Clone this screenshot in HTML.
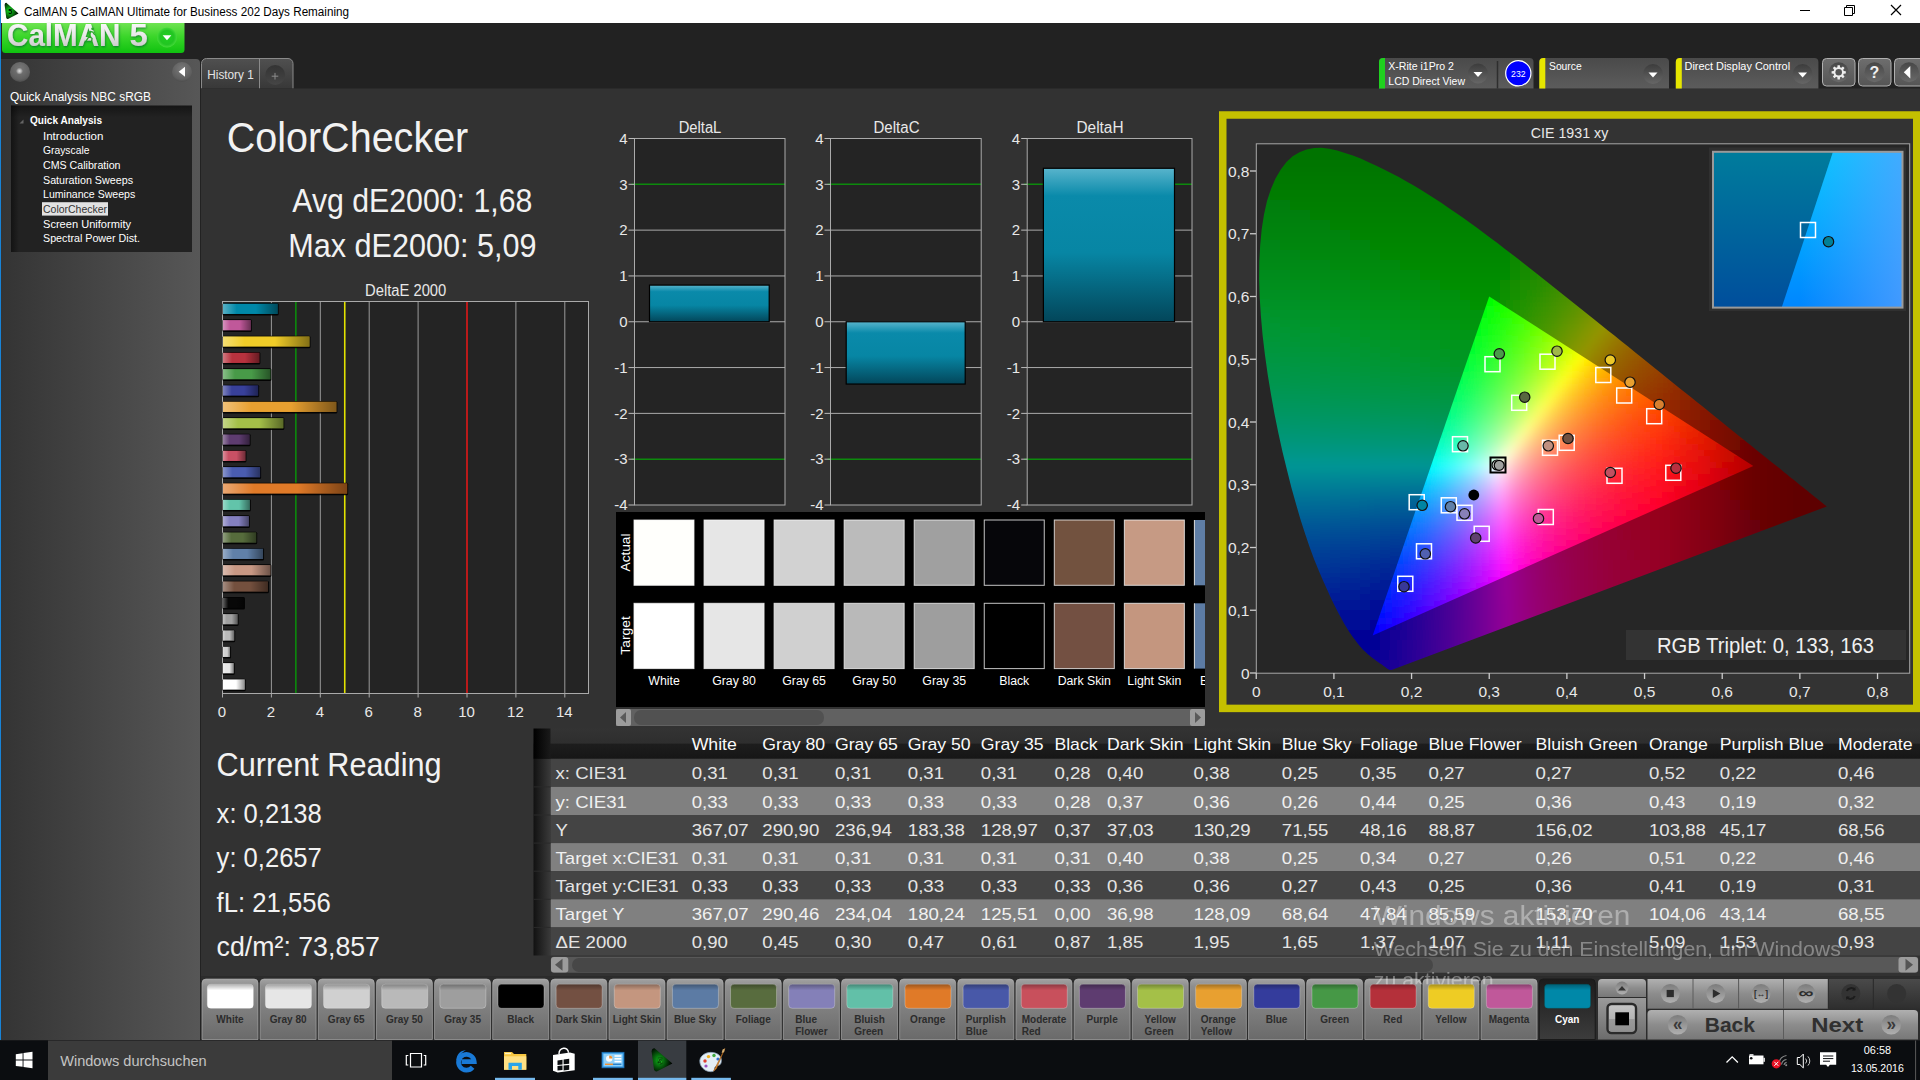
<!DOCTYPE html>
<html><head><meta charset="utf-8"><title>CalMAN 5</title>
<style>
html,body{margin:0;padding:0;background:#222;overflow:hidden}
svg{display:block;position:absolute;left:0;top:0}
text{font-family:"Liberation Sans",sans-serif}
.g10 rect{width:10px;height:10px}.g6 rect{width:6px;height:6px}
</style></head><body>
<svg width="1920" height="1080" viewBox="0 0 1920 1080">
<defs>
<radialGradient id="gico" cx="0.36" cy="0.5" r="0.62"><stop offset="0" stop-color="#14f02a"/><stop offset="0.35" stop-color="#0a9a12"/><stop offset="0.75" stop-color="#043c06"/><stop offset="1" stop-color="#000"/></radialGradient>
<linearGradient id="glogo" x1="0" y1="0" x2="0" y2="1"><stop offset="0" stop-color="#6fe352"/><stop offset="0.45" stop-color="#3bd62a"/><stop offset="1" stop-color="#0fc20f"/></linearGradient>
<linearGradient id="gtxt" x1="0" y1="0" x2="0" y2="1"><stop offset="0" stop-color="#ffffff"/><stop offset="0.5" stop-color="#e8e8e8"/><stop offset="1" stop-color="#bdbdbd"/></linearGradient>
<filter id="lsh" x="-5%" y="-20%" width="110%" height="150%"><feDropShadow dx="0.6" dy="1.2" stdDeviation="0.8" flood-color="#063" flood-opacity="0.75"/></filter>
<radialGradient id="gdrop" cx="0.5" cy="0.5" r="0.5"><stop offset="0" stop-color="#1fd01f"/><stop offset="0.7" stop-color="#22c522"/><stop offset="1" stop-color="#45da3a"/></radialGradient>
<linearGradient id="gside" x1="0" y1="0" x2="1" y2="0"><stop offset="0" stop-color="#343434"/><stop offset="1" stop-color="#575757"/></linearGradient>
<linearGradient id="gsidev" x1="0" y1="0" x2="0" y2="1"><stop offset="0" stop-color="#000" stop-opacity="0"/><stop offset="0.2" stop-color="#000" stop-opacity="0"/><stop offset="1" stop-color="#000" stop-opacity="0.12"/></linearGradient>
<radialGradient id="gball" cx="0.5" cy="0.35" r="0.65"><stop offset="0" stop-color="#7a7a7a"/><stop offset="0.8" stop-color="#5e5e5e"/><stop offset="1" stop-color="#4c4c4c"/></radialGradient>
<radialGradient id="gball2" cx="0.5" cy="0.5" r="0.5"><stop offset="0" stop-color="#e0e0e0"/><stop offset="0.5" stop-color="#b0b0b0"/><stop offset="1" stop-color="#6c6c6c"/></radialGradient>
<linearGradient id="gtree" x1="0" y1="0" x2="0" y2="1"><stop offset="0" stop-color="#151515"/><stop offset="0.08" stop-color="#222"/><stop offset="1" stop-color="#222"/></linearGradient>
<linearGradient id="gtreel" x1="0" y1="0" x2="1" y2="0"><stop offset="0" stop-color="#000" stop-opacity="0.45"/><stop offset="1" stop-color="#000" stop-opacity="0"/></linearGradient>
<linearGradient id="gtab" x1="0" y1="0" x2="0" y2="1"><stop offset="0" stop-color="#505050"/><stop offset="1" stop-color="#383838"/></linearGradient>
<linearGradient id="gplus" x1="0" y1="0" x2="0" y2="1"><stop offset="0" stop-color="#333"/><stop offset="1" stop-color="#464646"/></linearGradient>
<linearGradient id="gtb" x1="0" y1="0" x2="0" y2="1"><stop offset="0" stop-color="#4a4a4a"/><stop offset="1" stop-color="#5c5c5c"/></linearGradient>
<linearGradient id="gdd" x1="0" y1="0" x2="0" y2="1"><stop offset="0" stop-color="#3c3c3c"/><stop offset="1" stop-color="#666"/></linearGradient>
<linearGradient id="gbtn" x1="0" y1="0" x2="0" y2="1"><stop offset="0" stop-color="#6e6e6e"/><stop offset="1" stop-color="#555"/></linearGradient>
<linearGradient id="gbc" x1="0" y1="0" x2="0" y2="1"><stop offset="0" stop-color="#474747"/><stop offset="1" stop-color="#6a6a6a"/></linearGradient>
<linearGradient id="gbar" x1="0" y1="0" x2="1" y2="0"><stop offset="0" stop-color="#fff" stop-opacity="0.35"/><stop offset="0.25" stop-color="#fff" stop-opacity="0"/><stop offset="0.6" stop-color="#000" stop-opacity="0"/><stop offset="1" stop-color="#000" stop-opacity="0.45"/></linearGradient>
<linearGradient id="gcy" x1="0" y1="0" x2="0" y2="1"><stop offset="0" stop-color="#58b4cc"/><stop offset="0.18" stop-color="#0a8aaa"/><stop offset="0.55" stop-color="#0786a4"/><stop offset="1" stop-color="#03465a"/></linearGradient>
<clipPath id="cswp"><rect x="616" y="512" width="589" height="195"/></clipPath>
<linearGradient id="gin1" x1="0" y1="0" x2="0" y2="1"><stop offset="0" stop-color="#007c9c"/><stop offset="1" stop-color="#004e9c"/></linearGradient>
<linearGradient id="gin2" x1="0" y1="0" x2="0" y2="1"><stop offset="0" stop-color="#00caff"/><stop offset="1" stop-color="#0086ff"/></linearGradient>
<linearGradient id="gin3" x1="1800" y1="0" x2="1903" y2="0" gradientUnits="userSpaceOnUse"><stop offset="0" stop-color="#58a0ff" stop-opacity="0"/><stop offset="1" stop-color="#58a0ff" stop-opacity="0.75"/></linearGradient>
<linearGradient id="ghdr" x1="0" y1="0" x2="0" y2="1"><stop offset="0" stop-color="#333"/><stop offset="0.48" stop-color="#2e2e2e"/><stop offset="0.52" stop-color="#1d1d1d"/><stop offset="1" stop-color="#161616"/></linearGradient>
<linearGradient id="grh" x1="0" y1="0" x2="1" y2="0"><stop offset="0" stop-color="#111"/><stop offset="1" stop-color="#3a3a3a"/></linearGradient>
<linearGradient id="grh0" x1="0" y1="0" x2="1" y2="0"><stop offset="0" stop-color="#000"/><stop offset="1" stop-color="#1a1a1a"/></linearGradient>
<clipPath id="ctab"><rect x="533" y="728" width="1387" height="230"/></clipPath>
<linearGradient id="gbt" x1="0" y1="0" x2="0" y2="1"><stop offset="0" stop-color="#a2a2a2"/><stop offset="0.12" stop-color="#8e8e8e"/><stop offset="1" stop-color="#6a6a6a"/></linearGradient>
<linearGradient id="gbtsel" x1="0" y1="0" x2="0" y2="1"><stop offset="0" stop-color="#1c1c1c"/><stop offset="1" stop-color="#3c3c3c"/></linearGradient>
<linearGradient id="gsws" x1="0" y1="0" x2="0" y2="1"><stop offset="0" stop-color="#000" stop-opacity="0.3"/><stop offset="0.25" stop-color="#000" stop-opacity="0"/><stop offset="1" stop-color="#000" stop-opacity="0"/></linearGradient>
<linearGradient id="gct" x1="0" y1="0" x2="0" y2="1"><stop offset="0" stop-color="#b0b0b0"/><stop offset="0.5" stop-color="#8c8c8c"/><stop offset="1" stop-color="#787878"/></linearGradient>
<linearGradient id="gct2" x1="0" y1="0" x2="0" y2="1"><stop offset="0" stop-color="#9a9a9a"/><stop offset="1" stop-color="#6c6c6c"/></linearGradient>
<linearGradient id="gdis" x1="0" y1="0" x2="0" y2="1"><stop offset="0" stop-color="#4a4a4a"/><stop offset="1" stop-color="#2e2e2e"/></linearGradient>
<radialGradient id="gcb" cx="0.5" cy="0.3" r="0.7"><stop offset="0" stop-color="#8a8a8a"/><stop offset="1" stop-color="#a6a6a6"/></radialGradient>
<linearGradient id="gcbl" x1="0" y1="0" x2="0" y2="1"><stop offset="0" stop-color="#7c7c7c"/><stop offset="1" stop-color="#b0b0b0"/></linearGradient>
<linearGradient id="gstp" x1="0" y1="0" x2="0" y2="1"><stop offset="0" stop-color="#c4c4c4"/><stop offset="0.5" stop-color="#b4b4b4"/><stop offset="0.52" stop-color="#9a9a9a"/><stop offset="1" stop-color="#909090"/></linearGradient>
<radialGradient id="gico2" cx="0.36" cy="0.52" r="0.62"><stop offset="0" stop-color="#10b81c"/><stop offset="0.3" stop-color="#087a10"/><stop offset="0.7" stop-color="#033006"/><stop offset="1" stop-color="#000"/></radialGradient>
<clipPath id="cwm"><rect x="1300" y="880" width="620" height="104.3"/></clipPath>
</defs>
<rect x="0" y="0" width="1920" height="1080" fill="#222"/>
<rect x="0" y="0" width="1920" height="23" fill="#fff"/>
<text x="24" y="16" font-size="12" fill="#000" textLength="325" lengthAdjust="spacingAndGlyphs">CalMAN 5 CalMAN Ultimate for Business 202 Days Remaining</text>
<path d="M6.3 2.8 L18.5 13.4 L8 19 Q6.6 19.2 6.2 17.5 L4.6 5 Q4.8 2.6 6.3 2.8 Z" fill="url(#gico)"/>
<text x="8.3" y="13.6" font-size="7" fill="#000" font-weight="bold">5</text>
<line x1="1800" y1="10.5" x2="1810" y2="10.5" stroke="#000" stroke-width="1" />
<path d="M1844.5 7.5h8v8h-8z M1846.5 7.5v-2h8v8h-2" fill="none" stroke="#000" stroke-width="1"/>
<path d="M1891 5 L1901 15 M1901 5 L1891 15" fill="none" stroke="#000" stroke-width="1.2"/>
<rect x="0" y="0" width="1" height="1040" fill="#1883d7"/>
<path d="M2 23 H184.5 V49.5 a3.5 3.5 0 0 1 -3.5 3.5 H5.5 a3.5 3.5 0 0 1 -3.5 -3.5 Z" fill="url(#glogo)"/>
<g filter="url(#lsh)">
<text x="7" y="46.2" font-size="30.5" fill="url(#gtxt)" font-weight="bold" textLength="113.5" lengthAdjust="spacingAndGlyphs">CalMAN</text>
<text x="129.5" y="46.2" font-size="30.5" fill="url(#gtxt)" font-weight="bold" textLength="18.3" lengthAdjust="spacingAndGlyphs">5</text>
</g>
<path d="M88 33.5 l2.2 -2.2 l2.6 0.8 l1.6 2.4 M90.5 32 l-1.2 4.2 l2.8 2.2 l-0.6 3.4 M89.3 36.2 l-3 4.4" fill="none" stroke="#2aa82a" stroke-width="1.3" stroke-linecap="round" stroke-linejoin="round"/>
<circle cx="92.6" cy="28.8" r="1.4" fill="#2aa82a"/>
<circle cx="167" cy="37.5" r="10" fill="url(#gdrop)"/>
<path d="M162.6 35.3 h8.8 l-4.4 5 z" fill="#fff"/>
<path d="M1 59 H196 a4 4 0 0 1 4 4 V1040 H1 Z" fill="url(#gside)"/>
<circle cx="20" cy="72" r="10" fill="url(#gball)"/>
<circle cx="19.5" cy="71" r="3.6" fill="url(#gball2)"/>
<circle cx="182" cy="72" r="10" fill="url(#gball)"/>
<path d="M178.7 71.7 l6.3 -5 v10 z" fill="#fff"/>
<text x="10" y="101" font-size="12.5" fill="#fff" textLength="141" lengthAdjust="spacingAndGlyphs">Quick Analysis NBC sRGB</text>
<rect x="11" y="105.5" width="181" height="146.5" fill="url(#gtree)"/>
<rect x="11" y="105.5" width="8" height="146.5" fill="url(#gtreel)"/>
<path d="M19.5 123.5 l4 -4 v4 z" fill="#666"/>
<text x="30" y="124" font-size="10.8" fill="#fff" font-weight="bold" textLength="72" lengthAdjust="spacingAndGlyphs">Quick Analysis</text>
<text x="43" y="139.7" font-size="10.6" fill="#fff" textLength="60.3" lengthAdjust="spacingAndGlyphs">Introduction</text>
<text x="43" y="154.35" font-size="10.6" fill="#fff" textLength="46.4" lengthAdjust="spacingAndGlyphs">Grayscale</text>
<text x="43" y="169" font-size="10.6" fill="#fff" textLength="77.5" lengthAdjust="spacingAndGlyphs">CMS Calibration</text>
<text x="43" y="183.65" font-size="10.6" fill="#fff" textLength="90" lengthAdjust="spacingAndGlyphs">Saturation Sweeps</text>
<text x="43" y="198.3" font-size="10.6" fill="#fff" textLength="92.3" lengthAdjust="spacingAndGlyphs">Luminance Sweeps</text>
<rect x="42" y="202.2" width="66" height="13.4" fill="#e2e2e2"/>
<text x="43" y="212.95" font-size="10.6" fill="#333" textLength="64" lengthAdjust="spacingAndGlyphs">ColorChecker</text>
<text x="43" y="227.6" font-size="10.6" fill="#fff" textLength="88" lengthAdjust="spacingAndGlyphs">Screen Uniformity</text>
<text x="43" y="242.25" font-size="10.6" fill="#fff" textLength="97" lengthAdjust="spacingAndGlyphs">Spectral Power Dist.</text>
<path d="M201.5 88.5 V63.5 a5 5 0 0 1 5 -5 H288 a5 5 0 0 1 5 5 V88.5" fill="url(#gtab)" stroke="#8a8a8a" stroke-width="1"/>
<line x1="259.5" y1="59" x2="259.5" y2="88.5" stroke="#8a8a8a" stroke-width="1" />
<text x="207.3" y="78.8" font-size="13.2" fill="#e4e4e4" textLength="46.4" lengthAdjust="spacingAndGlyphs">History 1</text>
<circle cx="275.2" cy="75" r="10" fill="url(#gplus)"/>
<path d="M271.7 76.2 h6.6 M275 72.9 v6.6" fill="none" stroke="#8c8c8c" stroke-width="1"/>
<rect x="201" y="88.5" width="1719" height="888" fill="#323232"/>
<path d="M1379 88.5 V62 a4 4 0 0 1 4 -4 H1529.5 a4 4 0 0 1 4 4 V88.5 Z" fill="url(#gtb)"/>
<path d="M1379 88.5 V62 a4 4 0 0 1 4 -4 H1385 V88.5 Z" fill="#1fd11f"/>
<text x="1388.3" y="70" font-size="11.6" fill="#fff" textLength="65.6" lengthAdjust="spacingAndGlyphs">X-Rite i1Pro 2</text>
<text x="1388.3" y="84.6" font-size="11.6" fill="#fff" textLength="76.7" lengthAdjust="spacingAndGlyphs">LCD Direct View</text>
<circle cx="1478" cy="73.5" r="10" fill="url(#gdd)"/>
<path d="M1473.5 72 h9 l-4.5 5 z" fill="#fff"/>
<line x1="1497.5" y1="61" x2="1497.5" y2="88.5" stroke="#2e2e2e" stroke-width="1.5" />
<circle cx="1518.3" cy="73.3" r="12.6" fill="#0000ff" stroke="#fff" stroke-width="1.2"/>
<text x="1518.3" y="76.8" font-size="9.4" fill="#fff" text-anchor="middle" textLength="14.5" lengthAdjust="spacingAndGlyphs">232</text>
<path d="M1539.3 88.5 V62 a4 4 0 0 1 4 -4 H1665 a4 4 0 0 1 4 4 V88.5 Z" fill="url(#gtb)"/>
<path d="M1539.3 88.5 V62 a4 4 0 0 1 4 -4 H1545.3 V88.5 Z" fill="#e6e600"/>
<text x="1549" y="70" font-size="11.6" fill="#fff" textLength="32.7" lengthAdjust="spacingAndGlyphs">Source</text>
<circle cx="1653" cy="74" r="10" fill="url(#gdd)"/>
<path d="M1648.5 72.5 h9 l-4.5 5 z" fill="#fff"/>
<path d="M1675.8 88.5 V62 a4 4 0 0 1 4 -4 H1814.4 a4 4 0 0 1 4 4 V88.5 Z" fill="url(#gtb)"/>
<path d="M1675.8 88.5 V62 a4 4 0 0 1 4 -4 H1681.8 V88.5 Z" fill="#e6e600"/>
<text x="1684.5" y="70" font-size="11.6" fill="#fff" textLength="105.6" lengthAdjust="spacingAndGlyphs">Direct Display Control</text>
<circle cx="1802.6" cy="74" r="10" fill="url(#gdd)"/>
<path d="M1798.1 72.5 h9 l-4.5 5 z" fill="#fff"/>
<rect x="1822.5" y="58.5" width="32.5" height="27.5" fill="url(#gbtn)" rx="4" stroke="#b0b0b0" stroke-width="1"/>
<rect x="1858.5" y="58.5" width="32.5" height="27.5" fill="url(#gbtn)" rx="4" stroke="#b0b0b0" stroke-width="1"/>
<rect x="1894.5" y="58.5" width="32.5" height="27.5" fill="url(#gbtn)" rx="4" stroke="#b0b0b0" stroke-width="1"/>
<circle cx="1838.7" cy="72.3" r="10" fill="url(#gbc)"/>
<circle cx="1874.5" cy="72.3" r="10" fill="url(#gbc)"/>
<circle cx="1909" cy="72.3" r="10" fill="url(#gbc)"/>
<path d="M1845.81 71.15 L1845.81 73.45 L1843.73 73.64 L1843.20 74.91 L1844.54 76.52 L1842.92 78.14 L1841.31 76.80 L1840.04 77.33 L1839.85 79.41 L1837.55 79.41 L1837.36 77.33 L1836.09 76.80 L1834.48 78.14 L1832.86 76.52 L1834.20 74.91 L1833.67 73.64 L1831.59 73.45 L1831.59 71.15 L1833.67 70.96 L1834.20 69.69 L1832.86 68.08 L1834.48 66.46 L1836.09 67.80 L1837.36 67.27 L1837.55 65.19 L1839.85 65.19 L1840.04 67.27 L1841.31 67.80 L1842.92 66.46 L1844.54 68.08 L1843.20 69.69 L1843.73 70.96 Z" fill="#eee"/>
<circle cx="1838.7" cy="72.3" r="3.3" fill="#5a5a5a" stroke="#eee" stroke-width="0"/>
<circle cx="1838.7" cy="72.3" r="2.6" fill="#555"/>
<text x="1874.5" y="78" font-size="16" fill="#f0f0f0" font-weight="bold" text-anchor="middle">?</text>
<path d="M1903.8 72.3 l6.5 -6.3 v12.6 z" fill="#fff"/>
<text x="226.7" y="151.7" font-size="42.5" fill="#f2f2f2" textLength="241.6" lengthAdjust="spacingAndGlyphs">ColorChecker</text>
<text x="292.3" y="212.3" font-size="33" fill="#f2f2f2" textLength="240" lengthAdjust="spacingAndGlyphs">Avg dE2000: 1,68</text>
<text x="288.3" y="256.7" font-size="33" fill="#f2f2f2" textLength="248.3" lengthAdjust="spacingAndGlyphs">Max dE2000: 5,09</text>
<text x="365" y="295.6" font-size="16" fill="#e8e8e8" textLength="81.3" lengthAdjust="spacingAndGlyphs">DeltaE 2000</text>
<rect x="222.5" y="301.5" width="366" height="392" fill="#242424"/>
<line x1="271.4" y1="301.5" x2="271.4" y2="693.5" stroke="#9a9a9a" stroke-width="1" />
<line x1="320.3" y1="301.5" x2="320.3" y2="693.5" stroke="#9a9a9a" stroke-width="1" />
<line x1="369.2" y1="301.5" x2="369.2" y2="693.5" stroke="#9a9a9a" stroke-width="1" />
<line x1="418.1" y1="301.5" x2="418.1" y2="693.5" stroke="#9a9a9a" stroke-width="1" />
<line x1="515.9" y1="301.5" x2="515.9" y2="693.5" stroke="#9a9a9a" stroke-width="1" />
<line x1="564.8" y1="301.5" x2="564.8" y2="693.5" stroke="#9a9a9a" stroke-width="1" />
<line x1="295.85" y1="301.5" x2="295.85" y2="693.5" stroke="#0c8a0c" stroke-width="1.6" />
<line x1="344.75" y1="301.5" x2="344.75" y2="693.5" stroke="#e2e200" stroke-width="1.6" />
<line x1="467" y1="301.5" x2="467" y2="693.5" stroke="#e01818" stroke-width="1.6" />
<rect x="222.5" y="301.5" width="366" height="392" fill="none" stroke="#aaa" stroke-width="1"/>
<rect x="222.5" y="302.967" width="56.2125" height="12.6" fill="#000" rx="1.5" opacity="0.9"/>
<rect x="223" y="303.767" width="54.7125" height="10.2" fill="#0088a8"/>
<rect x="223" y="303.767" width="54.7125" height="10.2" fill="url(#gbar)"/>
<rect x="222.5" y="319.3" width="29.3175" height="12.6" fill="#000" rx="1.5" opacity="0.9"/>
<rect x="223" y="320.1" width="27.8175" height="10.2" fill="#c0589a"/>
<rect x="223" y="320.1" width="27.8175" height="10.2" fill="url(#gbar)"/>
<rect x="222.5" y="335.633" width="87.9975" height="12.6" fill="#000" rx="1.5" opacity="0.9"/>
<rect x="223" y="336.433" width="86.4975" height="10.2" fill="#f0cc28"/>
<rect x="223" y="336.433" width="86.4975" height="10.2" fill="url(#gbar)"/>
<rect x="222.5" y="351.967" width="37.875" height="12.6" fill="#000" rx="1.5" opacity="0.9"/>
<rect x="223" y="352.767" width="36.375" height="10.2" fill="#b8323e"/>
<rect x="223" y="352.767" width="36.375" height="10.2" fill="url(#gbar)"/>
<rect x="222.5" y="368.3" width="48.8775" height="12.6" fill="#000" rx="1.5" opacity="0.9"/>
<rect x="223" y="369.1" width="47.3775" height="10.2" fill="#489a48"/>
<rect x="223" y="369.1" width="47.3775" height="10.2" fill="url(#gbar)"/>
<rect x="222.5" y="384.633" width="36.6525" height="12.6" fill="#000" rx="1.5" opacity="0.9"/>
<rect x="223" y="385.433" width="35.1525" height="10.2" fill="#38409a"/>
<rect x="223" y="385.433" width="35.1525" height="10.2" fill="url(#gbar)"/>
<rect x="222.5" y="400.967" width="114.893" height="12.6" fill="#000" rx="1.5" opacity="0.9"/>
<rect x="223" y="401.767" width="113.393" height="10.2" fill="#e8a030"/>
<rect x="223" y="401.767" width="113.393" height="10.2" fill="url(#gbar)"/>
<rect x="222.5" y="417.3" width="61.836" height="12.6" fill="#000" rx="1.5" opacity="0.9"/>
<rect x="223" y="418.1" width="60.336" height="10.2" fill="#a4c048"/>
<rect x="223" y="418.1" width="60.336" height="10.2" fill="url(#gbar)"/>
<rect x="222.5" y="433.633" width="28.095" height="12.6" fill="#000" rx="1.5" opacity="0.9"/>
<rect x="223" y="434.433" width="26.595" height="10.2" fill="#5e3c70"/>
<rect x="223" y="434.433" width="26.595" height="10.2" fill="url(#gbar)"/>
<rect x="222.5" y="449.967" width="23.9385" height="12.6" fill="#000" rx="1.5" opacity="0.9"/>
<rect x="223" y="450.767" width="22.4385" height="10.2" fill="#c85064"/>
<rect x="223" y="450.767" width="22.4385" height="10.2" fill="url(#gbar)"/>
<rect x="222.5" y="466.3" width="38.6085" height="12.6" fill="#000" rx="1.5" opacity="0.9"/>
<rect x="223" y="467.1" width="37.1085" height="10.2" fill="#4a5cb0"/>
<rect x="223" y="467.1" width="37.1085" height="10.2" fill="url(#gbar)"/>
<rect x="222.5" y="482.633" width="125.65" height="12.6" fill="#000" rx="1.5" opacity="0.9"/>
<rect x="223" y="483.433" width="124.15" height="10.2" fill="#e07a28"/>
<rect x="223" y="483.433" width="124.15" height="10.2" fill="url(#gbar)"/>
<rect x="222.5" y="498.967" width="28.3395" height="12.6" fill="#000" rx="1.5" opacity="0.9"/>
<rect x="223" y="499.767" width="26.8395" height="10.2" fill="#62c4aa"/>
<rect x="223" y="499.767" width="26.8395" height="10.2" fill="url(#gbar)"/>
<rect x="222.5" y="515.3" width="27.3615" height="12.6" fill="#000" rx="1.5" opacity="0.9"/>
<rect x="223" y="516.1" width="25.8615" height="10.2" fill="#8480c0"/>
<rect x="223" y="516.1" width="25.8615" height="10.2" fill="url(#gbar)"/>
<rect x="222.5" y="531.633" width="34.6965" height="12.6" fill="#000" rx="1.5" opacity="0.9"/>
<rect x="223" y="532.433" width="33.1965" height="10.2" fill="#566c3c"/>
<rect x="223" y="532.433" width="33.1965" height="10.2" fill="url(#gbar)"/>
<rect x="222.5" y="547.967" width="41.5425" height="12.6" fill="#000" rx="1.5" opacity="0.9"/>
<rect x="223" y="548.767" width="40.0425" height="10.2" fill="#6080a8"/>
<rect x="223" y="548.767" width="40.0425" height="10.2" fill="url(#gbar)"/>
<rect x="222.5" y="564.3" width="48.8775" height="12.6" fill="#000" rx="1.5" opacity="0.9"/>
<rect x="223" y="565.1" width="47.3775" height="10.2" fill="#c89884"/>
<rect x="223" y="565.1" width="47.3775" height="10.2" fill="url(#gbar)"/>
<rect x="222.5" y="580.633" width="46.4325" height="12.6" fill="#000" rx="1.5" opacity="0.9"/>
<rect x="223" y="581.433" width="44.9325" height="10.2" fill="#74503e"/>
<rect x="223" y="581.433" width="44.9325" height="10.2" fill="url(#gbar)"/>
<rect x="222.5" y="596.967" width="22.4715" height="12.6" fill="#000" rx="1.5" opacity="0.9"/>
<rect x="223" y="597.767" width="20.9715" height="10.2" fill="#080808"/>
<rect x="223" y="597.767" width="20.9715" height="10.2" fill="url(#gbar)"/>
<rect x="222.5" y="613.3" width="16.1145" height="12.6" fill="#000" rx="1.5" opacity="0.9"/>
<rect x="223" y="614.1" width="14.6145" height="10.2" fill="#a0a0a0"/>
<rect x="223" y="614.1" width="14.6145" height="10.2" fill="url(#gbar)"/>
<rect x="222.5" y="629.633" width="12.6915" height="12.6" fill="#000" rx="1.5" opacity="0.9"/>
<rect x="223" y="630.433" width="11.1915" height="10.2" fill="#bababa"/>
<rect x="223" y="630.433" width="11.1915" height="10.2" fill="url(#gbar)"/>
<rect x="222.5" y="645.967" width="8.535" height="12.6" fill="#000" rx="1.5" opacity="0.9"/>
<rect x="223" y="646.767" width="7.035" height="10.2" fill="#d0d0d0"/>
<rect x="223" y="646.767" width="7.035" height="10.2" fill="url(#gbar)"/>
<rect x="222.5" y="662.3" width="12.2025" height="12.6" fill="#000" rx="1.5" opacity="0.9"/>
<rect x="223" y="663.1" width="10.7025" height="10.2" fill="#e6e6e6"/>
<rect x="223" y="663.1" width="10.7025" height="10.2" fill="url(#gbar)"/>
<rect x="222.5" y="678.633" width="23.205" height="12.6" fill="#000" rx="1.5" opacity="0.9"/>
<rect x="223" y="679.433" width="21.705" height="10.2" fill="#ffffff"/>
<rect x="223" y="679.433" width="21.705" height="10.2" fill="url(#gbar)"/>
<text x="222" y="716.5" font-size="15" fill="#e8e8e8" text-anchor="middle">0</text>
<line x1="222.5" y1="693.5" x2="222.5" y2="697.5" stroke="#aaa" stroke-width="1" />
<text x="270.9" y="716.5" font-size="15" fill="#e8e8e8" text-anchor="middle">2</text>
<line x1="271.4" y1="693.5" x2="271.4" y2="697.5" stroke="#aaa" stroke-width="1" />
<text x="319.8" y="716.5" font-size="15" fill="#e8e8e8" text-anchor="middle">4</text>
<line x1="320.3" y1="693.5" x2="320.3" y2="697.5" stroke="#aaa" stroke-width="1" />
<text x="368.7" y="716.5" font-size="15" fill="#e8e8e8" text-anchor="middle">6</text>
<line x1="369.2" y1="693.5" x2="369.2" y2="697.5" stroke="#aaa" stroke-width="1" />
<text x="417.6" y="716.5" font-size="15" fill="#e8e8e8" text-anchor="middle">8</text>
<line x1="418.1" y1="693.5" x2="418.1" y2="697.5" stroke="#aaa" stroke-width="1" />
<text x="466.5" y="716.5" font-size="15" fill="#e8e8e8" text-anchor="middle">10</text>
<line x1="467" y1="693.5" x2="467" y2="697.5" stroke="#aaa" stroke-width="1" />
<text x="515.4" y="716.5" font-size="15" fill="#e8e8e8" text-anchor="middle">12</text>
<line x1="515.9" y1="693.5" x2="515.9" y2="697.5" stroke="#aaa" stroke-width="1" />
<text x="564.3" y="716.5" font-size="15" fill="#e8e8e8" text-anchor="middle">14</text>
<line x1="564.8" y1="693.5" x2="564.8" y2="697.5" stroke="#aaa" stroke-width="1" />
<text x="678.7" y="132.5" font-size="16" fill="#e8e8e8" textLength="42.6" lengthAdjust="spacingAndGlyphs">DeltaL</text>
<rect x="634.5" y="138.5" width="150.5" height="366.5" fill="#242424"/>
<line x1="634.5" y1="230.125" x2="785" y2="230.125" stroke="#aaa" stroke-width="1" />
<line x1="634.5" y1="275.938" x2="785" y2="275.938" stroke="#aaa" stroke-width="1" />
<line x1="634.5" y1="321.75" x2="785" y2="321.75" stroke="#aaa" stroke-width="1" />
<line x1="634.5" y1="367.562" x2="785" y2="367.562" stroke="#aaa" stroke-width="1" />
<line x1="634.5" y1="413.375" x2="785" y2="413.375" stroke="#aaa" stroke-width="1" />
<line x1="631.5" y1="184.312" x2="785" y2="184.312" stroke="#0c8a0c" stroke-width="1.6" />
<line x1="631.5" y1="459.188" x2="785" y2="459.188" stroke="#0c8a0c" stroke-width="1.6" />
<rect x="634.5" y="138.5" width="150.5" height="366.5" fill="none" stroke="#aaa" stroke-width="1"/>
<line x1="628.5" y1="138.5" x2="634.5" y2="138.5" stroke="#bbb" stroke-width="1" />
<text x="627.5" y="143.7" font-size="15" fill="#e8e8e8" text-anchor="end">4</text>
<line x1="628.5" y1="184.312" x2="634.5" y2="184.312" stroke="#bbb" stroke-width="1" />
<text x="627.5" y="189.512" font-size="15" fill="#e8e8e8" text-anchor="end">3</text>
<line x1="628.5" y1="230.125" x2="634.5" y2="230.125" stroke="#bbb" stroke-width="1" />
<text x="627.5" y="235.325" font-size="15" fill="#e8e8e8" text-anchor="end">2</text>
<line x1="628.5" y1="275.938" x2="634.5" y2="275.938" stroke="#bbb" stroke-width="1" />
<text x="627.5" y="281.137" font-size="15" fill="#e8e8e8" text-anchor="end">1</text>
<line x1="628.5" y1="321.75" x2="634.5" y2="321.75" stroke="#bbb" stroke-width="1" />
<text x="627.5" y="326.95" font-size="15" fill="#e8e8e8" text-anchor="end">0</text>
<line x1="628.5" y1="367.562" x2="634.5" y2="367.562" stroke="#bbb" stroke-width="1" />
<text x="627.5" y="372.762" font-size="15" fill="#e8e8e8" text-anchor="end">-1</text>
<line x1="628.5" y1="413.375" x2="634.5" y2="413.375" stroke="#bbb" stroke-width="1" />
<text x="627.5" y="418.575" font-size="15" fill="#e8e8e8" text-anchor="end">-2</text>
<line x1="628.5" y1="459.188" x2="634.5" y2="459.188" stroke="#bbb" stroke-width="1" />
<text x="627.5" y="464.387" font-size="15" fill="#e8e8e8" text-anchor="end">-3</text>
<line x1="628.5" y1="505" x2="634.5" y2="505" stroke="#bbb" stroke-width="1" />
<text x="627.5" y="510.2" font-size="15" fill="#e8e8e8" text-anchor="end">-4</text>
<rect x="649.5" y="285.1" width="119.7" height="36.65" fill="url(#gcy)" stroke="#000" stroke-width="1.2"/>
<text x="873.5" y="132.5" font-size="16" fill="#e8e8e8" textLength="46" lengthAdjust="spacingAndGlyphs">DeltaC</text>
<rect x="830.5" y="138.5" width="150.7" height="366.5" fill="#242424"/>
<line x1="830.5" y1="230.125" x2="981.2" y2="230.125" stroke="#aaa" stroke-width="1" />
<line x1="830.5" y1="275.938" x2="981.2" y2="275.938" stroke="#aaa" stroke-width="1" />
<line x1="830.5" y1="321.75" x2="981.2" y2="321.75" stroke="#aaa" stroke-width="1" />
<line x1="830.5" y1="367.562" x2="981.2" y2="367.562" stroke="#aaa" stroke-width="1" />
<line x1="830.5" y1="413.375" x2="981.2" y2="413.375" stroke="#aaa" stroke-width="1" />
<line x1="827.5" y1="184.312" x2="981.2" y2="184.312" stroke="#0c8a0c" stroke-width="1.6" />
<line x1="827.5" y1="459.188" x2="981.2" y2="459.188" stroke="#0c8a0c" stroke-width="1.6" />
<rect x="830.5" y="138.5" width="150.7" height="366.5" fill="none" stroke="#aaa" stroke-width="1"/>
<line x1="824.5" y1="138.5" x2="830.5" y2="138.5" stroke="#bbb" stroke-width="1" />
<text x="823.5" y="143.7" font-size="15" fill="#e8e8e8" text-anchor="end">4</text>
<line x1="824.5" y1="184.312" x2="830.5" y2="184.312" stroke="#bbb" stroke-width="1" />
<text x="823.5" y="189.512" font-size="15" fill="#e8e8e8" text-anchor="end">3</text>
<line x1="824.5" y1="230.125" x2="830.5" y2="230.125" stroke="#bbb" stroke-width="1" />
<text x="823.5" y="235.325" font-size="15" fill="#e8e8e8" text-anchor="end">2</text>
<line x1="824.5" y1="275.938" x2="830.5" y2="275.938" stroke="#bbb" stroke-width="1" />
<text x="823.5" y="281.137" font-size="15" fill="#e8e8e8" text-anchor="end">1</text>
<line x1="824.5" y1="321.75" x2="830.5" y2="321.75" stroke="#bbb" stroke-width="1" />
<text x="823.5" y="326.95" font-size="15" fill="#e8e8e8" text-anchor="end">0</text>
<line x1="824.5" y1="367.562" x2="830.5" y2="367.562" stroke="#bbb" stroke-width="1" />
<text x="823.5" y="372.762" font-size="15" fill="#e8e8e8" text-anchor="end">-1</text>
<line x1="824.5" y1="413.375" x2="830.5" y2="413.375" stroke="#bbb" stroke-width="1" />
<text x="823.5" y="418.575" font-size="15" fill="#e8e8e8" text-anchor="end">-2</text>
<line x1="824.5" y1="459.188" x2="830.5" y2="459.188" stroke="#bbb" stroke-width="1" />
<text x="823.5" y="464.387" font-size="15" fill="#e8e8e8" text-anchor="end">-3</text>
<line x1="824.5" y1="505" x2="830.5" y2="505" stroke="#bbb" stroke-width="1" />
<text x="823.5" y="510.2" font-size="15" fill="#e8e8e8" text-anchor="end">-4</text>
<rect x="846.2" y="321.75" width="119" height="62.305" fill="url(#gcy)" stroke="#000" stroke-width="1.2"/>
<text x="1076.5" y="132.5" font-size="16" fill="#e8e8e8" textLength="47" lengthAdjust="spacingAndGlyphs">DeltaH</text>
<rect x="1027.2" y="138.5" width="164.8" height="366.5" fill="#242424"/>
<line x1="1027.2" y1="230.125" x2="1192" y2="230.125" stroke="#aaa" stroke-width="1" />
<line x1="1027.2" y1="275.938" x2="1192" y2="275.938" stroke="#aaa" stroke-width="1" />
<line x1="1027.2" y1="321.75" x2="1192" y2="321.75" stroke="#aaa" stroke-width="1" />
<line x1="1027.2" y1="367.562" x2="1192" y2="367.562" stroke="#aaa" stroke-width="1" />
<line x1="1027.2" y1="413.375" x2="1192" y2="413.375" stroke="#aaa" stroke-width="1" />
<line x1="1024.2" y1="184.312" x2="1192" y2="184.312" stroke="#0c8a0c" stroke-width="1.6" />
<line x1="1024.2" y1="459.188" x2="1192" y2="459.188" stroke="#0c8a0c" stroke-width="1.6" />
<rect x="1027.2" y="138.5" width="164.8" height="366.5" fill="none" stroke="#aaa" stroke-width="1"/>
<line x1="1021.2" y1="138.5" x2="1027.2" y2="138.5" stroke="#bbb" stroke-width="1" />
<text x="1020.2" y="143.7" font-size="15" fill="#e8e8e8" text-anchor="end">4</text>
<line x1="1021.2" y1="184.312" x2="1027.2" y2="184.312" stroke="#bbb" stroke-width="1" />
<text x="1020.2" y="189.512" font-size="15" fill="#e8e8e8" text-anchor="end">3</text>
<line x1="1021.2" y1="230.125" x2="1027.2" y2="230.125" stroke="#bbb" stroke-width="1" />
<text x="1020.2" y="235.325" font-size="15" fill="#e8e8e8" text-anchor="end">2</text>
<line x1="1021.2" y1="275.938" x2="1027.2" y2="275.938" stroke="#bbb" stroke-width="1" />
<text x="1020.2" y="281.137" font-size="15" fill="#e8e8e8" text-anchor="end">1</text>
<line x1="1021.2" y1="321.75" x2="1027.2" y2="321.75" stroke="#bbb" stroke-width="1" />
<text x="1020.2" y="326.95" font-size="15" fill="#e8e8e8" text-anchor="end">0</text>
<line x1="1021.2" y1="367.562" x2="1027.2" y2="367.562" stroke="#bbb" stroke-width="1" />
<text x="1020.2" y="372.762" font-size="15" fill="#e8e8e8" text-anchor="end">-1</text>
<line x1="1021.2" y1="413.375" x2="1027.2" y2="413.375" stroke="#bbb" stroke-width="1" />
<text x="1020.2" y="418.575" font-size="15" fill="#e8e8e8" text-anchor="end">-2</text>
<line x1="1021.2" y1="459.188" x2="1027.2" y2="459.188" stroke="#bbb" stroke-width="1" />
<text x="1020.2" y="464.387" font-size="15" fill="#e8e8e8" text-anchor="end">-3</text>
<line x1="1021.2" y1="505" x2="1027.2" y2="505" stroke="#bbb" stroke-width="1" />
<text x="1020.2" y="510.2" font-size="15" fill="#e8e8e8" text-anchor="end">-4</text>
<rect x="1043.4" y="168.278" width="131.1" height="153.472" fill="url(#gcy)" stroke="#000" stroke-width="1.2"/>
<rect x="616" y="512" width="589" height="195" fill="#000"/>
<rect x="634" y="520" width="60" height="65.3" fill="#fffffc" stroke="#f4f4f4" stroke-width="1" stroke-opacity="0.8"/>
<rect x="634" y="603.3" width="60" height="65.3" fill="#ffffff" stroke="#f4f4f4" stroke-width="1" stroke-opacity="0.8"/>
<text x="664" y="684.7" font-size="12.3" fill="#fff" text-anchor="middle">White</text>
<rect x="704.05" y="520" width="60" height="65.3" fill="#e6e6e6" stroke="#f4f4f4" stroke-width="1" stroke-opacity="0.8"/>
<rect x="704.05" y="603.3" width="60" height="65.3" fill="#e6e6e6" stroke="#f4f4f4" stroke-width="1" stroke-opacity="0.8"/>
<text x="734.05" y="684.7" font-size="12.3" fill="#fff" text-anchor="middle">Gray 80</text>
<rect x="774.1" y="520" width="60" height="65.3" fill="#d2d2d2" stroke="#f4f4f4" stroke-width="1" stroke-opacity="0.8"/>
<rect x="774.1" y="603.3" width="60" height="65.3" fill="#d0d0d0" stroke="#f4f4f4" stroke-width="1" stroke-opacity="0.8"/>
<text x="804.1" y="684.7" font-size="12.3" fill="#fff" text-anchor="middle">Gray 65</text>
<rect x="844.15" y="520" width="60" height="65.3" fill="#bbbbbb" stroke="#f4f4f4" stroke-width="1" stroke-opacity="0.8"/>
<rect x="844.15" y="603.3" width="60" height="65.3" fill="#b9b9b9" stroke="#f4f4f4" stroke-width="1" stroke-opacity="0.8"/>
<text x="874.15" y="684.7" font-size="12.3" fill="#fff" text-anchor="middle">Gray 50</text>
<rect x="914.2" y="520" width="60" height="65.3" fill="#a0a0a0" stroke="#f4f4f4" stroke-width="1" stroke-opacity="0.8"/>
<rect x="914.2" y="603.3" width="60" height="65.3" fill="#9e9e9e" stroke="#f4f4f4" stroke-width="1" stroke-opacity="0.8"/>
<text x="944.2" y="684.7" font-size="12.3" fill="#fff" text-anchor="middle">Gray 35</text>
<rect x="984.25" y="520" width="60" height="65.3" fill="#06060a" stroke="#f4f4f4" stroke-width="1" stroke-opacity="0.8"/>
<rect x="984.25" y="603.3" width="60" height="65.3" fill="#000000" stroke="#f4f4f4" stroke-width="1" stroke-opacity="0.8"/>
<text x="1014.25" y="684.7" font-size="12.3" fill="#fff" text-anchor="middle">Black</text>
<rect x="1054.3" y="520" width="60" height="65.3" fill="#72523f" stroke="#f4f4f4" stroke-width="1" stroke-opacity="0.8"/>
<rect x="1054.3" y="603.3" width="60" height="65.3" fill="#735042" stroke="#f4f4f4" stroke-width="1" stroke-opacity="0.8"/>
<text x="1084.3" y="684.7" font-size="12.3" fill="#fff" text-anchor="middle">Dark Skin</text>
<rect x="1124.35" y="520" width="60" height="65.3" fill="#c69a84" stroke="#f4f4f4" stroke-width="1" stroke-opacity="0.8"/>
<rect x="1124.35" y="603.3" width="60" height="65.3" fill="#c4967f" stroke="#f4f4f4" stroke-width="1" stroke-opacity="0.8"/>
<text x="1154.35" y="684.7" font-size="12.3" fill="#fff" text-anchor="middle">Light Skin</text>
<rect x="1194.4" y="520" width="10.6" height="65.3" fill="#5f7ea6"/>
<rect x="1194.4" y="603.3" width="10.6" height="65.3" fill="#5c7ba4"/>
<line x1="1194.4" y1="520" x2="1194.4" y2="585.3" stroke="#ddd" stroke-width="1" />
<line x1="1194.4" y1="603.3" x2="1194.4" y2="668.6" stroke="#ddd" stroke-width="1" />
<text x="1200" y="684.7" font-size="12.3" fill="#fff" clip-path="url(#cswp)">B</text>
<text fill="#fff" transform="translate(629.5 552.5) rotate(-90)" font-size="12.3" text-anchor="middle" textLength="38" lengthAdjust="spacingAndGlyphs">Actual</text>
<text fill="#fff" transform="translate(629.5 635.5) rotate(-90)" font-size="12.3" text-anchor="middle" textLength="38.5" lengthAdjust="spacingAndGlyphs">Target</text>
<rect x="616" y="709" width="589" height="17" fill="#616161"/>
<rect x="616" y="709" width="15" height="17" fill="#9c9c9c" rx="2"/>
<path d="M620 717.5 l6 -5.5 v11 z" fill="#5a5a5a"/>
<rect x="1190" y="709" width="15" height="17" fill="#9c9c9c" rx="2"/>
<path d="M1201 717.5 l-6 -5.5 v11 z" fill="#5a5a5a"/>
<rect x="634" y="710" width="190" height="15" fill="#515151" rx="7"/>
<rect x="1222.75" y="115" width="694" height="593.4" fill="#333" stroke="#c4c000" stroke-width="7.5"/>
<text x="1530.7" y="137.7" font-size="15" fill="#e8e8e8" textLength="77.6" lengthAdjust="spacingAndGlyphs">CIE 1931 xy</text>
<rect x="1256.3" y="143.8" width="653.4" height="529.4" fill="#262626" stroke="#a8a8a8" stroke-width="1"/>
<defs>
<clipPath id="cl"><path d="M1391.5 669.9 L1391.4 669.9 L1391.4 669.9 L1391.4 669.9 L1391.4 669.9 L1391.3 669.9 L1391.3 669.9 L1391.3 669.9 L1391.2 669.9 L1391.2 669.9 L1391.2 669.9 L1391.1 669.9 L1391.1 669.9 L1391.0 669.9 L1391.0 670.0 L1390.9 670.0 L1390.8 670.0 L1390.8 670.0 L1390.7 670.0 L1390.7 670.0 L1390.6 670.0 L1390.5 670.0 L1390.5 670.0 L1390.4 670.0 L1390.3 670.0 L1390.2 670.0 L1390.1 670.0 L1390.0 670.0 L1389.9 670.0 L1389.8 670.0 L1389.7 669.9 L1389.5 669.9 L1389.4 669.8 L1389.2 669.7 L1389.0 669.6 L1388.7 669.5 L1388.5 669.4 L1388.3 669.2 L1388.0 669.1 L1387.7 668.9 L1387.4 668.7 L1387.1 668.4 L1386.7 668.2 L1386.3 667.9 L1385.9 667.6 L1385.4 667.3 L1385.0 666.9 L1384.5 666.6 L1383.9 666.2 L1383.3 665.7 L1382.7 665.3 L1382.1 664.8 L1381.4 664.3 L1380.6 663.8 L1379.7 663.2 L1378.8 662.6 L1377.9 661.9 L1376.9 661.2 L1375.8 660.4 L1374.7 659.6 L1373.5 658.8 L1372.3 657.8 L1370.9 656.8 L1369.5 655.6 L1368.1 654.4 L1366.6 653.0 L1365.0 651.6 L1363.3 649.9 L1361.5 648.0 L1359.5 645.7 L1357.3 643.1 L1355.1 640.1 L1352.6 636.7 L1350.0 632.9 L1347.3 628.7 L1344.4 624.0 L1341.4 618.5 L1338.1 612.4 L1334.7 605.7 L1331.0 598.2 L1327.2 589.7 L1323.0 580.4 L1318.6 570.3 L1314.1 559.2 L1309.6 547.1 L1305.1 533.8 L1300.5 519.4 L1296.0 504.1 L1291.5 487.9 L1287.1 470.6 L1282.6 452.2 L1278.4 433.2 L1274.5 414.0 L1271.0 394.5 L1267.7 374.6 L1264.9 354.6 L1262.6 335.2 L1260.9 316.1 L1259.7 297.3 L1259.1 279.0 L1259.3 261.7 L1260.2 245.1 L1261.7 229.3 L1264.0 214.5 L1267.0 201.1 L1270.9 189.2 L1275.5 178.6 L1280.8 169.4 L1286.5 161.9 L1292.7 156.2 L1299.5 152.2 L1306.6 149.6 L1314.0 148.0 L1321.4 147.7 L1329.2 148.8 L1337.1 150.6 L1344.9 152.9 L1352.8 155.5 L1360.7 158.6 L1368.6 162.2 L1376.4 165.7 L1384.0 169.4 L1391.4 173.2 L1398.8 177.1 L1406.1 181.2 L1413.3 185.3 L1420.4 189.6 L1427.5 194.0 L1434.6 198.5 L1441.6 203.1 L1448.7 207.9 L1455.7 212.7 L1462.7 217.6 L1469.6 222.5 L1476.6 227.6 L1483.5 232.7 L1490.5 237.9 L1497.4 243.1 L1504.3 248.4 L1511.3 253.7 L1518.2 259.1 L1525.1 264.5 L1532.1 270.0 L1539.1 275.4 L1546.0 280.9 L1552.9 286.5 L1559.8 292.0 L1566.7 297.5 L1573.6 303.0 L1580.5 308.5 L1587.4 314.0 L1594.3 319.5 L1601.1 324.9 L1607.9 330.4 L1614.7 335.8 L1621.4 341.2 L1628.1 346.6 L1634.7 351.9 L1641.3 357.2 L1647.8 362.5 L1654.3 367.7 L1660.6 372.8 L1667.0 377.9 L1673.2 382.9 L1679.3 387.9 L1685.4 392.7 L1691.4 397.5 L1697.2 402.2 L1703.0 406.8 L1708.5 411.3 L1714.0 415.7 L1719.3 420.1 L1724.5 424.2 L1729.4 428.2 L1734.1 432.0 L1738.7 435.7 L1743.2 439.3 L1747.5 442.7 L1751.7 446.1 L1755.8 449.4 L1759.6 452.5 L1763.3 455.4 L1766.8 458.2 L1770.1 460.9 L1773.3 463.4 L1776.3 465.8 L1779.2 468.1 L1781.9 470.3 L1784.4 472.4 L1786.8 474.3 L1789.1 476.2 L1791.2 477.9 L1793.3 479.5 L1795.2 481.1 L1797.0 482.5 L1798.7 483.9 L1800.3 485.2 L1801.9 486.4 L1803.3 487.6 L1804.7 488.7 L1806.0 489.8 L1807.3 490.8 L1808.5 491.8 L1809.6 492.7 L1810.7 493.6 L1811.8 494.4 L1812.8 495.3 L1813.7 496.0 L1814.6 496.7 L1815.5 497.4 L1816.3 498.0 L1817.0 498.6 L1817.7 499.2 L1818.4 499.7 L1818.9 500.1 L1819.4 500.6 L1820.1 501.1 L1820.8 501.7 L1821.6 502.3 L1822.4 503.0 L1823.2 503.6 L1823.9 504.2 L1824.6 504.7 L1825.3 505.3 L1825.8 505.7 L1826.2 506.0 L1826.5 506.2 L1826.7 506.4 L1826.8 506.5Z"/></clipPath>
<clipPath id="ct"><path d="M1753.3 465.9 L1489.2 296.5 L1372.7 635.4Z"/></clipPath>
<filter id="b1" x="-5%" y="-5%" width="110%" height="110%"><feGaussianBlur stdDeviation="6"/></filter>
<filter id="b2" x="-5%" y="-5%" width="110%" height="110%"><feGaussianBlur stdDeviation="4"/></filter>
</defs>
<g clip-path="url(#cl)"><g filter="url(#b1)" class="g10">
<rect x="1290" y="130" fill="#007200"/>
<rect x="1300" y="130" fill="#007200"/>
<rect x="1310" y="130" fill="#007200"/>
<rect x="1320" y="130" fill="#007200"/>
<rect x="1330" y="130" fill="#007200"/>
<rect x="1340" y="130" fill="#007200"/>
<rect x="1280" y="140" fill="#007200"/>
<rect x="1290" y="140" fill="#007200"/>
<rect x="1300" y="140" fill="#007200"/>
<rect x="1310" y="140" fill="#007200"/>
<rect x="1320" y="140" fill="#007200"/>
<rect x="1330" y="140" fill="#007200"/>
<rect x="1340" y="140" fill="#007200"/>
<rect x="1350" y="140" fill="#007200"/>
<rect x="1360" y="140" fill="#007200"/>
<rect x="1370" y="140" fill="#007200"/>
<rect x="1270" y="150" fill="#007300"/>
<rect x="1280" y="150" fill="#007300"/>
<rect x="1290" y="150" fill="#007300"/>
<rect x="1300" y="150" fill="#007300"/>
<rect x="1310" y="150" fill="#007300"/>
<rect x="1320" y="150" fill="#007300"/>
<rect x="1330" y="150" fill="#007300"/>
<rect x="1340" y="150" fill="#007300"/>
<rect x="1350" y="150" fill="#007300"/>
<rect x="1360" y="150" fill="#007300"/>
<rect x="1370" y="150" fill="#007300"/>
<rect x="1380" y="150" fill="#007300"/>
<rect x="1390" y="150" fill="#007300"/>
<rect x="1260" y="160" fill="#007502"/>
<rect x="1270" y="160" fill="#007501"/>
<rect x="1280" y="160" fill="#007500"/>
<rect x="1290" y="160" fill="#007500"/>
<rect x="1300" y="160" fill="#007500"/>
<rect x="1310" y="160" fill="#007500"/>
<rect x="1320" y="160" fill="#007500"/>
<rect x="1330" y="160" fill="#007500"/>
<rect x="1340" y="160" fill="#007500"/>
<rect x="1350" y="160" fill="#007500"/>
<rect x="1360" y="160" fill="#007500"/>
<rect x="1370" y="160" fill="#007500"/>
<rect x="1380" y="160" fill="#007500"/>
<rect x="1390" y="160" fill="#007500"/>
<rect x="1400" y="160" fill="#007500"/>
<rect x="1410" y="160" fill="#007500"/>
<rect x="1260" y="170" fill="#007704"/>
<rect x="1270" y="170" fill="#007703"/>
<rect x="1280" y="170" fill="#007702"/>
<rect x="1290" y="170" fill="#007701"/>
<rect x="1300" y="170" fill="#007700"/>
<rect x="1310" y="170" fill="#007700"/>
<rect x="1320" y="170" fill="#007700"/>
<rect x="1330" y="170" fill="#007700"/>
<rect x="1340" y="170" fill="#007700"/>
<rect x="1350" y="170" fill="#007700"/>
<rect x="1360" y="170" fill="#007700"/>
<rect x="1370" y="170" fill="#007700"/>
<rect x="1380" y="170" fill="#007700"/>
<rect x="1390" y="170" fill="#007700"/>
<rect x="1400" y="170" fill="#007700"/>
<rect x="1410" y="170" fill="#007700"/>
<rect x="1420" y="170" fill="#007700"/>
<rect x="1250" y="180" fill="#007a06"/>
<rect x="1260" y="180" fill="#007a05"/>
<rect x="1270" y="180" fill="#007a04"/>
<rect x="1280" y="180" fill="#007a03"/>
<rect x="1290" y="180" fill="#007a02"/>
<rect x="1300" y="180" fill="#007a01"/>
<rect x="1310" y="180" fill="#007a00"/>
<rect x="1320" y="180" fill="#007a00"/>
<rect x="1330" y="180" fill="#007a00"/>
<rect x="1340" y="180" fill="#007a00"/>
<rect x="1350" y="180" fill="#007a00"/>
<rect x="1360" y="180" fill="#007a00"/>
<rect x="1370" y="180" fill="#007a00"/>
<rect x="1380" y="180" fill="#007a00"/>
<rect x="1390" y="180" fill="#007a00"/>
<rect x="1400" y="180" fill="#007a00"/>
<rect x="1410" y="180" fill="#007a00"/>
<rect x="1420" y="180" fill="#007a00"/>
<rect x="1430" y="180" fill="#007a00"/>
<rect x="1440" y="180" fill="#007a00"/>
<rect x="1250" y="190" fill="#007c08"/>
<rect x="1260" y="190" fill="#007c07"/>
<rect x="1270" y="190" fill="#007c06"/>
<rect x="1280" y="190" fill="#007c05"/>
<rect x="1290" y="190" fill="#007c04"/>
<rect x="1300" y="190" fill="#007c03"/>
<rect x="1310" y="190" fill="#007c02"/>
<rect x="1320" y="190" fill="#007c01"/>
<rect x="1330" y="190" fill="#007c00"/>
<rect x="1340" y="190" fill="#007c00"/>
<rect x="1350" y="190" fill="#007c00"/>
<rect x="1360" y="190" fill="#007c00"/>
<rect x="1370" y="190" fill="#007c00"/>
<rect x="1380" y="190" fill="#007c00"/>
<rect x="1390" y="190" fill="#007c00"/>
<rect x="1400" y="190" fill="#007c00"/>
<rect x="1410" y="190" fill="#007c00"/>
<rect x="1420" y="190" fill="#007c00"/>
<rect x="1430" y="190" fill="#007c00"/>
<rect x="1440" y="190" fill="#007c00"/>
<rect x="1450" y="190" fill="#007c00"/>
<rect x="1460" y="190" fill="#007c00"/>
<rect x="1250" y="200" fill="#007e0b"/>
<rect x="1260" y="200" fill="#007e09"/>
<rect x="1270" y="200" fill="#007e08"/>
<rect x="1280" y="200" fill="#007e07"/>
<rect x="1290" y="200" fill="#007e06"/>
<rect x="1300" y="200" fill="#007e05"/>
<rect x="1310" y="200" fill="#007e04"/>
<rect x="1320" y="200" fill="#007e03"/>
<rect x="1330" y="200" fill="#007e01"/>
<rect x="1340" y="200" fill="#007e00"/>
<rect x="1350" y="200" fill="#007e00"/>
<rect x="1360" y="200" fill="#007e00"/>
<rect x="1370" y="200" fill="#007e00"/>
<rect x="1380" y="200" fill="#007e00"/>
<rect x="1390" y="200" fill="#007e00"/>
<rect x="1400" y="200" fill="#007e00"/>
<rect x="1410" y="200" fill="#007e00"/>
<rect x="1420" y="200" fill="#007e00"/>
<rect x="1430" y="200" fill="#007e00"/>
<rect x="1440" y="200" fill="#007e00"/>
<rect x="1450" y="200" fill="#007e00"/>
<rect x="1460" y="200" fill="#007e00"/>
<rect x="1470" y="200" fill="#007e00"/>
<rect x="1240" y="210" fill="#00800e"/>
<rect x="1250" y="210" fill="#00800d"/>
<rect x="1260" y="210" fill="#00800c"/>
<rect x="1270" y="210" fill="#00800b"/>
<rect x="1280" y="210" fill="#008009"/>
<rect x="1290" y="210" fill="#008008"/>
<rect x="1300" y="210" fill="#008007"/>
<rect x="1310" y="210" fill="#008006"/>
<rect x="1320" y="210" fill="#008005"/>
<rect x="1330" y="210" fill="#008004"/>
<rect x="1340" y="210" fill="#008002"/>
<rect x="1350" y="210" fill="#008001"/>
<rect x="1360" y="210" fill="#008000"/>
<rect x="1370" y="210" fill="#008000"/>
<rect x="1380" y="210" fill="#008000"/>
<rect x="1390" y="210" fill="#008000"/>
<rect x="1400" y="210" fill="#008000"/>
<rect x="1410" y="210" fill="#008000"/>
<rect x="1420" y="210" fill="#008000"/>
<rect x="1430" y="210" fill="#008000"/>
<rect x="1440" y="210" fill="#008000"/>
<rect x="1450" y="210" fill="#008000"/>
<rect x="1460" y="210" fill="#008000"/>
<rect x="1470" y="210" fill="#008000"/>
<rect x="1480" y="210" fill="#008000"/>
<rect x="1240" y="220" fill="#008210"/>
<rect x="1250" y="220" fill="#00820f"/>
<rect x="1260" y="220" fill="#00820e"/>
<rect x="1270" y="220" fill="#00820d"/>
<rect x="1280" y="220" fill="#00820c"/>
<rect x="1290" y="220" fill="#00820b"/>
<rect x="1300" y="220" fill="#008209"/>
<rect x="1310" y="220" fill="#008208"/>
<rect x="1320" y="220" fill="#008207"/>
<rect x="1330" y="220" fill="#008206"/>
<rect x="1340" y="220" fill="#008204"/>
<rect x="1350" y="220" fill="#008203"/>
<rect x="1360" y="220" fill="#008202"/>
<rect x="1370" y="220" fill="#008200"/>
<rect x="1380" y="220" fill="#008200"/>
<rect x="1390" y="220" fill="#008200"/>
<rect x="1400" y="220" fill="#008200"/>
<rect x="1410" y="220" fill="#008200"/>
<rect x="1420" y="220" fill="#008200"/>
<rect x="1430" y="220" fill="#008200"/>
<rect x="1440" y="220" fill="#008200"/>
<rect x="1450" y="220" fill="#008200"/>
<rect x="1460" y="220" fill="#008200"/>
<rect x="1470" y="220" fill="#008200"/>
<rect x="1480" y="220" fill="#008200"/>
<rect x="1490" y="220" fill="#008200"/>
<rect x="1500" y="220" fill="#008200"/>
<rect x="1240" y="230" fill="#008413"/>
<rect x="1250" y="230" fill="#008412"/>
<rect x="1260" y="230" fill="#008411"/>
<rect x="1270" y="230" fill="#00840f"/>
<rect x="1280" y="230" fill="#00840e"/>
<rect x="1290" y="230" fill="#00840d"/>
<rect x="1300" y="230" fill="#00840c"/>
<rect x="1310" y="230" fill="#00840b"/>
<rect x="1320" y="230" fill="#008409"/>
<rect x="1330" y="230" fill="#008408"/>
<rect x="1340" y="230" fill="#008407"/>
<rect x="1350" y="230" fill="#008405"/>
<rect x="1360" y="230" fill="#008404"/>
<rect x="1370" y="230" fill="#008403"/>
<rect x="1380" y="230" fill="#008401"/>
<rect x="1390" y="230" fill="#008400"/>
<rect x="1400" y="230" fill="#008400"/>
<rect x="1410" y="230" fill="#008400"/>
<rect x="1420" y="230" fill="#008400"/>
<rect x="1430" y="230" fill="#008400"/>
<rect x="1440" y="230" fill="#008400"/>
<rect x="1450" y="230" fill="#008400"/>
<rect x="1460" y="230" fill="#008400"/>
<rect x="1470" y="230" fill="#008400"/>
<rect x="1480" y="230" fill="#008400"/>
<rect x="1490" y="230" fill="#008400"/>
<rect x="1500" y="230" fill="#008400"/>
<rect x="1510" y="230" fill="#038400"/>
<rect x="1240" y="240" fill="#008616"/>
<rect x="1250" y="240" fill="#008615"/>
<rect x="1260" y="240" fill="#008613"/>
<rect x="1270" y="240" fill="#008612"/>
<rect x="1280" y="240" fill="#008611"/>
<rect x="1290" y="240" fill="#008610"/>
<rect x="1300" y="240" fill="#00860f"/>
<rect x="1310" y="240" fill="#00860d"/>
<rect x="1320" y="240" fill="#00860c"/>
<rect x="1330" y="240" fill="#00860b"/>
<rect x="1340" y="240" fill="#008609"/>
<rect x="1350" y="240" fill="#008608"/>
<rect x="1360" y="240" fill="#008607"/>
<rect x="1370" y="240" fill="#008605"/>
<rect x="1380" y="240" fill="#008604"/>
<rect x="1390" y="240" fill="#008602"/>
<rect x="1400" y="240" fill="#008601"/>
<rect x="1410" y="240" fill="#008600"/>
<rect x="1420" y="240" fill="#008600"/>
<rect x="1430" y="240" fill="#008600"/>
<rect x="1440" y="240" fill="#008600"/>
<rect x="1450" y="240" fill="#008600"/>
<rect x="1460" y="240" fill="#008600"/>
<rect x="1470" y="240" fill="#008600"/>
<rect x="1480" y="240" fill="#008600"/>
<rect x="1490" y="240" fill="#008600"/>
<rect x="1500" y="240" fill="#008600"/>
<rect x="1510" y="240" fill="#058600"/>
<rect x="1520" y="240" fill="#0c8600"/>
<rect x="1240" y="250" fill="#008819"/>
<rect x="1250" y="250" fill="#008817"/>
<rect x="1260" y="250" fill="#008816"/>
<rect x="1270" y="250" fill="#008815"/>
<rect x="1280" y="250" fill="#008814"/>
<rect x="1290" y="250" fill="#008813"/>
<rect x="1300" y="250" fill="#008811"/>
<rect x="1310" y="250" fill="#008810"/>
<rect x="1320" y="250" fill="#00880f"/>
<rect x="1330" y="250" fill="#00880d"/>
<rect x="1340" y="250" fill="#00880c"/>
<rect x="1350" y="250" fill="#00880b"/>
<rect x="1360" y="250" fill="#008809"/>
<rect x="1370" y="250" fill="#008808"/>
<rect x="1380" y="250" fill="#008806"/>
<rect x="1390" y="250" fill="#008805"/>
<rect x="1400" y="250" fill="#008803"/>
<rect x="1410" y="250" fill="#008802"/>
<rect x="1420" y="250" fill="#008800"/>
<rect x="1430" y="250" fill="#008800"/>
<rect x="1440" y="250" fill="#008800"/>
<rect x="1450" y="250" fill="#008800"/>
<rect x="1460" y="250" fill="#008800"/>
<rect x="1470" y="250" fill="#008800"/>
<rect x="1480" y="250" fill="#008800"/>
<rect x="1490" y="250" fill="#008800"/>
<rect x="1500" y="250" fill="#018800"/>
<rect x="1510" y="250" fill="#088800"/>
<rect x="1520" y="250" fill="#0f8800"/>
<rect x="1530" y="250" fill="#178800"/>
<rect x="1540" y="250" fill="#1f8800"/>
<rect x="1240" y="260" fill="#008a1c"/>
<rect x="1250" y="260" fill="#008a1b"/>
<rect x="1260" y="260" fill="#008a19"/>
<rect x="1270" y="260" fill="#008a18"/>
<rect x="1280" y="260" fill="#008a17"/>
<rect x="1290" y="260" fill="#008a16"/>
<rect x="1300" y="260" fill="#008a14"/>
<rect x="1310" y="260" fill="#008a13"/>
<rect x="1320" y="260" fill="#008a12"/>
<rect x="1330" y="260" fill="#008a10"/>
<rect x="1340" y="260" fill="#008a0f"/>
<rect x="1350" y="260" fill="#008a0e"/>
<rect x="1360" y="260" fill="#008a0c"/>
<rect x="1370" y="260" fill="#008a0b"/>
<rect x="1380" y="260" fill="#008a09"/>
<rect x="1390" y="260" fill="#008a08"/>
<rect x="1400" y="260" fill="#008a06"/>
<rect x="1410" y="260" fill="#008a04"/>
<rect x="1420" y="260" fill="#008a03"/>
<rect x="1430" y="260" fill="#008a01"/>
<rect x="1440" y="260" fill="#008a00"/>
<rect x="1450" y="260" fill="#008a00"/>
<rect x="1460" y="260" fill="#008a00"/>
<rect x="1470" y="260" fill="#008a00"/>
<rect x="1480" y="260" fill="#008a00"/>
<rect x="1490" y="260" fill="#008a00"/>
<rect x="1500" y="260" fill="#048a00"/>
<rect x="1510" y="260" fill="#0b8a00"/>
<rect x="1520" y="260" fill="#138a00"/>
<rect x="1530" y="260" fill="#1b8a00"/>
<rect x="1540" y="260" fill="#238a00"/>
<rect x="1550" y="260" fill="#2b8a00"/>
<rect x="1240" y="270" fill="#008c1f"/>
<rect x="1250" y="270" fill="#008c1e"/>
<rect x="1260" y="270" fill="#008c1d"/>
<rect x="1270" y="270" fill="#008c1c"/>
<rect x="1280" y="270" fill="#008c1a"/>
<rect x="1290" y="270" fill="#008c19"/>
<rect x="1300" y="270" fill="#008c18"/>
<rect x="1310" y="270" fill="#008c16"/>
<rect x="1320" y="270" fill="#008c15"/>
<rect x="1330" y="270" fill="#008c14"/>
<rect x="1340" y="270" fill="#008c12"/>
<rect x="1350" y="270" fill="#008c11"/>
<rect x="1360" y="270" fill="#008c0f"/>
<rect x="1370" y="270" fill="#008c0e"/>
<rect x="1380" y="270" fill="#008c0c"/>
<rect x="1390" y="270" fill="#008c0b"/>
<rect x="1400" y="270" fill="#008c09"/>
<rect x="1410" y="270" fill="#008c07"/>
<rect x="1420" y="270" fill="#008c06"/>
<rect x="1430" y="270" fill="#008c04"/>
<rect x="1440" y="270" fill="#008c02"/>
<rect x="1450" y="270" fill="#008c00"/>
<rect x="1460" y="270" fill="#008c00"/>
<rect x="1470" y="270" fill="#008c00"/>
<rect x="1480" y="270" fill="#008c00"/>
<rect x="1490" y="270" fill="#008c00"/>
<rect x="1500" y="270" fill="#068c00"/>
<rect x="1510" y="270" fill="#0e8c00"/>
<rect x="1520" y="270" fill="#168c00"/>
<rect x="1530" y="270" fill="#1f8c00"/>
<rect x="1540" y="270" fill="#278c00"/>
<rect x="1550" y="270" fill="#308c00"/>
<rect x="1560" y="270" fill="#398c00"/>
<rect x="1240" y="280" fill="#008e23"/>
<rect x="1250" y="280" fill="#008e22"/>
<rect x="1260" y="280" fill="#008e20"/>
<rect x="1270" y="280" fill="#008e1f"/>
<rect x="1280" y="280" fill="#008e1e"/>
<rect x="1290" y="280" fill="#008e1d"/>
<rect x="1300" y="280" fill="#008e1b"/>
<rect x="1310" y="280" fill="#008e1a"/>
<rect x="1320" y="280" fill="#008e19"/>
<rect x="1330" y="280" fill="#008e17"/>
<rect x="1340" y="280" fill="#008e16"/>
<rect x="1350" y="280" fill="#008e14"/>
<rect x="1360" y="280" fill="#008e13"/>
<rect x="1370" y="280" fill="#008e11"/>
<rect x="1380" y="280" fill="#008e10"/>
<rect x="1390" y="280" fill="#008e0e"/>
<rect x="1400" y="280" fill="#008e0c"/>
<rect x="1410" y="280" fill="#008e0b"/>
<rect x="1420" y="280" fill="#008e09"/>
<rect x="1430" y="280" fill="#008e07"/>
<rect x="1440" y="280" fill="#008e05"/>
<rect x="1450" y="280" fill="#008e03"/>
<rect x="1460" y="280" fill="#008e01"/>
<rect x="1470" y="280" fill="#008e00"/>
<rect x="1480" y="280" fill="#008e00"/>
<rect x="1490" y="280" fill="#018e00"/>
<rect x="1500" y="280" fill="#098e00"/>
<rect x="1510" y="280" fill="#128e00"/>
<rect x="1520" y="280" fill="#1a8e00"/>
<rect x="1530" y="280" fill="#238e00"/>
<rect x="1540" y="280" fill="#2c8e00"/>
<rect x="1550" y="280" fill="#368e00"/>
<rect x="1560" y="280" fill="#3f8e00"/>
<rect x="1570" y="280" fill="#498e00"/>
<rect x="1240" y="290" fill="#009027"/>
<rect x="1250" y="290" fill="#009025"/>
<rect x="1260" y="290" fill="#009024"/>
<rect x="1270" y="290" fill="#009023"/>
<rect x="1280" y="290" fill="#009022"/>
<rect x="1290" y="290" fill="#009020"/>
<rect x="1300" y="290" fill="#00901f"/>
<rect x="1310" y="290" fill="#00901e"/>
<rect x="1320" y="290" fill="#00901c"/>
<rect x="1330" y="290" fill="#00901b"/>
<rect x="1340" y="290" fill="#00901a"/>
<rect x="1350" y="290" fill="#009018"/>
<rect x="1360" y="290" fill="#009016"/>
<rect x="1370" y="290" fill="#009015"/>
<rect x="1380" y="290" fill="#009013"/>
<rect x="1390" y="290" fill="#009012"/>
<rect x="1400" y="290" fill="#009010"/>
<rect x="1410" y="290" fill="#00900e"/>
<rect x="1420" y="290" fill="#00900c"/>
<rect x="1430" y="290" fill="#00900b"/>
<rect x="1440" y="290" fill="#009009"/>
<rect x="1450" y="290" fill="#009007"/>
<rect x="1460" y="290" fill="#009005"/>
<rect x="1470" y="290" fill="#009003"/>
<rect x="1480" y="290" fill="#009000"/>
<rect x="1490" y="290" fill="#049000"/>
<rect x="1500" y="290" fill="#0d9000"/>
<rect x="1510" y="290" fill="#169000"/>
<rect x="1520" y="290" fill="#1f9000"/>
<rect x="1530" y="290" fill="#289000"/>
<rect x="1540" y="290" fill="#329000"/>
<rect x="1550" y="290" fill="#3c9000"/>
<rect x="1560" y="290" fill="#469000"/>
<rect x="1570" y="290" fill="#519000"/>
<rect x="1580" y="290" fill="#5c9000"/>
<rect x="1590" y="290" fill="#679000"/>
<rect x="1240" y="300" fill="#00922b"/>
<rect x="1250" y="300" fill="#00922a"/>
<rect x="1260" y="300" fill="#009228"/>
<rect x="1270" y="300" fill="#009227"/>
<rect x="1280" y="300" fill="#009226"/>
<rect x="1290" y="300" fill="#009225"/>
<rect x="1300" y="300" fill="#009223"/>
<rect x="1310" y="300" fill="#009222"/>
<rect x="1320" y="300" fill="#009220"/>
<rect x="1330" y="300" fill="#00921f"/>
<rect x="1340" y="300" fill="#00921e"/>
<rect x="1350" y="300" fill="#00921c"/>
<rect x="1360" y="300" fill="#00921a"/>
<rect x="1370" y="300" fill="#009219"/>
<rect x="1380" y="300" fill="#009217"/>
<rect x="1390" y="300" fill="#009216"/>
<rect x="1400" y="300" fill="#009214"/>
<rect x="1410" y="300" fill="#009212"/>
<rect x="1420" y="300" fill="#009210"/>
<rect x="1430" y="300" fill="#00920e"/>
<rect x="1440" y="300" fill="#00920c"/>
<rect x="1450" y="300" fill="#00920a"/>
<rect x="1460" y="300" fill="#009208"/>
<rect x="1470" y="300" fill="#009206"/>
<rect x="1480" y="300" fill="#009204"/>
<rect x="1490" y="300" fill="#089202"/>
<rect x="1500" y="300" fill="#119200"/>
<rect x="1510" y="300" fill="#1a9200"/>
<rect x="1520" y="300" fill="#239200"/>
<rect x="1530" y="300" fill="#2d9200"/>
<rect x="1540" y="300" fill="#389200"/>
<rect x="1550" y="300" fill="#429200"/>
<rect x="1560" y="300" fill="#4d9200"/>
<rect x="1570" y="300" fill="#599200"/>
<rect x="1580" y="300" fill="#649200"/>
<rect x="1590" y="300" fill="#719200"/>
<rect x="1600" y="300" fill="#7e9200"/>
<rect x="1240" y="310" fill="#00942f"/>
<rect x="1250" y="310" fill="#00942e"/>
<rect x="1260" y="310" fill="#00942d"/>
<rect x="1270" y="310" fill="#00942c"/>
<rect x="1280" y="310" fill="#00942a"/>
<rect x="1290" y="310" fill="#009429"/>
<rect x="1300" y="310" fill="#009428"/>
<rect x="1310" y="310" fill="#009426"/>
<rect x="1320" y="310" fill="#009425"/>
<rect x="1330" y="310" fill="#009423"/>
<rect x="1340" y="310" fill="#009422"/>
<rect x="1350" y="310" fill="#009420"/>
<rect x="1360" y="310" fill="#00941f"/>
<rect x="1370" y="310" fill="#00941d"/>
<rect x="1380" y="310" fill="#00941c"/>
<rect x="1390" y="310" fill="#00941a"/>
<rect x="1400" y="310" fill="#009418"/>
<rect x="1410" y="310" fill="#009416"/>
<rect x="1420" y="310" fill="#009414"/>
<rect x="1430" y="310" fill="#009413"/>
<rect x="1440" y="310" fill="#009411"/>
<rect x="1450" y="310" fill="#00940e"/>
<rect x="1460" y="310" fill="#00940c"/>
<rect x="1470" y="310" fill="#00940a"/>
<rect x="1480" y="310" fill="#029408"/>
<rect x="1490" y="310" fill="#0b9406"/>
<rect x="1500" y="310" fill="#159403"/>
<rect x="1510" y="310" fill="#1e9401"/>
<rect x="1520" y="310" fill="#299400"/>
<rect x="1530" y="310" fill="#339400"/>
<rect x="1540" y="310" fill="#3e9400"/>
<rect x="1550" y="310" fill="#499400"/>
<rect x="1560" y="310" fill="#559400"/>
<rect x="1570" y="310" fill="#619400"/>
<rect x="1580" y="310" fill="#6e9400"/>
<rect x="1590" y="310" fill="#7b9400"/>
<rect x="1600" y="310" fill="#899400"/>
<rect x="1610" y="310" fill="#949000"/>
<rect x="1240" y="320" fill="#009634"/>
<rect x="1250" y="320" fill="#009633"/>
<rect x="1260" y="320" fill="#009632"/>
<rect x="1270" y="320" fill="#009630"/>
<rect x="1280" y="320" fill="#00962f"/>
<rect x="1290" y="320" fill="#00962e"/>
<rect x="1300" y="320" fill="#00962c"/>
<rect x="1310" y="320" fill="#00962b"/>
<rect x="1320" y="320" fill="#00962a"/>
<rect x="1330" y="320" fill="#009628"/>
<rect x="1340" y="320" fill="#009627"/>
<rect x="1350" y="320" fill="#009625"/>
<rect x="1360" y="320" fill="#009624"/>
<rect x="1370" y="320" fill="#009622"/>
<rect x="1380" y="320" fill="#009620"/>
<rect x="1390" y="320" fill="#00961f"/>
<rect x="1400" y="320" fill="#00961d"/>
<rect x="1410" y="320" fill="#00961b"/>
<rect x="1420" y="320" fill="#009619"/>
<rect x="1430" y="320" fill="#009617"/>
<rect x="1440" y="320" fill="#009615"/>
<rect x="1450" y="320" fill="#009613"/>
<rect x="1460" y="320" fill="#009611"/>
<rect x="1470" y="320" fill="#00960f"/>
<rect x="1480" y="320" fill="#05960c"/>
<rect x="1490" y="320" fill="#0f960a"/>
<rect x="1500" y="320" fill="#199608"/>
<rect x="1510" y="320" fill="#249605"/>
<rect x="1520" y="320" fill="#2e9602"/>
<rect x="1530" y="320" fill="#3a9600"/>
<rect x="1540" y="320" fill="#459600"/>
<rect x="1550" y="320" fill="#519600"/>
<rect x="1560" y="320" fill="#5e9600"/>
<rect x="1570" y="320" fill="#6b9600"/>
<rect x="1580" y="320" fill="#799600"/>
<rect x="1590" y="320" fill="#879600"/>
<rect x="1600" y="320" fill="#969600"/>
<rect x="1610" y="320" fill="#968800"/>
<rect x="1620" y="320" fill="#967c00"/>
<rect x="1240" y="330" fill="#009639"/>
<rect x="1250" y="330" fill="#009637"/>
<rect x="1260" y="330" fill="#009636"/>
<rect x="1270" y="330" fill="#009635"/>
<rect x="1280" y="330" fill="#009634"/>
<rect x="1290" y="330" fill="#009632"/>
<rect x="1300" y="330" fill="#009631"/>
<rect x="1310" y="330" fill="#009630"/>
<rect x="1320" y="330" fill="#00962e"/>
<rect x="1330" y="330" fill="#00962d"/>
<rect x="1340" y="330" fill="#00962b"/>
<rect x="1350" y="330" fill="#00962a"/>
<rect x="1360" y="330" fill="#009628"/>
<rect x="1370" y="330" fill="#009627"/>
<rect x="1380" y="330" fill="#009625"/>
<rect x="1390" y="330" fill="#009623"/>
<rect x="1400" y="330" fill="#009621"/>
<rect x="1410" y="330" fill="#009620"/>
<rect x="1420" y="330" fill="#00961e"/>
<rect x="1430" y="330" fill="#00961c"/>
<rect x="1440" y="330" fill="#00961a"/>
<rect x="1450" y="330" fill="#009618"/>
<rect x="1460" y="330" fill="#009616"/>
<rect x="1470" y="330" fill="#009613"/>
<rect x="1480" y="330" fill="#099611"/>
<rect x="1490" y="330" fill="#13960f"/>
<rect x="1500" y="330" fill="#1e960c"/>
<rect x="1510" y="330" fill="#29960a"/>
<rect x="1520" y="330" fill="#349607"/>
<rect x="1530" y="330" fill="#409604"/>
<rect x="1540" y="330" fill="#4c9601"/>
<rect x="1550" y="330" fill="#599600"/>
<rect x="1560" y="330" fill="#679600"/>
<rect x="1570" y="330" fill="#759600"/>
<rect x="1580" y="330" fill="#839600"/>
<rect x="1590" y="330" fill="#929600"/>
<rect x="1600" y="330" fill="#968b00"/>
<rect x="1610" y="330" fill="#967f00"/>
<rect x="1620" y="330" fill="#967300"/>
<rect x="1630" y="330" fill="#966900"/>
<rect x="1640" y="330" fill="#966100"/>
<rect x="1240" y="340" fill="#00963d"/>
<rect x="1250" y="340" fill="#00963c"/>
<rect x="1260" y="340" fill="#00963b"/>
<rect x="1270" y="340" fill="#00963a"/>
<rect x="1280" y="340" fill="#009638"/>
<rect x="1290" y="340" fill="#009637"/>
<rect x="1300" y="340" fill="#009636"/>
<rect x="1310" y="340" fill="#009634"/>
<rect x="1320" y="340" fill="#009633"/>
<rect x="1330" y="340" fill="#009632"/>
<rect x="1340" y="340" fill="#009630"/>
<rect x="1350" y="340" fill="#00962f"/>
<rect x="1360" y="340" fill="#00962d"/>
<rect x="1370" y="340" fill="#00962c"/>
<rect x="1380" y="340" fill="#00962a"/>
<rect x="1390" y="340" fill="#009628"/>
<rect x="1400" y="340" fill="#009626"/>
<rect x="1410" y="340" fill="#009625"/>
<rect x="1420" y="340" fill="#009623"/>
<rect x="1430" y="340" fill="#009621"/>
<rect x="1440" y="340" fill="#00961f"/>
<rect x="1450" y="340" fill="#00961d"/>
<rect x="1460" y="340" fill="#00961b"/>
<rect x="1470" y="340" fill="#029618"/>
<rect x="1480" y="340" fill="#0d9616"/>
<rect x="1490" y="340" fill="#189614"/>
<rect x="1500" y="340" fill="#239611"/>
<rect x="1510" y="340" fill="#2e960f"/>
<rect x="1520" y="340" fill="#3a960c"/>
<rect x="1530" y="340" fill="#479609"/>
<rect x="1540" y="340" fill="#549606"/>
<rect x="1550" y="340" fill="#629603"/>
<rect x="1560" y="340" fill="#709600"/>
<rect x="1570" y="340" fill="#7f9600"/>
<rect x="1580" y="340" fill="#8e9600"/>
<rect x="1590" y="340" fill="#968f00"/>
<rect x="1600" y="340" fill="#968100"/>
<rect x="1610" y="340" fill="#967500"/>
<rect x="1620" y="340" fill="#966b00"/>
<rect x="1630" y="340" fill="#966200"/>
<rect x="1640" y="340" fill="#965a00"/>
<rect x="1650" y="340" fill="#965200"/>
<rect x="1240" y="350" fill="#009642"/>
<rect x="1250" y="350" fill="#009641"/>
<rect x="1260" y="350" fill="#009640"/>
<rect x="1270" y="350" fill="#00963f"/>
<rect x="1280" y="350" fill="#00963d"/>
<rect x="1290" y="350" fill="#00963c"/>
<rect x="1300" y="350" fill="#00963b"/>
<rect x="1310" y="350" fill="#00963a"/>
<rect x="1320" y="350" fill="#009638"/>
<rect x="1330" y="350" fill="#009637"/>
<rect x="1340" y="350" fill="#009635"/>
<rect x="1350" y="350" fill="#009634"/>
<rect x="1360" y="350" fill="#009632"/>
<rect x="1370" y="350" fill="#009631"/>
<rect x="1380" y="350" fill="#00962f"/>
<rect x="1390" y="350" fill="#00962d"/>
<rect x="1400" y="350" fill="#00962c"/>
<rect x="1410" y="350" fill="#00962a"/>
<rect x="1420" y="350" fill="#009628"/>
<rect x="1430" y="350" fill="#009626"/>
<rect x="1440" y="350" fill="#009624"/>
<rect x="1450" y="350" fill="#009622"/>
<rect x="1460" y="350" fill="#009620"/>
<rect x="1470" y="350" fill="#06961e"/>
<rect x="1480" y="350" fill="#11961b"/>
<rect x="1490" y="350" fill="#1c9619"/>
<rect x="1500" y="350" fill="#289617"/>
<rect x="1510" y="350" fill="#349614"/>
<rect x="1520" y="350" fill="#419611"/>
<rect x="1530" y="350" fill="#4e960e"/>
<rect x="1540" y="350" fill="#5c960c"/>
<rect x="1550" y="350" fill="#6b9608"/>
<rect x="1560" y="350" fill="#7a9605"/>
<rect x="1570" y="350" fill="#8a9602"/>
<rect x="1580" y="350" fill="#969300"/>
<rect x="1590" y="350" fill="#968400"/>
<rect x="1600" y="350" fill="#967700"/>
<rect x="1610" y="350" fill="#966c00"/>
<rect x="1620" y="350" fill="#966200"/>
<rect x="1630" y="350" fill="#965a00"/>
<rect x="1640" y="350" fill="#965300"/>
<rect x="1650" y="350" fill="#964c00"/>
<rect x="1660" y="350" fill="#954500"/>
<rect x="1250" y="360" fill="#009646"/>
<rect x="1260" y="360" fill="#009645"/>
<rect x="1270" y="360" fill="#009644"/>
<rect x="1280" y="360" fill="#009643"/>
<rect x="1290" y="360" fill="#009642"/>
<rect x="1300" y="360" fill="#009640"/>
<rect x="1310" y="360" fill="#00963f"/>
<rect x="1320" y="360" fill="#00963e"/>
<rect x="1330" y="360" fill="#00963c"/>
<rect x="1340" y="360" fill="#00963b"/>
<rect x="1350" y="360" fill="#009639"/>
<rect x="1360" y="360" fill="#009638"/>
<rect x="1370" y="360" fill="#009636"/>
<rect x="1380" y="360" fill="#009635"/>
<rect x="1390" y="360" fill="#009633"/>
<rect x="1400" y="360" fill="#009632"/>
<rect x="1410" y="360" fill="#009630"/>
<rect x="1420" y="360" fill="#00962e"/>
<rect x="1430" y="360" fill="#00962c"/>
<rect x="1440" y="360" fill="#00962a"/>
<rect x="1450" y="360" fill="#009628"/>
<rect x="1460" y="360" fill="#009626"/>
<rect x="1470" y="360" fill="#0a9624"/>
<rect x="1480" y="360" fill="#169621"/>
<rect x="1490" y="360" fill="#22961f"/>
<rect x="1500" y="360" fill="#2e961d"/>
<rect x="1510" y="360" fill="#3b961a"/>
<rect x="1520" y="360" fill="#499617"/>
<rect x="1530" y="360" fill="#579614"/>
<rect x="1540" y="360" fill="#659611"/>
<rect x="1550" y="360" fill="#75960e"/>
<rect x="1560" y="360" fill="#85960b"/>
<rect x="1570" y="360" fill="#969608"/>
<rect x="1580" y="360" fill="#968704"/>
<rect x="1590" y="360" fill="#967900"/>
<rect x="1600" y="360" fill="#966d00"/>
<rect x="1610" y="360" fill="#966300"/>
<rect x="1620" y="360" fill="#965b00"/>
<rect x="1630" y="360" fill="#965300"/>
<rect x="1640" y="360" fill="#964c00"/>
<rect x="1650" y="360" fill="#964600"/>
<rect x="1660" y="360" fill="#953f00"/>
<rect x="1670" y="360" fill="#913900"/>
<rect x="1250" y="370" fill="#00964c"/>
<rect x="1260" y="370" fill="#00964b"/>
<rect x="1270" y="370" fill="#00964a"/>
<rect x="1280" y="370" fill="#009648"/>
<rect x="1290" y="370" fill="#009647"/>
<rect x="1300" y="370" fill="#009646"/>
<rect x="1310" y="370" fill="#009645"/>
<rect x="1320" y="370" fill="#009644"/>
<rect x="1330" y="370" fill="#009642"/>
<rect x="1340" y="370" fill="#009641"/>
<rect x="1350" y="370" fill="#00963f"/>
<rect x="1360" y="370" fill="#00963e"/>
<rect x="1370" y="370" fill="#00963d"/>
<rect x="1380" y="370" fill="#00963b"/>
<rect x="1390" y="370" fill="#009639"/>
<rect x="1400" y="370" fill="#009638"/>
<rect x="1410" y="370" fill="#009636"/>
<rect x="1420" y="370" fill="#009634"/>
<rect x="1430" y="370" fill="#009632"/>
<rect x="1440" y="370" fill="#009630"/>
<rect x="1450" y="370" fill="#00962e"/>
<rect x="1460" y="370" fill="#03962c"/>
<rect x="1470" y="370" fill="#0f962a"/>
<rect x="1480" y="370" fill="#1b9628"/>
<rect x="1490" y="370" fill="#279626"/>
<rect x="1500" y="370" fill="#359623"/>
<rect x="1510" y="370" fill="#429621"/>
<rect x="1520" y="370" fill="#51961e"/>
<rect x="1530" y="370" fill="#60961b"/>
<rect x="1540" y="370" fill="#709618"/>
<rect x="1550" y="370" fill="#809615"/>
<rect x="1560" y="370" fill="#929612"/>
<rect x="1570" y="370" fill="#968a0d"/>
<rect x="1580" y="370" fill="#967b09"/>
<rect x="1590" y="370" fill="#966f05"/>
<rect x="1600" y="370" fill="#966402"/>
<rect x="1610" y="370" fill="#965b00"/>
<rect x="1620" y="370" fill="#965300"/>
<rect x="1630" y="370" fill="#964c00"/>
<rect x="1640" y="370" fill="#964600"/>
<rect x="1650" y="370" fill="#964000"/>
<rect x="1660" y="370" fill="#953a00"/>
<rect x="1670" y="370" fill="#913400"/>
<rect x="1680" y="370" fill="#8d2f00"/>
<rect x="1250" y="380" fill="#009652"/>
<rect x="1260" y="380" fill="#009651"/>
<rect x="1270" y="380" fill="#009650"/>
<rect x="1280" y="380" fill="#00964e"/>
<rect x="1290" y="380" fill="#00964d"/>
<rect x="1300" y="380" fill="#00964c"/>
<rect x="1310" y="380" fill="#00964b"/>
<rect x="1320" y="380" fill="#00964a"/>
<rect x="1330" y="380" fill="#009649"/>
<rect x="1340" y="380" fill="#009647"/>
<rect x="1350" y="380" fill="#009646"/>
<rect x="1360" y="380" fill="#009645"/>
<rect x="1370" y="380" fill="#009643"/>
<rect x="1380" y="380" fill="#009642"/>
<rect x="1390" y="380" fill="#009640"/>
<rect x="1400" y="380" fill="#00963e"/>
<rect x="1410" y="380" fill="#00963d"/>
<rect x="1420" y="380" fill="#00963b"/>
<rect x="1430" y="380" fill="#009639"/>
<rect x="1440" y="380" fill="#009637"/>
<rect x="1450" y="380" fill="#009635"/>
<rect x="1460" y="380" fill="#079633"/>
<rect x="1470" y="380" fill="#149631"/>
<rect x="1480" y="380" fill="#20962f"/>
<rect x="1490" y="380" fill="#2e962d"/>
<rect x="1500" y="380" fill="#3c962a"/>
<rect x="1510" y="380" fill="#4a9628"/>
<rect x="1520" y="380" fill="#5a9625"/>
<rect x="1530" y="380" fill="#6a9622"/>
<rect x="1540" y="380" fill="#7b961f"/>
<rect x="1550" y="380" fill="#8d961c"/>
<rect x="1560" y="380" fill="#968e18"/>
<rect x="1570" y="380" fill="#967e12"/>
<rect x="1580" y="380" fill="#96710d"/>
<rect x="1590" y="380" fill="#96660a"/>
<rect x="1600" y="380" fill="#965c06"/>
<rect x="1610" y="380" fill="#965303"/>
<rect x="1620" y="380" fill="#964c01"/>
<rect x="1630" y="380" fill="#964500"/>
<rect x="1640" y="380" fill="#963f00"/>
<rect x="1650" y="380" fill="#963a00"/>
<rect x="1660" y="380" fill="#953500"/>
<rect x="1670" y="380" fill="#912f00"/>
<rect x="1680" y="380" fill="#8d2a00"/>
<rect x="1690" y="380" fill="#892600"/>
<rect x="1700" y="380" fill="#852200"/>
<rect x="1250" y="390" fill="#009658"/>
<rect x="1260" y="390" fill="#009657"/>
<rect x="1270" y="390" fill="#009656"/>
<rect x="1280" y="390" fill="#009655"/>
<rect x="1290" y="390" fill="#009654"/>
<rect x="1300" y="390" fill="#009653"/>
<rect x="1310" y="390" fill="#009652"/>
<rect x="1320" y="390" fill="#009651"/>
<rect x="1330" y="390" fill="#00964f"/>
<rect x="1340" y="390" fill="#00964e"/>
<rect x="1350" y="390" fill="#00964d"/>
<rect x="1360" y="390" fill="#00964c"/>
<rect x="1370" y="390" fill="#00964a"/>
<rect x="1380" y="390" fill="#009649"/>
<rect x="1390" y="390" fill="#009647"/>
<rect x="1400" y="390" fill="#009646"/>
<rect x="1410" y="390" fill="#009644"/>
<rect x="1420" y="390" fill="#009643"/>
<rect x="1430" y="390" fill="#009641"/>
<rect x="1440" y="390" fill="#00963f"/>
<rect x="1450" y="390" fill="#00963d"/>
<rect x="1460" y="390" fill="#0c963b"/>
<rect x="1470" y="390" fill="#199639"/>
<rect x="1480" y="390" fill="#279637"/>
<rect x="1490" y="390" fill="#359635"/>
<rect x="1500" y="390" fill="#449632"/>
<rect x="1510" y="390" fill="#539630"/>
<rect x="1520" y="390" fill="#64962d"/>
<rect x="1530" y="390" fill="#75962b"/>
<rect x="1540" y="390" fill="#889628"/>
<rect x="1550" y="390" fill="#969223"/>
<rect x="1560" y="390" fill="#96811d"/>
<rect x="1570" y="390" fill="#967317"/>
<rect x="1580" y="390" fill="#966712"/>
<rect x="1590" y="390" fill="#965d0e"/>
<rect x="1600" y="390" fill="#96540a"/>
<rect x="1610" y="390" fill="#964c07"/>
<rect x="1620" y="390" fill="#964504"/>
<rect x="1630" y="390" fill="#963f02"/>
<rect x="1640" y="390" fill="#963900"/>
<rect x="1650" y="390" fill="#963400"/>
<rect x="1660" y="390" fill="#952f00"/>
<rect x="1670" y="390" fill="#912a00"/>
<rect x="1680" y="390" fill="#8d2600"/>
<rect x="1690" y="390" fill="#892200"/>
<rect x="1700" y="390" fill="#851e00"/>
<rect x="1710" y="390" fill="#801a00"/>
<rect x="1250" y="400" fill="#00965f"/>
<rect x="1260" y="400" fill="#00965e"/>
<rect x="1270" y="400" fill="#00965d"/>
<rect x="1280" y="400" fill="#00965c"/>
<rect x="1290" y="400" fill="#00965b"/>
<rect x="1300" y="400" fill="#00965a"/>
<rect x="1310" y="400" fill="#009659"/>
<rect x="1320" y="400" fill="#009658"/>
<rect x="1330" y="400" fill="#009657"/>
<rect x="1340" y="400" fill="#009656"/>
<rect x="1350" y="400" fill="#009654"/>
<rect x="1360" y="400" fill="#009653"/>
<rect x="1370" y="400" fill="#009652"/>
<rect x="1380" y="400" fill="#009651"/>
<rect x="1390" y="400" fill="#00964f"/>
<rect x="1400" y="400" fill="#00964e"/>
<rect x="1410" y="400" fill="#00964c"/>
<rect x="1420" y="400" fill="#00964b"/>
<rect x="1430" y="400" fill="#009649"/>
<rect x="1440" y="400" fill="#009647"/>
<rect x="1450" y="400" fill="#049646"/>
<rect x="1460" y="400" fill="#119644"/>
<rect x="1470" y="400" fill="#1f9642"/>
<rect x="1480" y="400" fill="#2d9640"/>
<rect x="1490" y="400" fill="#3d963e"/>
<rect x="1500" y="400" fill="#4d963b"/>
<rect x="1510" y="400" fill="#5e9639"/>
<rect x="1520" y="400" fill="#6f9636"/>
<rect x="1530" y="400" fill="#829634"/>
<rect x="1540" y="400" fill="#969631"/>
<rect x="1550" y="400" fill="#968428"/>
<rect x="1560" y="400" fill="#967521"/>
<rect x="1570" y="400" fill="#96681b"/>
<rect x="1580" y="400" fill="#965d16"/>
<rect x="1590" y="400" fill="#965412"/>
<rect x="1600" y="400" fill="#964c0e"/>
<rect x="1610" y="400" fill="#96450b"/>
<rect x="1620" y="400" fill="#963e08"/>
<rect x="1630" y="400" fill="#963905"/>
<rect x="1640" y="400" fill="#963403"/>
<rect x="1650" y="400" fill="#962f01"/>
<rect x="1660" y="400" fill="#952a00"/>
<rect x="1670" y="400" fill="#912600"/>
<rect x="1680" y="400" fill="#8d2200"/>
<rect x="1690" y="400" fill="#891e00"/>
<rect x="1700" y="400" fill="#851a00"/>
<rect x="1710" y="400" fill="#801700"/>
<rect x="1720" y="400" fill="#7a1400"/>
<rect x="1250" y="410" fill="#009666"/>
<rect x="1260" y="410" fill="#009665"/>
<rect x="1270" y="410" fill="#009664"/>
<rect x="1280" y="410" fill="#009663"/>
<rect x="1290" y="410" fill="#009663"/>
<rect x="1300" y="410" fill="#009662"/>
<rect x="1310" y="410" fill="#009661"/>
<rect x="1320" y="410" fill="#009660"/>
<rect x="1330" y="410" fill="#00965f"/>
<rect x="1340" y="410" fill="#00965e"/>
<rect x="1350" y="410" fill="#00965d"/>
<rect x="1360" y="410" fill="#00965c"/>
<rect x="1370" y="410" fill="#00965a"/>
<rect x="1380" y="410" fill="#009659"/>
<rect x="1390" y="410" fill="#009658"/>
<rect x="1400" y="410" fill="#009657"/>
<rect x="1410" y="410" fill="#009655"/>
<rect x="1420" y="410" fill="#009654"/>
<rect x="1430" y="410" fill="#009652"/>
<rect x="1440" y="410" fill="#009651"/>
<rect x="1450" y="410" fill="#09964f"/>
<rect x="1460" y="410" fill="#17964d"/>
<rect x="1470" y="410" fill="#26964c"/>
<rect x="1480" y="410" fill="#35964a"/>
<rect x="1490" y="410" fill="#459648"/>
<rect x="1500" y="410" fill="#579645"/>
<rect x="1510" y="410" fill="#699643"/>
<rect x="1520" y="410" fill="#7c9641"/>
<rect x="1530" y="410" fill="#91963e"/>
<rect x="1540" y="410" fill="#968836"/>
<rect x="1550" y="410" fill="#96772d"/>
<rect x="1560" y="410" fill="#966a26"/>
<rect x="1570" y="410" fill="#965e20"/>
<rect x="1580" y="410" fill="#96541a"/>
<rect x="1590" y="410" fill="#964c16"/>
<rect x="1600" y="410" fill="#964412"/>
<rect x="1610" y="410" fill="#963e0e"/>
<rect x="1620" y="410" fill="#96380b"/>
<rect x="1630" y="410" fill="#963308"/>
<rect x="1640" y="410" fill="#962e06"/>
<rect x="1650" y="410" fill="#962a04"/>
<rect x="1660" y="410" fill="#952602"/>
<rect x="1670" y="410" fill="#912100"/>
<rect x="1680" y="410" fill="#8d1d00"/>
<rect x="1690" y="410" fill="#891a00"/>
<rect x="1700" y="410" fill="#851700"/>
<rect x="1710" y="410" fill="#801400"/>
<rect x="1720" y="410" fill="#7a1100"/>
<rect x="1730" y="410" fill="#740f00"/>
<rect x="1260" y="420" fill="#00966d"/>
<rect x="1270" y="420" fill="#00966c"/>
<rect x="1280" y="420" fill="#00966c"/>
<rect x="1290" y="420" fill="#00966b"/>
<rect x="1300" y="420" fill="#00966a"/>
<rect x="1310" y="420" fill="#009669"/>
<rect x="1320" y="420" fill="#009668"/>
<rect x="1330" y="420" fill="#009668"/>
<rect x="1340" y="420" fill="#009667"/>
<rect x="1350" y="420" fill="#009666"/>
<rect x="1360" y="420" fill="#009665"/>
<rect x="1370" y="420" fill="#009664"/>
<rect x="1380" y="420" fill="#009663"/>
<rect x="1390" y="420" fill="#009662"/>
<rect x="1400" y="420" fill="#009660"/>
<rect x="1410" y="420" fill="#00965f"/>
<rect x="1420" y="420" fill="#00965e"/>
<rect x="1430" y="420" fill="#00965c"/>
<rect x="1440" y="420" fill="#00965b"/>
<rect x="1450" y="420" fill="#0e965a"/>
<rect x="1460" y="420" fill="#1d9658"/>
<rect x="1470" y="420" fill="#2d9656"/>
<rect x="1480" y="420" fill="#3e9655"/>
<rect x="1490" y="420" fill="#4f9653"/>
<rect x="1500" y="420" fill="#629651"/>
<rect x="1510" y="420" fill="#76964f"/>
<rect x="1520" y="420" fill="#8b964d"/>
<rect x="1530" y="420" fill="#968c45"/>
<rect x="1540" y="420" fill="#967a3a"/>
<rect x="1550" y="420" fill="#966b31"/>
<rect x="1560" y="420" fill="#965f2a"/>
<rect x="1570" y="420" fill="#965524"/>
<rect x="1580" y="420" fill="#964c1e"/>
<rect x="1590" y="420" fill="#964419"/>
<rect x="1600" y="420" fill="#963d15"/>
<rect x="1610" y="420" fill="#963712"/>
<rect x="1620" y="420" fill="#96320e"/>
<rect x="1630" y="420" fill="#962d0c"/>
<rect x="1640" y="420" fill="#962909"/>
<rect x="1650" y="420" fill="#962507"/>
<rect x="1660" y="420" fill="#952104"/>
<rect x="1670" y="420" fill="#911d02"/>
<rect x="1680" y="420" fill="#8d1901"/>
<rect x="1690" y="420" fill="#891600"/>
<rect x="1700" y="420" fill="#851300"/>
<rect x="1710" y="420" fill="#801100"/>
<rect x="1720" y="420" fill="#7a0e00"/>
<rect x="1730" y="420" fill="#740c00"/>
<rect x="1740" y="420" fill="#6e0a00"/>
<rect x="1750" y="420" fill="#690800"/>
<rect x="1260" y="430" fill="#009676"/>
<rect x="1270" y="430" fill="#009675"/>
<rect x="1280" y="430" fill="#009674"/>
<rect x="1290" y="430" fill="#009674"/>
<rect x="1300" y="430" fill="#009673"/>
<rect x="1310" y="430" fill="#009673"/>
<rect x="1320" y="430" fill="#009672"/>
<rect x="1330" y="430" fill="#009671"/>
<rect x="1340" y="430" fill="#009670"/>
<rect x="1350" y="430" fill="#009670"/>
<rect x="1360" y="430" fill="#00966f"/>
<rect x="1370" y="430" fill="#00966e"/>
<rect x="1380" y="430" fill="#00966d"/>
<rect x="1390" y="430" fill="#00966c"/>
<rect x="1400" y="430" fill="#00966b"/>
<rect x="1410" y="430" fill="#00966a"/>
<rect x="1420" y="430" fill="#009669"/>
<rect x="1430" y="430" fill="#009668"/>
<rect x="1440" y="430" fill="#059667"/>
<rect x="1450" y="430" fill="#149665"/>
<rect x="1460" y="430" fill="#249664"/>
<rect x="1470" y="430" fill="#359663"/>
<rect x="1480" y="430" fill="#479661"/>
<rect x="1490" y="430" fill="#5b9660"/>
<rect x="1500" y="430" fill="#6f965e"/>
<rect x="1510" y="430" fill="#85965c"/>
<rect x="1520" y="430" fill="#969157"/>
<rect x="1530" y="430" fill="#967d49"/>
<rect x="1540" y="430" fill="#966d3e"/>
<rect x="1550" y="430" fill="#966035"/>
<rect x="1560" y="430" fill="#96552e"/>
<rect x="1570" y="430" fill="#964c27"/>
<rect x="1580" y="430" fill="#964322"/>
<rect x="1590" y="430" fill="#963c1d"/>
<rect x="1600" y="430" fill="#963619"/>
<rect x="1610" y="430" fill="#963115"/>
<rect x="1620" y="430" fill="#962c12"/>
<rect x="1630" y="430" fill="#96270f"/>
<rect x="1640" y="430" fill="#96240c"/>
<rect x="1650" y="430" fill="#962009"/>
<rect x="1660" y="430" fill="#951c07"/>
<rect x="1670" y="430" fill="#911905"/>
<rect x="1680" y="430" fill="#8d1603"/>
<rect x="1690" y="430" fill="#891301"/>
<rect x="1700" y="430" fill="#851000"/>
<rect x="1710" y="430" fill="#800e00"/>
<rect x="1720" y="430" fill="#7a0b00"/>
<rect x="1730" y="430" fill="#740900"/>
<rect x="1740" y="430" fill="#6e0800"/>
<rect x="1750" y="430" fill="#690600"/>
<rect x="1760" y="430" fill="#670500"/>
<rect x="1260" y="440" fill="#00967f"/>
<rect x="1270" y="440" fill="#00967e"/>
<rect x="1280" y="440" fill="#00967e"/>
<rect x="1290" y="440" fill="#00967e"/>
<rect x="1300" y="440" fill="#00967d"/>
<rect x="1310" y="440" fill="#00967d"/>
<rect x="1320" y="440" fill="#00967c"/>
<rect x="1330" y="440" fill="#00967c"/>
<rect x="1340" y="440" fill="#00967b"/>
<rect x="1350" y="440" fill="#00967a"/>
<rect x="1360" y="440" fill="#00967a"/>
<rect x="1370" y="440" fill="#009679"/>
<rect x="1380" y="440" fill="#009678"/>
<rect x="1390" y="440" fill="#009678"/>
<rect x="1400" y="440" fill="#009677"/>
<rect x="1410" y="440" fill="#009676"/>
<rect x="1420" y="440" fill="#009675"/>
<rect x="1430" y="440" fill="#009675"/>
<rect x="1440" y="440" fill="#0b9674"/>
<rect x="1450" y="440" fill="#1b9673"/>
<rect x="1460" y="440" fill="#2d9672"/>
<rect x="1470" y="440" fill="#3f9671"/>
<rect x="1480" y="440" fill="#53966f"/>
<rect x="1490" y="440" fill="#68966e"/>
<rect x="1500" y="440" fill="#7e966d"/>
<rect x="1510" y="440" fill="#96966b"/>
<rect x="1520" y="440" fill="#96815b"/>
<rect x="1530" y="440" fill="#966f4d"/>
<rect x="1540" y="440" fill="#966142"/>
<rect x="1550" y="440" fill="#965539"/>
<rect x="1560" y="440" fill="#964b31"/>
<rect x="1570" y="440" fill="#96432b"/>
<rect x="1580" y="440" fill="#963c25"/>
<rect x="1590" y="440" fill="#963520"/>
<rect x="1600" y="440" fill="#96301c"/>
<rect x="1610" y="440" fill="#962b18"/>
<rect x="1620" y="440" fill="#962615"/>
<rect x="1630" y="440" fill="#962212"/>
<rect x="1640" y="440" fill="#961f0f"/>
<rect x="1650" y="440" fill="#961b0c"/>
<rect x="1660" y="440" fill="#95180a"/>
<rect x="1670" y="440" fill="#911507"/>
<rect x="1680" y="440" fill="#8d1205"/>
<rect x="1690" y="440" fill="#890f04"/>
<rect x="1700" y="440" fill="#850d02"/>
<rect x="1710" y="440" fill="#800b01"/>
<rect x="1720" y="440" fill="#7a0900"/>
<rect x="1730" y="440" fill="#740700"/>
<rect x="1740" y="440" fill="#6e0500"/>
<rect x="1750" y="440" fill="#690400"/>
<rect x="1760" y="440" fill="#670300"/>
<rect x="1770" y="440" fill="#650200"/>
<rect x="1260" y="450" fill="#009689"/>
<rect x="1270" y="450" fill="#009689"/>
<rect x="1280" y="450" fill="#009688"/>
<rect x="1290" y="450" fill="#009688"/>
<rect x="1300" y="450" fill="#009688"/>
<rect x="1310" y="450" fill="#009688"/>
<rect x="1320" y="450" fill="#009687"/>
<rect x="1330" y="450" fill="#009687"/>
<rect x="1340" y="450" fill="#009687"/>
<rect x="1350" y="450" fill="#009686"/>
<rect x="1360" y="450" fill="#009686"/>
<rect x="1370" y="450" fill="#009686"/>
<rect x="1380" y="450" fill="#009685"/>
<rect x="1390" y="450" fill="#009685"/>
<rect x="1400" y="450" fill="#009684"/>
<rect x="1410" y="450" fill="#009684"/>
<rect x="1420" y="450" fill="#009683"/>
<rect x="1430" y="450" fill="#009683"/>
<rect x="1440" y="450" fill="#119682"/>
<rect x="1450" y="450" fill="#239682"/>
<rect x="1460" y="450" fill="#369681"/>
<rect x="1470" y="450" fill="#4a9681"/>
<rect x="1480" y="450" fill="#609680"/>
<rect x="1490" y="450" fill="#77967f"/>
<rect x="1500" y="450" fill="#8f967e"/>
<rect x="1510" y="450" fill="#96856f"/>
<rect x="1520" y="450" fill="#96725e"/>
<rect x="1530" y="450" fill="#966351"/>
<rect x="1540" y="450" fill="#965646"/>
<rect x="1550" y="450" fill="#964b3d"/>
<rect x="1560" y="450" fill="#964235"/>
<rect x="1570" y="450" fill="#963b2e"/>
<rect x="1580" y="450" fill="#963429"/>
<rect x="1590" y="450" fill="#962e24"/>
<rect x="1600" y="450" fill="#96291f"/>
<rect x="1610" y="450" fill="#96251b"/>
<rect x="1620" y="450" fill="#962118"/>
<rect x="1630" y="450" fill="#961d14"/>
<rect x="1640" y="450" fill="#961a11"/>
<rect x="1650" y="450" fill="#96170f"/>
<rect x="1660" y="450" fill="#95140c"/>
<rect x="1670" y="450" fill="#91110a"/>
<rect x="1680" y="450" fill="#8d0e08"/>
<rect x="1690" y="450" fill="#890c06"/>
<rect x="1700" y="450" fill="#850a04"/>
<rect x="1710" y="450" fill="#800803"/>
<rect x="1720" y="450" fill="#7a0601"/>
<rect x="1730" y="450" fill="#740400"/>
<rect x="1740" y="450" fill="#6e0300"/>
<rect x="1750" y="450" fill="#690200"/>
<rect x="1760" y="450" fill="#670100"/>
<rect x="1770" y="450" fill="#650000"/>
<rect x="1780" y="450" fill="#630000"/>
<rect x="1270" y="460" fill="#009694"/>
<rect x="1280" y="460" fill="#009694"/>
<rect x="1290" y="460" fill="#009694"/>
<rect x="1300" y="460" fill="#009694"/>
<rect x="1310" y="460" fill="#009694"/>
<rect x="1320" y="460" fill="#009694"/>
<rect x="1330" y="460" fill="#009694"/>
<rect x="1340" y="460" fill="#009694"/>
<rect x="1350" y="460" fill="#009694"/>
<rect x="1360" y="460" fill="#009694"/>
<rect x="1370" y="460" fill="#009694"/>
<rect x="1380" y="460" fill="#009694"/>
<rect x="1390" y="460" fill="#009694"/>
<rect x="1400" y="460" fill="#009694"/>
<rect x="1410" y="460" fill="#009694"/>
<rect x="1420" y="460" fill="#009693"/>
<rect x="1430" y="460" fill="#069693"/>
<rect x="1440" y="460" fill="#199693"/>
<rect x="1450" y="460" fill="#2c9693"/>
<rect x="1460" y="460" fill="#419693"/>
<rect x="1470" y="460" fill="#579693"/>
<rect x="1480" y="460" fill="#6f9693"/>
<rect x="1490" y="460" fill="#889693"/>
<rect x="1500" y="460" fill="#968a87"/>
<rect x="1510" y="460" fill="#967572"/>
<rect x="1520" y="460" fill="#966462"/>
<rect x="1530" y="460" fill="#965654"/>
<rect x="1540" y="460" fill="#964b49"/>
<rect x="1550" y="460" fill="#964240"/>
<rect x="1560" y="460" fill="#963a38"/>
<rect x="1570" y="460" fill="#963332"/>
<rect x="1580" y="460" fill="#962d2c"/>
<rect x="1590" y="460" fill="#962827"/>
<rect x="1600" y="460" fill="#962322"/>
<rect x="1610" y="460" fill="#961f1e"/>
<rect x="1620" y="460" fill="#961b1a"/>
<rect x="1630" y="460" fill="#961817"/>
<rect x="1640" y="460" fill="#961514"/>
<rect x="1650" y="460" fill="#961211"/>
<rect x="1660" y="460" fill="#95100f"/>
<rect x="1670" y="460" fill="#910d0c"/>
<rect x="1680" y="460" fill="#8d0b0a"/>
<rect x="1690" y="460" fill="#890808"/>
<rect x="1700" y="460" fill="#850706"/>
<rect x="1710" y="460" fill="#800504"/>
<rect x="1720" y="460" fill="#7a0303"/>
<rect x="1730" y="460" fill="#740202"/>
<rect x="1740" y="460" fill="#6e0101"/>
<rect x="1750" y="460" fill="#690000"/>
<rect x="1760" y="460" fill="#670000"/>
<rect x="1770" y="460" fill="#650000"/>
<rect x="1780" y="460" fill="#630000"/>
<rect x="1790" y="460" fill="#610000"/>
<rect x="1800" y="460" fill="#5f0000"/>
<rect x="1270" y="470" fill="#008d96"/>
<rect x="1280" y="470" fill="#008d96"/>
<rect x="1290" y="470" fill="#008d96"/>
<rect x="1300" y="470" fill="#008d96"/>
<rect x="1310" y="470" fill="#008c96"/>
<rect x="1320" y="470" fill="#008c96"/>
<rect x="1330" y="470" fill="#008c96"/>
<rect x="1340" y="470" fill="#008b96"/>
<rect x="1350" y="470" fill="#008b96"/>
<rect x="1360" y="470" fill="#008b96"/>
<rect x="1370" y="470" fill="#008a96"/>
<rect x="1380" y="470" fill="#008a96"/>
<rect x="1390" y="470" fill="#008a96"/>
<rect x="1400" y="470" fill="#008996"/>
<rect x="1410" y="470" fill="#008996"/>
<rect x="1420" y="470" fill="#008996"/>
<rect x="1430" y="470" fill="#0c8896"/>
<rect x="1440" y="470" fill="#1e8896"/>
<rect x="1450" y="470" fill="#318796"/>
<rect x="1460" y="470" fill="#458796"/>
<rect x="1470" y="470" fill="#5b8696"/>
<rect x="1480" y="470" fill="#728596"/>
<rect x="1490" y="470" fill="#8a8596"/>
<rect x="1500" y="470" fill="#967889"/>
<rect x="1510" y="470" fill="#966675"/>
<rect x="1520" y="470" fill="#965765"/>
<rect x="1530" y="470" fill="#964b57"/>
<rect x="1540" y="470" fill="#96414d"/>
<rect x="1550" y="470" fill="#963943"/>
<rect x="1560" y="470" fill="#96323b"/>
<rect x="1570" y="470" fill="#962c35"/>
<rect x="1580" y="470" fill="#96262f"/>
<rect x="1590" y="470" fill="#96222a"/>
<rect x="1600" y="470" fill="#961d25"/>
<rect x="1610" y="470" fill="#961a21"/>
<rect x="1620" y="470" fill="#96161d"/>
<rect x="1630" y="470" fill="#96131a"/>
<rect x="1640" y="470" fill="#961017"/>
<rect x="1650" y="470" fill="#960e14"/>
<rect x="1660" y="470" fill="#950c11"/>
<rect x="1670" y="470" fill="#91090e"/>
<rect x="1680" y="470" fill="#8d070c"/>
<rect x="1690" y="470" fill="#89050a"/>
<rect x="1700" y="470" fill="#850408"/>
<rect x="1710" y="470" fill="#800206"/>
<rect x="1720" y="470" fill="#7a0105"/>
<rect x="1730" y="470" fill="#740003"/>
<rect x="1740" y="470" fill="#6e0002"/>
<rect x="1750" y="470" fill="#690001"/>
<rect x="1760" y="470" fill="#670000"/>
<rect x="1770" y="470" fill="#650000"/>
<rect x="1780" y="470" fill="#630000"/>
<rect x="1790" y="470" fill="#610000"/>
<rect x="1800" y="470" fill="#5f0000"/>
<rect x="1810" y="470" fill="#5d0000"/>
<rect x="1270" y="480" fill="#008296"/>
<rect x="1280" y="480" fill="#008296"/>
<rect x="1290" y="480" fill="#008196"/>
<rect x="1300" y="480" fill="#008196"/>
<rect x="1310" y="480" fill="#008096"/>
<rect x="1320" y="480" fill="#008096"/>
<rect x="1330" y="480" fill="#007f96"/>
<rect x="1340" y="480" fill="#007f96"/>
<rect x="1350" y="480" fill="#007e96"/>
<rect x="1360" y="480" fill="#007d96"/>
<rect x="1370" y="480" fill="#007d96"/>
<rect x="1380" y="480" fill="#007c96"/>
<rect x="1390" y="480" fill="#007b96"/>
<rect x="1400" y="480" fill="#007b96"/>
<rect x="1410" y="480" fill="#007a96"/>
<rect x="1420" y="480" fill="#017996"/>
<rect x="1430" y="480" fill="#117896"/>
<rect x="1440" y="480" fill="#227796"/>
<rect x="1450" y="480" fill="#347696"/>
<rect x="1460" y="480" fill="#487596"/>
<rect x="1470" y="480" fill="#5c7496"/>
<rect x="1480" y="480" fill="#727396"/>
<rect x="1490" y="480" fill="#8a7296"/>
<rect x="1500" y="480" fill="#96688b"/>
<rect x="1510" y="480" fill="#965877"/>
<rect x="1520" y="480" fill="#964b67"/>
<rect x="1530" y="480" fill="#96415a"/>
<rect x="1540" y="480" fill="#963850"/>
<rect x="1550" y="480" fill="#963046"/>
<rect x="1560" y="480" fill="#962a3e"/>
<rect x="1570" y="480" fill="#962538"/>
<rect x="1580" y="480" fill="#962032"/>
<rect x="1590" y="480" fill="#961c2c"/>
<rect x="1600" y="480" fill="#961828"/>
<rect x="1610" y="480" fill="#961424"/>
<rect x="1620" y="480" fill="#961120"/>
<rect x="1630" y="480" fill="#960f1c"/>
<rect x="1640" y="480" fill="#960c19"/>
<rect x="1650" y="480" fill="#960a16"/>
<rect x="1660" y="480" fill="#950814"/>
<rect x="1670" y="480" fill="#910611"/>
<rect x="1680" y="480" fill="#8d040e"/>
<rect x="1690" y="480" fill="#89020c"/>
<rect x="1700" y="480" fill="#85010a"/>
<rect x="1710" y="480" fill="#800008"/>
<rect x="1720" y="480" fill="#7a0006"/>
<rect x="1730" y="480" fill="#740005"/>
<rect x="1740" y="480" fill="#6e0003"/>
<rect x="1750" y="480" fill="#690002"/>
<rect x="1760" y="480" fill="#670001"/>
<rect x="1770" y="480" fill="#650001"/>
<rect x="1780" y="480" fill="#630000"/>
<rect x="1790" y="480" fill="#610000"/>
<rect x="1800" y="480" fill="#5f0000"/>
<rect x="1810" y="480" fill="#5d0000"/>
<rect x="1820" y="480" fill="#5b0000"/>
<rect x="1270" y="490" fill="#007896"/>
<rect x="1280" y="490" fill="#007796"/>
<rect x="1290" y="490" fill="#007696"/>
<rect x="1300" y="490" fill="#007696"/>
<rect x="1310" y="490" fill="#007596"/>
<rect x="1320" y="490" fill="#007496"/>
<rect x="1330" y="490" fill="#007496"/>
<rect x="1340" y="490" fill="#007396"/>
<rect x="1350" y="490" fill="#007296"/>
<rect x="1360" y="490" fill="#007196"/>
<rect x="1370" y="490" fill="#007096"/>
<rect x="1380" y="490" fill="#006f96"/>
<rect x="1390" y="490" fill="#006e96"/>
<rect x="1400" y="490" fill="#006d96"/>
<rect x="1410" y="490" fill="#006c96"/>
<rect x="1420" y="490" fill="#066b96"/>
<rect x="1430" y="490" fill="#166a96"/>
<rect x="1440" y="490" fill="#266896"/>
<rect x="1450" y="490" fill="#386796"/>
<rect x="1460" y="490" fill="#4a6696"/>
<rect x="1470" y="490" fill="#5e6496"/>
<rect x="1480" y="490" fill="#736296"/>
<rect x="1490" y="490" fill="#896196"/>
<rect x="1500" y="490" fill="#96598d"/>
<rect x="1510" y="490" fill="#964b7a"/>
<rect x="1520" y="490" fill="#96406a"/>
<rect x="1530" y="490" fill="#96375d"/>
<rect x="1540" y="490" fill="#962f52"/>
<rect x="1550" y="490" fill="#962849"/>
<rect x="1560" y="490" fill="#962341"/>
<rect x="1570" y="490" fill="#961e3a"/>
<rect x="1580" y="490" fill="#961a34"/>
<rect x="1590" y="490" fill="#96162f"/>
<rect x="1600" y="490" fill="#96122a"/>
<rect x="1610" y="490" fill="#960f26"/>
<rect x="1620" y="490" fill="#960d22"/>
<rect x="1630" y="490" fill="#960a1f"/>
<rect x="1640" y="490" fill="#96081c"/>
<rect x="1650" y="490" fill="#960619"/>
<rect x="1660" y="490" fill="#950416"/>
<rect x="1670" y="490" fill="#910213"/>
<rect x="1680" y="490" fill="#8d0010"/>
<rect x="1690" y="490" fill="#89000e"/>
<rect x="1700" y="490" fill="#85000c"/>
<rect x="1710" y="490" fill="#80000a"/>
<rect x="1720" y="490" fill="#7a0008"/>
<rect x="1730" y="490" fill="#740006"/>
<rect x="1740" y="490" fill="#6e0005"/>
<rect x="1750" y="490" fill="#690004"/>
<rect x="1760" y="490" fill="#670003"/>
<rect x="1770" y="490" fill="#650002"/>
<rect x="1780" y="490" fill="#630001"/>
<rect x="1790" y="490" fill="#610000"/>
<rect x="1800" y="490" fill="#5f0000"/>
<rect x="1810" y="490" fill="#5d0000"/>
<rect x="1820" y="490" fill="#5b0000"/>
<rect x="1830" y="490" fill="#5a0000"/>
<rect x="1280" y="500" fill="#006d96"/>
<rect x="1290" y="500" fill="#006c96"/>
<rect x="1300" y="500" fill="#006c96"/>
<rect x="1310" y="500" fill="#006b96"/>
<rect x="1320" y="500" fill="#006a96"/>
<rect x="1330" y="500" fill="#006996"/>
<rect x="1340" y="500" fill="#006896"/>
<rect x="1350" y="500" fill="#006796"/>
<rect x="1360" y="500" fill="#006696"/>
<rect x="1370" y="500" fill="#006496"/>
<rect x="1380" y="500" fill="#006396"/>
<rect x="1390" y="500" fill="#006296"/>
<rect x="1400" y="500" fill="#006196"/>
<rect x="1410" y="500" fill="#005f96"/>
<rect x="1420" y="500" fill="#0b5e96"/>
<rect x="1430" y="500" fill="#1a5c96"/>
<rect x="1440" y="500" fill="#2a5b96"/>
<rect x="1450" y="500" fill="#3b5996"/>
<rect x="1460" y="500" fill="#4c5796"/>
<rect x="1470" y="500" fill="#5f5596"/>
<rect x="1480" y="500" fill="#735396"/>
<rect x="1490" y="500" fill="#885196"/>
<rect x="1500" y="500" fill="#964b8e"/>
<rect x="1510" y="500" fill="#963f7c"/>
<rect x="1520" y="500" fill="#96356c"/>
<rect x="1530" y="500" fill="#962d60"/>
<rect x="1540" y="500" fill="#962655"/>
<rect x="1550" y="500" fill="#96214c"/>
<rect x="1560" y="500" fill="#961c44"/>
<rect x="1570" y="500" fill="#96173d"/>
<rect x="1580" y="500" fill="#961437"/>
<rect x="1590" y="500" fill="#961032"/>
<rect x="1600" y="500" fill="#960d2d"/>
<rect x="1610" y="500" fill="#960a29"/>
<rect x="1620" y="500" fill="#960825"/>
<rect x="1630" y="500" fill="#960621"/>
<rect x="1640" y="500" fill="#96041e"/>
<rect x="1650" y="500" fill="#96021b"/>
<rect x="1660" y="500" fill="#950018"/>
<rect x="1670" y="500" fill="#910015"/>
<rect x="1680" y="500" fill="#8d0012"/>
<rect x="1690" y="500" fill="#890010"/>
<rect x="1700" y="500" fill="#85000e"/>
<rect x="1710" y="500" fill="#80000b"/>
<rect x="1720" y="500" fill="#7a0009"/>
<rect x="1730" y="500" fill="#740008"/>
<rect x="1740" y="500" fill="#6e0006"/>
<rect x="1750" y="500" fill="#690005"/>
<rect x="1760" y="500" fill="#670004"/>
<rect x="1770" y="500" fill="#650003"/>
<rect x="1780" y="500" fill="#630002"/>
<rect x="1790" y="500" fill="#610001"/>
<rect x="1800" y="500" fill="#5f0001"/>
<rect x="1810" y="500" fill="#5d0000"/>
<rect x="1820" y="500" fill="#5b0000"/>
<rect x="1830" y="500" fill="#5a0000"/>
<rect x="1280" y="510" fill="#006496"/>
<rect x="1290" y="510" fill="#006396"/>
<rect x="1300" y="510" fill="#006296"/>
<rect x="1310" y="510" fill="#006196"/>
<rect x="1320" y="510" fill="#006096"/>
<rect x="1330" y="510" fill="#005f96"/>
<rect x="1340" y="510" fill="#005d96"/>
<rect x="1350" y="510" fill="#005c96"/>
<rect x="1360" y="510" fill="#005b96"/>
<rect x="1370" y="510" fill="#005a96"/>
<rect x="1380" y="510" fill="#005896"/>
<rect x="1390" y="510" fill="#005796"/>
<rect x="1400" y="510" fill="#005596"/>
<rect x="1410" y="510" fill="#015496"/>
<rect x="1420" y="510" fill="#0f5296"/>
<rect x="1430" y="510" fill="#1e5096"/>
<rect x="1440" y="510" fill="#2d4e96"/>
<rect x="1450" y="510" fill="#3d4c96"/>
<rect x="1460" y="510" fill="#4e4a96"/>
<rect x="1470" y="510" fill="#604896"/>
<rect x="1480" y="510" fill="#734696"/>
<rect x="1490" y="510" fill="#884396"/>
<rect x="1500" y="510" fill="#963e90"/>
<rect x="1510" y="510" fill="#96347e"/>
<rect x="1520" y="510" fill="#962b6f"/>
<rect x="1530" y="510" fill="#962462"/>
<rect x="1540" y="510" fill="#961e58"/>
<rect x="1550" y="510" fill="#96194f"/>
<rect x="1560" y="510" fill="#961547"/>
<rect x="1570" y="510" fill="#961140"/>
<rect x="1580" y="510" fill="#960e3a"/>
<rect x="1590" y="510" fill="#960b34"/>
<rect x="1600" y="510" fill="#96082f"/>
<rect x="1610" y="510" fill="#96062b"/>
<rect x="1620" y="510" fill="#960327"/>
<rect x="1630" y="510" fill="#960124"/>
<rect x="1640" y="510" fill="#960020"/>
<rect x="1650" y="510" fill="#96001d"/>
<rect x="1660" y="510" fill="#95001a"/>
<rect x="1670" y="510" fill="#910017"/>
<rect x="1680" y="510" fill="#8d0014"/>
<rect x="1690" y="510" fill="#890012"/>
<rect x="1700" y="510" fill="#85000f"/>
<rect x="1710" y="510" fill="#80000d"/>
<rect x="1720" y="510" fill="#7a000b"/>
<rect x="1730" y="510" fill="#740009"/>
<rect x="1740" y="510" fill="#6e0008"/>
<rect x="1750" y="510" fill="#690006"/>
<rect x="1760" y="510" fill="#670005"/>
<rect x="1770" y="510" fill="#650004"/>
<rect x="1780" y="510" fill="#630003"/>
<rect x="1790" y="510" fill="#610002"/>
<rect x="1800" y="510" fill="#5f0002"/>
<rect x="1810" y="510" fill="#5d0001"/>
<rect x="1820" y="510" fill="#5b0000"/>
<rect x="1830" y="510" fill="#5a0000"/>
<rect x="1280" y="520" fill="#005b96"/>
<rect x="1290" y="520" fill="#005a96"/>
<rect x="1300" y="520" fill="#005996"/>
<rect x="1310" y="520" fill="#005796"/>
<rect x="1320" y="520" fill="#005696"/>
<rect x="1330" y="520" fill="#005596"/>
<rect x="1340" y="520" fill="#005496"/>
<rect x="1350" y="520" fill="#005296"/>
<rect x="1360" y="520" fill="#005196"/>
<rect x="1370" y="520" fill="#004f96"/>
<rect x="1380" y="520" fill="#004e96"/>
<rect x="1390" y="520" fill="#004c96"/>
<rect x="1400" y="520" fill="#004a96"/>
<rect x="1410" y="520" fill="#064996"/>
<rect x="1420" y="520" fill="#134796"/>
<rect x="1430" y="520" fill="#214596"/>
<rect x="1440" y="520" fill="#304396"/>
<rect x="1450" y="520" fill="#404096"/>
<rect x="1460" y="520" fill="#503e96"/>
<rect x="1470" y="520" fill="#623c96"/>
<rect x="1480" y="520" fill="#743996"/>
<rect x="1490" y="520" fill="#873696"/>
<rect x="1500" y="520" fill="#963291"/>
<rect x="1510" y="520" fill="#962980"/>
<rect x="1520" y="520" fill="#962271"/>
<rect x="1530" y="520" fill="#961c65"/>
<rect x="1540" y="520" fill="#96175a"/>
<rect x="1550" y="520" fill="#961251"/>
<rect x="1560" y="520" fill="#960f49"/>
<rect x="1570" y="520" fill="#960b42"/>
<rect x="1580" y="520" fill="#96083c"/>
<rect x="1590" y="520" fill="#960637"/>
<rect x="1600" y="520" fill="#960332"/>
<rect x="1610" y="520" fill="#96012d"/>
<rect x="1620" y="520" fill="#960029"/>
<rect x="1630" y="520" fill="#960026"/>
<rect x="1640" y="520" fill="#960022"/>
<rect x="1650" y="520" fill="#96001f"/>
<rect x="1660" y="520" fill="#95001c"/>
<rect x="1670" y="520" fill="#910019"/>
<rect x="1680" y="520" fill="#8d0016"/>
<rect x="1690" y="520" fill="#890013"/>
<rect x="1700" y="520" fill="#850011"/>
<rect x="1710" y="520" fill="#80000f"/>
<rect x="1720" y="520" fill="#7a000c"/>
<rect x="1730" y="520" fill="#74000b"/>
<rect x="1740" y="520" fill="#6e0009"/>
<rect x="1750" y="520" fill="#690007"/>
<rect x="1760" y="520" fill="#670006"/>
<rect x="1770" y="520" fill="#650005"/>
<rect x="1780" y="520" fill="#630004"/>
<rect x="1790" y="520" fill="#610003"/>
<rect x="1800" y="520" fill="#5f0003"/>
<rect x="1810" y="520" fill="#5d0002"/>
<rect x="1820" y="520" fill="#5b0001"/>
<rect x="1280" y="530" fill="#005396"/>
<rect x="1290" y="530" fill="#005196"/>
<rect x="1300" y="530" fill="#005096"/>
<rect x="1310" y="530" fill="#004f96"/>
<rect x="1320" y="530" fill="#004d96"/>
<rect x="1330" y="530" fill="#004c96"/>
<rect x="1340" y="530" fill="#004b96"/>
<rect x="1350" y="530" fill="#004996"/>
<rect x="1360" y="530" fill="#004796"/>
<rect x="1370" y="530" fill="#004696"/>
<rect x="1380" y="530" fill="#004496"/>
<rect x="1390" y="530" fill="#004296"/>
<rect x="1400" y="530" fill="#004096"/>
<rect x="1410" y="530" fill="#0a3e96"/>
<rect x="1420" y="530" fill="#173c96"/>
<rect x="1430" y="530" fill="#253a96"/>
<rect x="1440" y="530" fill="#333896"/>
<rect x="1450" y="530" fill="#423696"/>
<rect x="1460" y="530" fill="#523396"/>
<rect x="1470" y="530" fill="#633096"/>
<rect x="1480" y="530" fill="#742e96"/>
<rect x="1490" y="530" fill="#872b96"/>
<rect x="1500" y="530" fill="#962793"/>
<rect x="1510" y="530" fill="#961f81"/>
<rect x="1520" y="530" fill="#961973"/>
<rect x="1530" y="530" fill="#961467"/>
<rect x="1540" y="530" fill="#96105c"/>
<rect x="1550" y="530" fill="#960c53"/>
<rect x="1560" y="530" fill="#96094c"/>
<rect x="1570" y="530" fill="#960645"/>
<rect x="1580" y="530" fill="#96033f"/>
<rect x="1590" y="530" fill="#960139"/>
<rect x="1600" y="530" fill="#960034"/>
<rect x="1610" y="530" fill="#960030"/>
<rect x="1620" y="530" fill="#96002c"/>
<rect x="1630" y="530" fill="#960028"/>
<rect x="1640" y="530" fill="#960025"/>
<rect x="1650" y="530" fill="#960021"/>
<rect x="1660" y="530" fill="#95001e"/>
<rect x="1670" y="530" fill="#91001b"/>
<rect x="1680" y="530" fill="#8d0018"/>
<rect x="1690" y="530" fill="#890015"/>
<rect x="1700" y="530" fill="#850013"/>
<rect x="1710" y="530" fill="#800010"/>
<rect x="1720" y="530" fill="#7a000e"/>
<rect x="1730" y="530" fill="#74000c"/>
<rect x="1740" y="530" fill="#6e000a"/>
<rect x="1750" y="530" fill="#690009"/>
<rect x="1760" y="530" fill="#670007"/>
<rect x="1770" y="530" fill="#650006"/>
<rect x="1780" y="530" fill="#630005"/>
<rect x="1790" y="530" fill="#610004"/>
<rect x="1800" y="530" fill="#5f0004"/>
<rect x="1290" y="540" fill="#004996"/>
<rect x="1300" y="540" fill="#004896"/>
<rect x="1310" y="540" fill="#004696"/>
<rect x="1320" y="540" fill="#004596"/>
<rect x="1330" y="540" fill="#004396"/>
<rect x="1340" y="540" fill="#004296"/>
<rect x="1350" y="540" fill="#004096"/>
<rect x="1360" y="540" fill="#003f96"/>
<rect x="1370" y="540" fill="#003d96"/>
<rect x="1380" y="540" fill="#003b96"/>
<rect x="1390" y="540" fill="#003996"/>
<rect x="1400" y="540" fill="#013796"/>
<rect x="1410" y="540" fill="#0e3596"/>
<rect x="1420" y="540" fill="#1a3396"/>
<rect x="1430" y="540" fill="#283096"/>
<rect x="1440" y="540" fill="#362e96"/>
<rect x="1450" y="540" fill="#442b96"/>
<rect x="1460" y="540" fill="#542996"/>
<rect x="1470" y="540" fill="#642696"/>
<rect x="1480" y="540" fill="#752396"/>
<rect x="1490" y="540" fill="#862096"/>
<rect x="1500" y="540" fill="#961c94"/>
<rect x="1510" y="540" fill="#961683"/>
<rect x="1520" y="540" fill="#961175"/>
<rect x="1530" y="540" fill="#960d69"/>
<rect x="1540" y="540" fill="#96095f"/>
<rect x="1550" y="540" fill="#960656"/>
<rect x="1560" y="540" fill="#96034e"/>
<rect x="1570" y="540" fill="#960047"/>
<rect x="1580" y="540" fill="#960041"/>
<rect x="1590" y="540" fill="#96003b"/>
<rect x="1600" y="540" fill="#960036"/>
<rect x="1610" y="540" fill="#960032"/>
<rect x="1620" y="540" fill="#96002e"/>
<rect x="1630" y="540" fill="#96002a"/>
<rect x="1640" y="540" fill="#960027"/>
<rect x="1650" y="540" fill="#960024"/>
<rect x="1660" y="540" fill="#950020"/>
<rect x="1670" y="540" fill="#91001d"/>
<rect x="1680" y="540" fill="#8d001a"/>
<rect x="1690" y="540" fill="#890017"/>
<rect x="1700" y="540" fill="#850014"/>
<rect x="1710" y="540" fill="#800012"/>
<rect x="1720" y="540" fill="#7a000f"/>
<rect x="1730" y="540" fill="#74000d"/>
<rect x="1740" y="540" fill="#6e000b"/>
<rect x="1750" y="540" fill="#69000a"/>
<rect x="1760" y="540" fill="#670009"/>
<rect x="1770" y="540" fill="#650007"/>
<rect x="1290" y="550" fill="#004296"/>
<rect x="1300" y="550" fill="#004096"/>
<rect x="1310" y="550" fill="#003f96"/>
<rect x="1320" y="550" fill="#003d96"/>
<rect x="1330" y="550" fill="#003b96"/>
<rect x="1340" y="550" fill="#003a96"/>
<rect x="1350" y="550" fill="#003896"/>
<rect x="1360" y="550" fill="#003696"/>
<rect x="1370" y="550" fill="#003496"/>
<rect x="1380" y="550" fill="#003296"/>
<rect x="1390" y="550" fill="#003096"/>
<rect x="1400" y="550" fill="#052e96"/>
<rect x="1410" y="550" fill="#112c96"/>
<rect x="1420" y="550" fill="#1e2a96"/>
<rect x="1430" y="550" fill="#2b2796"/>
<rect x="1440" y="550" fill="#382596"/>
<rect x="1450" y="550" fill="#462296"/>
<rect x="1460" y="550" fill="#551f96"/>
<rect x="1470" y="550" fill="#651c96"/>
<rect x="1480" y="550" fill="#751996"/>
<rect x="1490" y="550" fill="#861696"/>
<rect x="1500" y="550" fill="#961395"/>
<rect x="1510" y="550" fill="#960e85"/>
<rect x="1520" y="550" fill="#960977"/>
<rect x="1530" y="550" fill="#96066b"/>
<rect x="1540" y="550" fill="#960261"/>
<rect x="1550" y="550" fill="#960058"/>
<rect x="1560" y="550" fill="#960050"/>
<rect x="1570" y="550" fill="#960049"/>
<rect x="1580" y="550" fill="#960043"/>
<rect x="1590" y="550" fill="#96003e"/>
<rect x="1600" y="550" fill="#960039"/>
<rect x="1610" y="550" fill="#960034"/>
<rect x="1620" y="550" fill="#960030"/>
<rect x="1630" y="550" fill="#96002c"/>
<rect x="1640" y="550" fill="#960029"/>
<rect x="1650" y="550" fill="#960026"/>
<rect x="1660" y="550" fill="#950022"/>
<rect x="1670" y="550" fill="#91001f"/>
<rect x="1680" y="550" fill="#8d001b"/>
<rect x="1690" y="550" fill="#890019"/>
<rect x="1700" y="550" fill="#850016"/>
<rect x="1710" y="550" fill="#800013"/>
<rect x="1720" y="550" fill="#7a0011"/>
<rect x="1730" y="550" fill="#74000f"/>
<rect x="1740" y="550" fill="#6e000d"/>
<rect x="1300" y="560" fill="#003996"/>
<rect x="1310" y="560" fill="#003796"/>
<rect x="1320" y="560" fill="#003696"/>
<rect x="1330" y="560" fill="#003496"/>
<rect x="1340" y="560" fill="#003296"/>
<rect x="1350" y="560" fill="#003096"/>
<rect x="1360" y="560" fill="#002e96"/>
<rect x="1370" y="560" fill="#002c96"/>
<rect x="1380" y="560" fill="#002a96"/>
<rect x="1390" y="560" fill="#002896"/>
<rect x="1400" y="560" fill="#092696"/>
<rect x="1410" y="560" fill="#152496"/>
<rect x="1420" y="560" fill="#212196"/>
<rect x="1430" y="560" fill="#2d1f96"/>
<rect x="1440" y="560" fill="#3a1c96"/>
<rect x="1450" y="560" fill="#481996"/>
<rect x="1460" y="560" fill="#561796"/>
<rect x="1470" y="560" fill="#651496"/>
<rect x="1480" y="560" fill="#751096"/>
<rect x="1490" y="560" fill="#860d96"/>
<rect x="1500" y="560" fill="#960a96"/>
<rect x="1510" y="560" fill="#960586"/>
<rect x="1520" y="560" fill="#960278"/>
<rect x="1530" y="560" fill="#96006d"/>
<rect x="1540" y="560" fill="#960063"/>
<rect x="1550" y="560" fill="#96005a"/>
<rect x="1560" y="560" fill="#960052"/>
<rect x="1570" y="560" fill="#96004b"/>
<rect x="1580" y="560" fill="#960045"/>
<rect x="1590" y="560" fill="#960040"/>
<rect x="1600" y="560" fill="#96003b"/>
<rect x="1610" y="560" fill="#960036"/>
<rect x="1620" y="560" fill="#960032"/>
<rect x="1630" y="560" fill="#96002e"/>
<rect x="1640" y="560" fill="#96002b"/>
<rect x="1650" y="560" fill="#960027"/>
<rect x="1660" y="560" fill="#950024"/>
<rect x="1670" y="560" fill="#910020"/>
<rect x="1680" y="560" fill="#8d001d"/>
<rect x="1690" y="560" fill="#89001a"/>
<rect x="1700" y="560" fill="#850017"/>
<rect x="1710" y="560" fill="#800015"/>
<rect x="1720" y="560" fill="#7a0012"/>
<rect x="1300" y="570" fill="#003296"/>
<rect x="1310" y="570" fill="#003096"/>
<rect x="1320" y="570" fill="#002f96"/>
<rect x="1330" y="570" fill="#002d96"/>
<rect x="1340" y="570" fill="#002b96"/>
<rect x="1350" y="570" fill="#002996"/>
<rect x="1360" y="570" fill="#002796"/>
<rect x="1370" y="570" fill="#002596"/>
<rect x="1380" y="570" fill="#002396"/>
<rect x="1390" y="570" fill="#022196"/>
<rect x="1400" y="570" fill="#0c1e96"/>
<rect x="1410" y="570" fill="#181c96"/>
<rect x="1420" y="570" fill="#241996"/>
<rect x="1430" y="570" fill="#301796"/>
<rect x="1440" y="570" fill="#3d1496"/>
<rect x="1450" y="570" fill="#4a1196"/>
<rect x="1460" y="570" fill="#580e96"/>
<rect x="1470" y="570" fill="#660b96"/>
<rect x="1480" y="570" fill="#750896"/>
<rect x="1490" y="570" fill="#850596"/>
<rect x="1500" y="570" fill="#960196"/>
<rect x="1510" y="570" fill="#960087"/>
<rect x="1520" y="570" fill="#96007a"/>
<rect x="1530" y="570" fill="#96006f"/>
<rect x="1540" y="570" fill="#960065"/>
<rect x="1550" y="570" fill="#96005c"/>
<rect x="1560" y="570" fill="#960054"/>
<rect x="1570" y="570" fill="#96004d"/>
<rect x="1580" y="570" fill="#960047"/>
<rect x="1590" y="570" fill="#960042"/>
<rect x="1600" y="570" fill="#96003d"/>
<rect x="1610" y="570" fill="#960038"/>
<rect x="1620" y="570" fill="#960034"/>
<rect x="1630" y="570" fill="#960030"/>
<rect x="1640" y="570" fill="#96002d"/>
<rect x="1650" y="570" fill="#960029"/>
<rect x="1660" y="570" fill="#950026"/>
<rect x="1670" y="570" fill="#910022"/>
<rect x="1680" y="570" fill="#8d001f"/>
<rect x="1690" y="570" fill="#89001c"/>
<rect x="1300" y="580" fill="#002b96"/>
<rect x="1310" y="580" fill="#002a96"/>
<rect x="1320" y="580" fill="#002896"/>
<rect x="1330" y="580" fill="#002696"/>
<rect x="1340" y="580" fill="#002496"/>
<rect x="1350" y="580" fill="#002296"/>
<rect x="1360" y="580" fill="#002096"/>
<rect x="1370" y="580" fill="#001e96"/>
<rect x="1380" y="580" fill="#001c96"/>
<rect x="1390" y="580" fill="#051996"/>
<rect x="1400" y="580" fill="#101796"/>
<rect x="1410" y="580" fill="#1b1596"/>
<rect x="1420" y="580" fill="#261296"/>
<rect x="1430" y="580" fill="#320f96"/>
<rect x="1440" y="580" fill="#3f0d96"/>
<rect x="1450" y="580" fill="#4b0a96"/>
<rect x="1460" y="580" fill="#590796"/>
<rect x="1470" y="580" fill="#670496"/>
<rect x="1480" y="580" fill="#760096"/>
<rect x="1490" y="580" fill="#850096"/>
<rect x="1500" y="580" fill="#950096"/>
<rect x="1510" y="580" fill="#960089"/>
<rect x="1520" y="580" fill="#96007c"/>
<rect x="1530" y="580" fill="#960070"/>
<rect x="1540" y="580" fill="#960066"/>
<rect x="1550" y="580" fill="#96005e"/>
<rect x="1560" y="580" fill="#960056"/>
<rect x="1570" y="580" fill="#96004f"/>
<rect x="1580" y="580" fill="#960049"/>
<rect x="1590" y="580" fill="#960044"/>
<rect x="1600" y="580" fill="#96003f"/>
<rect x="1610" y="580" fill="#96003a"/>
<rect x="1620" y="580" fill="#960036"/>
<rect x="1630" y="580" fill="#960032"/>
<rect x="1640" y="580" fill="#96002e"/>
<rect x="1650" y="580" fill="#96002b"/>
<rect x="1660" y="580" fill="#950028"/>
<rect x="1310" y="590" fill="#002396"/>
<rect x="1320" y="590" fill="#002196"/>
<rect x="1330" y="590" fill="#001f96"/>
<rect x="1340" y="590" fill="#001d96"/>
<rect x="1350" y="590" fill="#001b96"/>
<rect x="1360" y="590" fill="#001996"/>
<rect x="1370" y="590" fill="#001796"/>
<rect x="1380" y="590" fill="#001596"/>
<rect x="1390" y="590" fill="#081396"/>
<rect x="1400" y="590" fill="#131096"/>
<rect x="1410" y="590" fill="#1e0e96"/>
<rect x="1420" y="590" fill="#290b96"/>
<rect x="1430" y="590" fill="#340896"/>
<rect x="1440" y="590" fill="#400596"/>
<rect x="1450" y="590" fill="#4d0396"/>
<rect x="1460" y="590" fill="#5a0096"/>
<rect x="1470" y="590" fill="#680096"/>
<rect x="1480" y="590" fill="#760096"/>
<rect x="1490" y="590" fill="#850096"/>
<rect x="1500" y="590" fill="#940096"/>
<rect x="1510" y="590" fill="#96008a"/>
<rect x="1520" y="590" fill="#96007d"/>
<rect x="1530" y="590" fill="#960072"/>
<rect x="1540" y="590" fill="#960068"/>
<rect x="1550" y="590" fill="#960060"/>
<rect x="1560" y="590" fill="#960058"/>
<rect x="1570" y="590" fill="#960051"/>
<rect x="1580" y="590" fill="#96004b"/>
<rect x="1590" y="590" fill="#960046"/>
<rect x="1600" y="590" fill="#960040"/>
<rect x="1610" y="590" fill="#96003c"/>
<rect x="1620" y="590" fill="#960038"/>
<rect x="1630" y="590" fill="#960034"/>
<rect x="1640" y="590" fill="#960030"/>
<rect x="1310" y="600" fill="#001d96"/>
<rect x="1320" y="600" fill="#001b96"/>
<rect x="1330" y="600" fill="#001996"/>
<rect x="1340" y="600" fill="#001796"/>
<rect x="1350" y="600" fill="#001596"/>
<rect x="1360" y="600" fill="#001396"/>
<rect x="1370" y="600" fill="#001196"/>
<rect x="1380" y="600" fill="#020f96"/>
<rect x="1390" y="600" fill="#0c0c96"/>
<rect x="1400" y="600" fill="#160a96"/>
<rect x="1410" y="600" fill="#200796"/>
<rect x="1420" y="600" fill="#2b0496"/>
<rect x="1430" y="600" fill="#360296"/>
<rect x="1440" y="600" fill="#420096"/>
<rect x="1450" y="600" fill="#4e0096"/>
<rect x="1460" y="600" fill="#5b0096"/>
<rect x="1470" y="600" fill="#680096"/>
<rect x="1480" y="600" fill="#760096"/>
<rect x="1490" y="600" fill="#840096"/>
<rect x="1500" y="600" fill="#930096"/>
<rect x="1510" y="600" fill="#96008b"/>
<rect x="1520" y="600" fill="#96007e"/>
<rect x="1530" y="600" fill="#960073"/>
<rect x="1540" y="600" fill="#96006a"/>
<rect x="1550" y="600" fill="#960061"/>
<rect x="1560" y="600" fill="#96005a"/>
<rect x="1570" y="600" fill="#960053"/>
<rect x="1580" y="600" fill="#96004d"/>
<rect x="1590" y="600" fill="#960047"/>
<rect x="1600" y="600" fill="#960042"/>
<rect x="1610" y="600" fill="#96003e"/>
<rect x="1320" y="610" fill="#001596"/>
<rect x="1330" y="610" fill="#001396"/>
<rect x="1340" y="610" fill="#001196"/>
<rect x="1350" y="610" fill="#000f96"/>
<rect x="1360" y="610" fill="#000d96"/>
<rect x="1370" y="610" fill="#000b96"/>
<rect x="1380" y="610" fill="#050896"/>
<rect x="1390" y="610" fill="#0f0696"/>
<rect x="1400" y="610" fill="#180496"/>
<rect x="1410" y="610" fill="#230196"/>
<rect x="1420" y="610" fill="#2d0096"/>
<rect x="1430" y="610" fill="#380096"/>
<rect x="1440" y="610" fill="#440096"/>
<rect x="1450" y="610" fill="#500096"/>
<rect x="1460" y="610" fill="#5c0096"/>
<rect x="1470" y="610" fill="#690096"/>
<rect x="1480" y="610" fill="#760096"/>
<rect x="1490" y="610" fill="#840096"/>
<rect x="1500" y="610" fill="#920096"/>
<rect x="1510" y="610" fill="#96008c"/>
<rect x="1520" y="610" fill="#960080"/>
<rect x="1530" y="610" fill="#960075"/>
<rect x="1540" y="610" fill="#96006b"/>
<rect x="1550" y="610" fill="#960063"/>
<rect x="1560" y="610" fill="#96005b"/>
<rect x="1570" y="610" fill="#960055"/>
<rect x="1580" y="610" fill="#96004f"/>
<rect x="1320" y="620" fill="#001096"/>
<rect x="1330" y="620" fill="#000e96"/>
<rect x="1340" y="620" fill="#000c96"/>
<rect x="1350" y="620" fill="#000a96"/>
<rect x="1360" y="620" fill="#000796"/>
<rect x="1370" y="620" fill="#000596"/>
<rect x="1380" y="620" fill="#080396"/>
<rect x="1390" y="620" fill="#110096"/>
<rect x="1400" y="620" fill="#1b0096"/>
<rect x="1410" y="620" fill="#250096"/>
<rect x="1420" y="620" fill="#2f0096"/>
<rect x="1430" y="620" fill="#3a0096"/>
<rect x="1440" y="620" fill="#450096"/>
<rect x="1450" y="620" fill="#510096"/>
<rect x="1460" y="620" fill="#5d0096"/>
<rect x="1470" y="620" fill="#690096"/>
<rect x="1480" y="620" fill="#760096"/>
<rect x="1490" y="620" fill="#840096"/>
<rect x="1500" y="620" fill="#920096"/>
<rect x="1510" y="620" fill="#96008d"/>
<rect x="1520" y="620" fill="#960081"/>
<rect x="1530" y="620" fill="#960076"/>
<rect x="1540" y="620" fill="#96006d"/>
<rect x="1550" y="620" fill="#960065"/>
<rect x="1560" y="620" fill="#96005d"/>
<rect x="1330" y="630" fill="#000996"/>
<rect x="1340" y="630" fill="#000696"/>
<rect x="1350" y="630" fill="#000496"/>
<rect x="1360" y="630" fill="#000296"/>
<rect x="1370" y="630" fill="#020096"/>
<rect x="1380" y="630" fill="#0b0096"/>
<rect x="1390" y="630" fill="#140096"/>
<rect x="1400" y="630" fill="#1e0096"/>
<rect x="1410" y="630" fill="#270096"/>
<rect x="1420" y="630" fill="#310096"/>
<rect x="1430" y="630" fill="#3c0096"/>
<rect x="1440" y="630" fill="#470096"/>
<rect x="1450" y="630" fill="#520096"/>
<rect x="1460" y="630" fill="#5e0096"/>
<rect x="1470" y="630" fill="#6a0096"/>
<rect x="1480" y="630" fill="#760096"/>
<rect x="1490" y="630" fill="#830096"/>
<rect x="1500" y="630" fill="#910096"/>
<rect x="1510" y="630" fill="#96008e"/>
<rect x="1520" y="630" fill="#960082"/>
<rect x="1530" y="630" fill="#960078"/>
<rect x="1330" y="640" fill="#000396"/>
<rect x="1340" y="640" fill="#000196"/>
<rect x="1350" y="640" fill="#000096"/>
<rect x="1360" y="640" fill="#000096"/>
<rect x="1370" y="640" fill="#050096"/>
<rect x="1380" y="640" fill="#0e0096"/>
<rect x="1390" y="640" fill="#170096"/>
<rect x="1400" y="640" fill="#200096"/>
<rect x="1410" y="640" fill="#290096"/>
<rect x="1420" y="640" fill="#330096"/>
<rect x="1430" y="640" fill="#3e0096"/>
<rect x="1440" y="640" fill="#480096"/>
<rect x="1450" y="640" fill="#530096"/>
<rect x="1460" y="640" fill="#5f0096"/>
<rect x="1470" y="640" fill="#6a0096"/>
<rect x="1480" y="640" fill="#770096"/>
<rect x="1490" y="640" fill="#830096"/>
<rect x="1500" y="640" fill="#900096"/>
<rect x="1340" y="650" fill="#000096"/>
<rect x="1350" y="650" fill="#000096"/>
<rect x="1360" y="650" fill="#000096"/>
<rect x="1370" y="650" fill="#080096"/>
<rect x="1380" y="650" fill="#100096"/>
<rect x="1390" y="650" fill="#190096"/>
<rect x="1400" y="650" fill="#220096"/>
<rect x="1410" y="650" fill="#2b0096"/>
<rect x="1420" y="650" fill="#350096"/>
<rect x="1430" y="650" fill="#3f0096"/>
<rect x="1440" y="650" fill="#4a0096"/>
<rect x="1450" y="650" fill="#540096"/>
<rect x="1460" y="650" fill="#5f0096"/>
<rect x="1470" y="650" fill="#6b0096"/>
<rect x="1480" y="650" fill="#770096"/>
<rect x="1350" y="660" fill="#000096"/>
<rect x="1360" y="660" fill="#020096"/>
<rect x="1370" y="660" fill="#0a0096"/>
<rect x="1380" y="660" fill="#130096"/>
<rect x="1390" y="660" fill="#1b0096"/>
<rect x="1400" y="660" fill="#240096"/>
<rect x="1410" y="660" fill="#2d0096"/>
<rect x="1420" y="660" fill="#370096"/>
<rect x="1430" y="660" fill="#410096"/>
<rect x="1440" y="660" fill="#4b0096"/>
<rect x="1450" y="660" fill="#550096"/>
<rect x="1360" y="670" fill="#040096"/>
<rect x="1370" y="670" fill="#0c0096"/>
<rect x="1380" y="670" fill="#140096"/>
<rect x="1390" y="670" fill="#1d0096"/>
<rect x="1400" y="670" fill="#250096"/>
<rect x="1410" y="670" fill="#2f0096"/>
<rect x="1420" y="670" fill="#380096"/>
<rect x="1380" y="680" fill="#140096"/>
<rect x="1390" y="680" fill="#1d0096"/>
<rect x="1400" y="680" fill="#250096"/>
</g></g>
<g clip-path="url(#ct)"><g filter="url(#b2)" class="g6">
<rect x="1476" y="288" fill="#00ff01"/>
<rect x="1482" y="288" fill="#00ff00"/>
<rect x="1488" y="288" fill="#00ff00"/>
<rect x="1494" y="288" fill="#09ff00"/>
<rect x="1476" y="294" fill="#00ff04"/>
<rect x="1482" y="294" fill="#00ff02"/>
<rect x="1488" y="294" fill="#03ff00"/>
<rect x="1494" y="294" fill="#0cff00"/>
<rect x="1500" y="294" fill="#15ff00"/>
<rect x="1506" y="294" fill="#1eff00"/>
<rect x="1476" y="300" fill="#00ff08"/>
<rect x="1482" y="300" fill="#00ff06"/>
<rect x="1488" y="300" fill="#06ff03"/>
<rect x="1494" y="300" fill="#0fff01"/>
<rect x="1500" y="300" fill="#18ff00"/>
<rect x="1506" y="300" fill="#22ff00"/>
<rect x="1512" y="300" fill="#2cff00"/>
<rect x="1518" y="300" fill="#36ff00"/>
<rect x="1470" y="306" fill="#00ff0e"/>
<rect x="1476" y="306" fill="#00ff0c"/>
<rect x="1482" y="306" fill="#00ff0a"/>
<rect x="1488" y="306" fill="#09ff07"/>
<rect x="1494" y="306" fill="#13ff05"/>
<rect x="1500" y="306" fill="#1cff02"/>
<rect x="1506" y="306" fill="#26ff00"/>
<rect x="1512" y="306" fill="#30ff00"/>
<rect x="1518" y="306" fill="#3aff00"/>
<rect x="1524" y="306" fill="#45ff00"/>
<rect x="1470" y="312" fill="#00ff12"/>
<rect x="1476" y="312" fill="#00ff10"/>
<rect x="1482" y="312" fill="#03ff0e"/>
<rect x="1488" y="312" fill="#0dff0b"/>
<rect x="1494" y="312" fill="#16ff09"/>
<rect x="1500" y="312" fill="#20ff06"/>
<rect x="1506" y="312" fill="#2aff04"/>
<rect x="1512" y="312" fill="#35ff01"/>
<rect x="1518" y="312" fill="#3fff00"/>
<rect x="1524" y="312" fill="#4aff00"/>
<rect x="1530" y="312" fill="#55ff00"/>
<rect x="1536" y="312" fill="#60ff00"/>
<rect x="1470" y="318" fill="#00ff17"/>
<rect x="1476" y="318" fill="#00ff14"/>
<rect x="1482" y="318" fill="#07ff12"/>
<rect x="1488" y="318" fill="#10ff10"/>
<rect x="1494" y="318" fill="#1aff0d"/>
<rect x="1500" y="318" fill="#24ff0b"/>
<rect x="1506" y="318" fill="#2fff08"/>
<rect x="1512" y="318" fill="#39ff06"/>
<rect x="1518" y="318" fill="#44ff03"/>
<rect x="1524" y="318" fill="#4fff00"/>
<rect x="1530" y="318" fill="#5aff00"/>
<rect x="1536" y="318" fill="#66ff00"/>
<rect x="1542" y="318" fill="#71ff00"/>
<rect x="1464" y="324" fill="#00ff1d"/>
<rect x="1470" y="324" fill="#00ff1b"/>
<rect x="1476" y="324" fill="#00ff19"/>
<rect x="1482" y="324" fill="#0aff17"/>
<rect x="1488" y="324" fill="#14ff14"/>
<rect x="1494" y="324" fill="#1eff12"/>
<rect x="1500" y="324" fill="#29ff0f"/>
<rect x="1506" y="324" fill="#33ff0d"/>
<rect x="1512" y="324" fill="#3eff0a"/>
<rect x="1518" y="324" fill="#49ff07"/>
<rect x="1524" y="324" fill="#55ff05"/>
<rect x="1530" y="324" fill="#60ff02"/>
<rect x="1536" y="324" fill="#6cff00"/>
<rect x="1542" y="324" fill="#78ff00"/>
<rect x="1548" y="324" fill="#85ff00"/>
<rect x="1554" y="324" fill="#91ff00"/>
<rect x="1464" y="330" fill="#00ff22"/>
<rect x="1470" y="330" fill="#00ff20"/>
<rect x="1476" y="330" fill="#04ff1e"/>
<rect x="1482" y="330" fill="#0eff1b"/>
<rect x="1488" y="330" fill="#18ff19"/>
<rect x="1494" y="330" fill="#23ff16"/>
<rect x="1500" y="330" fill="#2dff14"/>
<rect x="1506" y="330" fill="#38ff11"/>
<rect x="1512" y="330" fill="#43ff0f"/>
<rect x="1518" y="330" fill="#4fff0c"/>
<rect x="1524" y="330" fill="#5aff09"/>
<rect x="1530" y="330" fill="#66ff06"/>
<rect x="1536" y="330" fill="#73ff04"/>
<rect x="1542" y="330" fill="#7fff01"/>
<rect x="1548" y="330" fill="#8cff00"/>
<rect x="1554" y="330" fill="#99ff00"/>
<rect x="1560" y="330" fill="#a7ff00"/>
<rect x="1464" y="336" fill="#00ff27"/>
<rect x="1470" y="336" fill="#00ff25"/>
<rect x="1476" y="336" fill="#07ff23"/>
<rect x="1482" y="336" fill="#12ff20"/>
<rect x="1488" y="336" fill="#1cff1e"/>
<rect x="1494" y="336" fill="#27ff1b"/>
<rect x="1500" y="336" fill="#32ff19"/>
<rect x="1506" y="336" fill="#3dff16"/>
<rect x="1512" y="336" fill="#49ff14"/>
<rect x="1518" y="336" fill="#55ff11"/>
<rect x="1524" y="336" fill="#61ff0e"/>
<rect x="1530" y="336" fill="#6dff0b"/>
<rect x="1536" y="336" fill="#7aff08"/>
<rect x="1542" y="336" fill="#87ff05"/>
<rect x="1548" y="336" fill="#94ff02"/>
<rect x="1554" y="336" fill="#a1ff00"/>
<rect x="1560" y="336" fill="#afff00"/>
<rect x="1566" y="336" fill="#beff00"/>
<rect x="1572" y="336" fill="#ccff00"/>
<rect x="1458" y="342" fill="#00ff2f"/>
<rect x="1464" y="342" fill="#00ff2c"/>
<rect x="1470" y="342" fill="#01ff2a"/>
<rect x="1476" y="342" fill="#0bff28"/>
<rect x="1482" y="342" fill="#16ff25"/>
<rect x="1488" y="342" fill="#21ff23"/>
<rect x="1494" y="342" fill="#2cff20"/>
<rect x="1500" y="342" fill="#37ff1e"/>
<rect x="1506" y="342" fill="#43ff1b"/>
<rect x="1512" y="342" fill="#4fff19"/>
<rect x="1518" y="342" fill="#5bff16"/>
<rect x="1524" y="342" fill="#67ff13"/>
<rect x="1530" y="342" fill="#74ff10"/>
<rect x="1536" y="342" fill="#81ff0d"/>
<rect x="1542" y="342" fill="#8eff0a"/>
<rect x="1548" y="342" fill="#9cff07"/>
<rect x="1554" y="342" fill="#aaff04"/>
<rect x="1560" y="342" fill="#b9ff01"/>
<rect x="1566" y="342" fill="#c8ff00"/>
<rect x="1572" y="342" fill="#d7ff00"/>
<rect x="1578" y="342" fill="#e6ff00"/>
<rect x="1584" y="342" fill="#f7ff00"/>
<rect x="1458" y="348" fill="#00ff34"/>
<rect x="1464" y="348" fill="#00ff32"/>
<rect x="1470" y="348" fill="#04ff2f"/>
<rect x="1476" y="348" fill="#0fff2d"/>
<rect x="1482" y="348" fill="#1aff2b"/>
<rect x="1488" y="348" fill="#25ff28"/>
<rect x="1494" y="348" fill="#31ff26"/>
<rect x="1500" y="348" fill="#3cff23"/>
<rect x="1506" y="348" fill="#48ff21"/>
<rect x="1512" y="348" fill="#55ff1e"/>
<rect x="1518" y="348" fill="#61ff1b"/>
<rect x="1524" y="348" fill="#6eff19"/>
<rect x="1530" y="348" fill="#7bff16"/>
<rect x="1536" y="348" fill="#89ff13"/>
<rect x="1542" y="348" fill="#97ff10"/>
<rect x="1548" y="348" fill="#a5ff0d"/>
<rect x="1554" y="348" fill="#b4ff0a"/>
<rect x="1560" y="348" fill="#c3ff06"/>
<rect x="1566" y="348" fill="#d2ff03"/>
<rect x="1572" y="348" fill="#e2ff00"/>
<rect x="1578" y="348" fill="#f2ff00"/>
<rect x="1584" y="348" fill="#fffb00"/>
<rect x="1590" y="348" fill="#ffeb00"/>
<rect x="1458" y="354" fill="#00ff3a"/>
<rect x="1464" y="354" fill="#00ff37"/>
<rect x="1470" y="354" fill="#08ff35"/>
<rect x="1476" y="354" fill="#13ff33"/>
<rect x="1482" y="354" fill="#1eff31"/>
<rect x="1488" y="354" fill="#2aff2e"/>
<rect x="1494" y="354" fill="#36ff2c"/>
<rect x="1500" y="354" fill="#42ff29"/>
<rect x="1506" y="354" fill="#4eff27"/>
<rect x="1512" y="354" fill="#5bff24"/>
<rect x="1518" y="354" fill="#68ff21"/>
<rect x="1524" y="354" fill="#75ff1e"/>
<rect x="1530" y="354" fill="#83ff1b"/>
<rect x="1536" y="354" fill="#91ff19"/>
<rect x="1542" y="354" fill="#9fff15"/>
<rect x="1548" y="354" fill="#aeff12"/>
<rect x="1554" y="354" fill="#bdff0f"/>
<rect x="1560" y="354" fill="#cdff0c"/>
<rect x="1566" y="354" fill="#ddff09"/>
<rect x="1572" y="354" fill="#eeff05"/>
<rect x="1578" y="354" fill="#ffff02"/>
<rect x="1584" y="354" fill="#ffef00"/>
<rect x="1590" y="354" fill="#ffe000"/>
<rect x="1596" y="354" fill="#ffd300"/>
<rect x="1602" y="354" fill="#ffc600"/>
<rect x="1452" y="360" fill="#00ff42"/>
<rect x="1458" y="360" fill="#00ff40"/>
<rect x="1464" y="360" fill="#01ff3d"/>
<rect x="1470" y="360" fill="#0cff3b"/>
<rect x="1476" y="360" fill="#18ff39"/>
<rect x="1482" y="360" fill="#23ff37"/>
<rect x="1488" y="360" fill="#2fff34"/>
<rect x="1494" y="360" fill="#3bff32"/>
<rect x="1500" y="360" fill="#48ff2f"/>
<rect x="1506" y="360" fill="#55ff2d"/>
<rect x="1512" y="360" fill="#62ff2a"/>
<rect x="1518" y="360" fill="#6fff27"/>
<rect x="1524" y="360" fill="#7dff24"/>
<rect x="1530" y="360" fill="#8bff22"/>
<rect x="1536" y="360" fill="#9aff1f"/>
<rect x="1542" y="360" fill="#a9ff1c"/>
<rect x="1548" y="360" fill="#b8ff18"/>
<rect x="1554" y="360" fill="#c8ff15"/>
<rect x="1560" y="360" fill="#d8ff12"/>
<rect x="1566" y="360" fill="#e9ff0f"/>
<rect x="1572" y="360" fill="#faff0b"/>
<rect x="1578" y="360" fill="#fff307"/>
<rect x="1584" y="360" fill="#ffe303"/>
<rect x="1590" y="360" fill="#ffd500"/>
<rect x="1596" y="360" fill="#ffc800"/>
<rect x="1602" y="360" fill="#ffbd00"/>
<rect x="1608" y="360" fill="#ffb200"/>
<rect x="1452" y="366" fill="#00ff48"/>
<rect x="1458" y="366" fill="#00ff46"/>
<rect x="1464" y="366" fill="#05ff44"/>
<rect x="1470" y="366" fill="#10ff42"/>
<rect x="1476" y="366" fill="#1cff3f"/>
<rect x="1482" y="366" fill="#28ff3d"/>
<rect x="1488" y="366" fill="#34ff3b"/>
<rect x="1494" y="366" fill="#41ff38"/>
<rect x="1500" y="366" fill="#4eff36"/>
<rect x="1506" y="366" fill="#5bff33"/>
<rect x="1512" y="366" fill="#69ff30"/>
<rect x="1518" y="366" fill="#77ff2e"/>
<rect x="1524" y="366" fill="#85ff2b"/>
<rect x="1530" y="366" fill="#94ff28"/>
<rect x="1536" y="366" fill="#a3ff25"/>
<rect x="1542" y="366" fill="#b3ff22"/>
<rect x="1548" y="366" fill="#c3ff1f"/>
<rect x="1554" y="366" fill="#d3ff1c"/>
<rect x="1560" y="366" fill="#e4ff18"/>
<rect x="1566" y="366" fill="#f6ff15"/>
<rect x="1572" y="366" fill="#fff711"/>
<rect x="1578" y="366" fill="#ffe60c"/>
<rect x="1584" y="366" fill="#ffd808"/>
<rect x="1590" y="366" fill="#ffca05"/>
<rect x="1596" y="366" fill="#ffbe02"/>
<rect x="1602" y="366" fill="#ffb300"/>
<rect x="1608" y="366" fill="#ffa900"/>
<rect x="1614" y="366" fill="#ffa000"/>
<rect x="1620" y="366" fill="#ff9700"/>
<rect x="1452" y="372" fill="#00ff4f"/>
<rect x="1458" y="372" fill="#00ff4d"/>
<rect x="1464" y="372" fill="#09ff4a"/>
<rect x="1470" y="372" fill="#15ff48"/>
<rect x="1476" y="372" fill="#21ff46"/>
<rect x="1482" y="372" fill="#2dff44"/>
<rect x="1488" y="372" fill="#3aff41"/>
<rect x="1494" y="372" fill="#47ff3f"/>
<rect x="1500" y="372" fill="#55ff3c"/>
<rect x="1506" y="372" fill="#62ff3a"/>
<rect x="1512" y="372" fill="#70ff37"/>
<rect x="1518" y="372" fill="#7fff34"/>
<rect x="1524" y="372" fill="#8eff32"/>
<rect x="1530" y="372" fill="#9dff2f"/>
<rect x="1536" y="372" fill="#adff2c"/>
<rect x="1542" y="372" fill="#bdff29"/>
<rect x="1548" y="372" fill="#ceff26"/>
<rect x="1554" y="372" fill="#dfff22"/>
<rect x="1560" y="372" fill="#f1ff1f"/>
<rect x="1566" y="372" fill="#fffb1b"/>
<rect x="1572" y="372" fill="#ffea16"/>
<rect x="1578" y="372" fill="#ffdb12"/>
<rect x="1584" y="372" fill="#ffcd0d"/>
<rect x="1590" y="372" fill="#ffc00a"/>
<rect x="1596" y="372" fill="#ffb506"/>
<rect x="1602" y="372" fill="#ffaa03"/>
<rect x="1608" y="372" fill="#ffa100"/>
<rect x="1614" y="372" fill="#ff9800"/>
<rect x="1620" y="372" fill="#ff8f00"/>
<rect x="1626" y="372" fill="#ff8800"/>
<rect x="1446" y="378" fill="#00ff58"/>
<rect x="1452" y="378" fill="#00ff56"/>
<rect x="1458" y="378" fill="#02ff54"/>
<rect x="1464" y="378" fill="#0dff52"/>
<rect x="1470" y="378" fill="#1aff4f"/>
<rect x="1476" y="378" fill="#26ff4d"/>
<rect x="1482" y="378" fill="#33ff4b"/>
<rect x="1488" y="378" fill="#40ff48"/>
<rect x="1494" y="378" fill="#4eff46"/>
<rect x="1500" y="378" fill="#5cff44"/>
<rect x="1506" y="378" fill="#6aff41"/>
<rect x="1512" y="378" fill="#79ff3e"/>
<rect x="1518" y="378" fill="#88ff3c"/>
<rect x="1524" y="378" fill="#97ff39"/>
<rect x="1530" y="378" fill="#a7ff36"/>
<rect x="1536" y="378" fill="#b8ff33"/>
<rect x="1542" y="378" fill="#c8ff30"/>
<rect x="1548" y="378" fill="#daff2d"/>
<rect x="1554" y="378" fill="#ecff2a"/>
<rect x="1560" y="378" fill="#ffff26"/>
<rect x="1566" y="378" fill="#ffee21"/>
<rect x="1572" y="378" fill="#ffde1b"/>
<rect x="1578" y="378" fill="#ffcf17"/>
<rect x="1584" y="378" fill="#ffc212"/>
<rect x="1590" y="378" fill="#ffb60e"/>
<rect x="1596" y="378" fill="#ffab0b"/>
<rect x="1602" y="378" fill="#ffa108"/>
<rect x="1608" y="378" fill="#ff9805"/>
<rect x="1614" y="378" fill="#ff9002"/>
<rect x="1620" y="378" fill="#ff8800"/>
<rect x="1626" y="378" fill="#ff8100"/>
<rect x="1632" y="378" fill="#ff7a00"/>
<rect x="1638" y="378" fill="#ff7400"/>
<rect x="1446" y="384" fill="#00ff5f"/>
<rect x="1452" y="384" fill="#00ff5d"/>
<rect x="1458" y="384" fill="#06ff5b"/>
<rect x="1464" y="384" fill="#12ff59"/>
<rect x="1470" y="384" fill="#1fff57"/>
<rect x="1476" y="384" fill="#2cff55"/>
<rect x="1482" y="384" fill="#39ff52"/>
<rect x="1488" y="384" fill="#47ff50"/>
<rect x="1494" y="384" fill="#55ff4e"/>
<rect x="1500" y="384" fill="#63ff4b"/>
<rect x="1506" y="384" fill="#72ff49"/>
<rect x="1512" y="384" fill="#81ff46"/>
<rect x="1518" y="384" fill="#91ff43"/>
<rect x="1524" y="384" fill="#a1ff41"/>
<rect x="1530" y="384" fill="#b2ff3e"/>
<rect x="1536" y="384" fill="#c3ff3b"/>
<rect x="1542" y="384" fill="#d5ff38"/>
<rect x="1548" y="384" fill="#e7ff35"/>
<rect x="1554" y="384" fill="#faff32"/>
<rect x="1560" y="384" fill="#fff22c"/>
<rect x="1566" y="384" fill="#ffe126"/>
<rect x="1572" y="384" fill="#ffd220"/>
<rect x="1578" y="384" fill="#ffc41b"/>
<rect x="1584" y="384" fill="#ffb817"/>
<rect x="1590" y="384" fill="#ffad13"/>
<rect x="1596" y="384" fill="#ffa20f"/>
<rect x="1602" y="384" fill="#ff990c"/>
<rect x="1608" y="384" fill="#ff9009"/>
<rect x="1614" y="384" fill="#ff8806"/>
<rect x="1620" y="384" fill="#ff8103"/>
<rect x="1626" y="384" fill="#ff7a01"/>
<rect x="1632" y="384" fill="#ff7300"/>
<rect x="1638" y="384" fill="#ff6d00"/>
<rect x="1644" y="384" fill="#ff6800"/>
<rect x="1446" y="390" fill="#00ff67"/>
<rect x="1452" y="390" fill="#00ff65"/>
<rect x="1458" y="390" fill="#0aff63"/>
<rect x="1464" y="390" fill="#17ff61"/>
<rect x="1470" y="390" fill="#24ff5f"/>
<rect x="1476" y="390" fill="#31ff5d"/>
<rect x="1482" y="390" fill="#3fff5a"/>
<rect x="1488" y="390" fill="#4dff58"/>
<rect x="1494" y="390" fill="#5cff56"/>
<rect x="1500" y="390" fill="#6bff53"/>
<rect x="1506" y="390" fill="#7aff51"/>
<rect x="1512" y="390" fill="#8aff4e"/>
<rect x="1518" y="390" fill="#9bff4c"/>
<rect x="1524" y="390" fill="#acff49"/>
<rect x="1530" y="390" fill="#bdff46"/>
<rect x="1536" y="390" fill="#cfff43"/>
<rect x="1542" y="390" fill="#e1ff40"/>
<rect x="1548" y="390" fill="#f5ff3d"/>
<rect x="1554" y="390" fill="#fff638"/>
<rect x="1560" y="390" fill="#ffe431"/>
<rect x="1566" y="390" fill="#ffd42b"/>
<rect x="1572" y="390" fill="#ffc625"/>
<rect x="1578" y="390" fill="#ffb920"/>
<rect x="1584" y="390" fill="#ffae1b"/>
<rect x="1590" y="390" fill="#ffa317"/>
<rect x="1596" y="390" fill="#ff9913"/>
<rect x="1602" y="390" fill="#ff9010"/>
<rect x="1608" y="390" fill="#ff880d"/>
<rect x="1614" y="390" fill="#ff810a"/>
<rect x="1620" y="390" fill="#ff7907"/>
<rect x="1626" y="390" fill="#ff7304"/>
<rect x="1632" y="390" fill="#ff6d02"/>
<rect x="1638" y="390" fill="#ff6700"/>
<rect x="1644" y="390" fill="#ff6200"/>
<rect x="1650" y="390" fill="#ff5c00"/>
<rect x="1656" y="390" fill="#ff5800"/>
<rect x="1440" y="396" fill="#00ff71"/>
<rect x="1446" y="396" fill="#00ff6f"/>
<rect x="1452" y="396" fill="#02ff6d"/>
<rect x="1458" y="396" fill="#0fff6b"/>
<rect x="1464" y="396" fill="#1cff69"/>
<rect x="1470" y="396" fill="#2aff67"/>
<rect x="1476" y="396" fill="#38ff65"/>
<rect x="1482" y="396" fill="#46ff63"/>
<rect x="1488" y="396" fill="#55ff61"/>
<rect x="1494" y="396" fill="#64ff5e"/>
<rect x="1500" y="396" fill="#73ff5c"/>
<rect x="1506" y="396" fill="#83ff5a"/>
<rect x="1512" y="396" fill="#94ff57"/>
<rect x="1518" y="396" fill="#a5ff55"/>
<rect x="1524" y="396" fill="#b7ff52"/>
<rect x="1530" y="396" fill="#c9ff4f"/>
<rect x="1536" y="396" fill="#dcff4c"/>
<rect x="1542" y="396" fill="#efff49"/>
<rect x="1548" y="396" fill="#fffb45"/>
<rect x="1554" y="396" fill="#ffe83d"/>
<rect x="1560" y="396" fill="#ffd736"/>
<rect x="1566" y="396" fill="#ffc92f"/>
<rect x="1572" y="396" fill="#ffbb2a"/>
<rect x="1578" y="396" fill="#ffaf25"/>
<rect x="1584" y="396" fill="#ffa420"/>
<rect x="1590" y="396" fill="#ff9a1c"/>
<rect x="1596" y="396" fill="#ff9118"/>
<rect x="1602" y="396" fill="#ff8814"/>
<rect x="1608" y="396" fill="#ff8011"/>
<rect x="1614" y="396" fill="#ff790d"/>
<rect x="1620" y="396" fill="#ff720b"/>
<rect x="1626" y="396" fill="#ff6c08"/>
<rect x="1632" y="396" fill="#ff6605"/>
<rect x="1638" y="396" fill="#ff6103"/>
<rect x="1644" y="396" fill="#ff5c01"/>
<rect x="1650" y="396" fill="#ff5700"/>
<rect x="1656" y="396" fill="#ff5200"/>
<rect x="1662" y="396" fill="#fc4d00"/>
<rect x="1668" y="396" fill="#f84800"/>
<rect x="1440" y="402" fill="#00ff7a"/>
<rect x="1446" y="402" fill="#00ff78"/>
<rect x="1452" y="402" fill="#07ff76"/>
<rect x="1458" y="402" fill="#14ff74"/>
<rect x="1464" y="402" fill="#22ff72"/>
<rect x="1470" y="402" fill="#30ff70"/>
<rect x="1476" y="402" fill="#3eff6e"/>
<rect x="1482" y="402" fill="#4dff6c"/>
<rect x="1488" y="402" fill="#5cff6a"/>
<rect x="1494" y="402" fill="#6cff68"/>
<rect x="1500" y="402" fill="#7cff65"/>
<rect x="1506" y="402" fill="#8dff63"/>
<rect x="1512" y="402" fill="#9fff61"/>
<rect x="1518" y="402" fill="#b0ff5e"/>
<rect x="1524" y="402" fill="#c3ff5b"/>
<rect x="1530" y="402" fill="#d6ff59"/>
<rect x="1536" y="402" fill="#eaff56"/>
<rect x="1542" y="402" fill="#feff53"/>
<rect x="1548" y="402" fill="#ffec4a"/>
<rect x="1554" y="402" fill="#ffdb42"/>
<rect x="1560" y="402" fill="#ffcb3b"/>
<rect x="1566" y="402" fill="#ffbd34"/>
<rect x="1572" y="402" fill="#ffb12e"/>
<rect x="1578" y="402" fill="#ffa529"/>
<rect x="1584" y="402" fill="#ff9b24"/>
<rect x="1590" y="402" fill="#ff9120"/>
<rect x="1596" y="402" fill="#ff881c"/>
<rect x="1602" y="402" fill="#ff8018"/>
<rect x="1608" y="402" fill="#ff7914"/>
<rect x="1614" y="402" fill="#ff7211"/>
<rect x="1620" y="402" fill="#ff6c0e"/>
<rect x="1626" y="402" fill="#ff660b"/>
<rect x="1632" y="402" fill="#ff6009"/>
<rect x="1638" y="402" fill="#ff5b06"/>
<rect x="1644" y="402" fill="#ff5604"/>
<rect x="1650" y="402" fill="#ff5102"/>
<rect x="1656" y="402" fill="#ff4d00"/>
<rect x="1662" y="402" fill="#fc4800"/>
<rect x="1668" y="402" fill="#f84300"/>
<rect x="1674" y="402" fill="#f43e00"/>
<rect x="1440" y="408" fill="#00ff83"/>
<rect x="1446" y="408" fill="#00ff81"/>
<rect x="1452" y="408" fill="#0bff7f"/>
<rect x="1458" y="408" fill="#19ff7e"/>
<rect x="1464" y="408" fill="#27ff7c"/>
<rect x="1470" y="408" fill="#36ff7a"/>
<rect x="1476" y="408" fill="#45ff78"/>
<rect x="1482" y="408" fill="#55ff76"/>
<rect x="1488" y="408" fill="#65ff74"/>
<rect x="1494" y="408" fill="#75ff72"/>
<rect x="1500" y="408" fill="#86ff6f"/>
<rect x="1506" y="408" fill="#98ff6d"/>
<rect x="1512" y="408" fill="#aaff6b"/>
<rect x="1518" y="408" fill="#bdff68"/>
<rect x="1524" y="408" fill="#d0ff66"/>
<rect x="1530" y="408" fill="#e4ff63"/>
<rect x="1536" y="408" fill="#f9ff60"/>
<rect x="1542" y="408" fill="#fff058"/>
<rect x="1548" y="408" fill="#ffde4f"/>
<rect x="1554" y="408" fill="#ffce47"/>
<rect x="1560" y="408" fill="#ffbf3f"/>
<rect x="1566" y="408" fill="#ffb239"/>
<rect x="1572" y="408" fill="#ffa633"/>
<rect x="1578" y="408" fill="#ff9b2d"/>
<rect x="1584" y="408" fill="#ff9228"/>
<rect x="1590" y="408" fill="#ff8924"/>
<rect x="1596" y="408" fill="#ff801f"/>
<rect x="1602" y="408" fill="#ff791c"/>
<rect x="1608" y="408" fill="#ff7218"/>
<rect x="1614" y="408" fill="#ff6b15"/>
<rect x="1620" y="408" fill="#ff6512"/>
<rect x="1626" y="408" fill="#ff5f0f"/>
<rect x="1632" y="408" fill="#ff5a0c"/>
<rect x="1638" y="408" fill="#ff550a"/>
<rect x="1644" y="408" fill="#ff5007"/>
<rect x="1650" y="408" fill="#ff4c05"/>
<rect x="1656" y="408" fill="#ff4803"/>
<rect x="1662" y="408" fill="#fc4301"/>
<rect x="1668" y="408" fill="#f83e00"/>
<rect x="1674" y="408" fill="#f43a00"/>
<rect x="1680" y="408" fill="#f03600"/>
<rect x="1686" y="408" fill="#ec3200"/>
<rect x="1434" y="414" fill="#00ff8e"/>
<rect x="1440" y="414" fill="#00ff8d"/>
<rect x="1446" y="414" fill="#03ff8b"/>
<rect x="1452" y="414" fill="#11ff89"/>
<rect x="1458" y="414" fill="#1fff88"/>
<rect x="1464" y="414" fill="#2eff86"/>
<rect x="1470" y="414" fill="#3dff84"/>
<rect x="1476" y="414" fill="#4dff82"/>
<rect x="1482" y="414" fill="#5dff80"/>
<rect x="1488" y="414" fill="#6dff7e"/>
<rect x="1494" y="414" fill="#7fff7c"/>
<rect x="1500" y="414" fill="#91ff7a"/>
<rect x="1506" y="414" fill="#a3ff78"/>
<rect x="1512" y="414" fill="#b6ff76"/>
<rect x="1518" y="414" fill="#caff73"/>
<rect x="1524" y="414" fill="#deff71"/>
<rect x="1530" y="414" fill="#f3ff6e"/>
<rect x="1536" y="414" fill="#fff567"/>
<rect x="1542" y="414" fill="#ffe25d"/>
<rect x="1548" y="414" fill="#ffd153"/>
<rect x="1554" y="414" fill="#ffc14b"/>
<rect x="1560" y="414" fill="#ffb444"/>
<rect x="1566" y="414" fill="#ffa73d"/>
<rect x="1572" y="414" fill="#ff9c37"/>
<rect x="1578" y="414" fill="#ff9231"/>
<rect x="1584" y="414" fill="#ff892c"/>
<rect x="1590" y="414" fill="#ff8028"/>
<rect x="1596" y="414" fill="#ff7823"/>
<rect x="1602" y="414" fill="#ff711f"/>
<rect x="1608" y="414" fill="#ff6b1c"/>
<rect x="1614" y="414" fill="#ff6418"/>
<rect x="1620" y="414" fill="#ff5f15"/>
<rect x="1626" y="414" fill="#ff5912"/>
<rect x="1632" y="414" fill="#ff540f"/>
<rect x="1638" y="414" fill="#ff4f0d"/>
<rect x="1644" y="414" fill="#ff4b0a"/>
<rect x="1650" y="414" fill="#ff4708"/>
<rect x="1656" y="414" fill="#ff4306"/>
<rect x="1662" y="414" fill="#fc3e04"/>
<rect x="1668" y="414" fill="#f83a02"/>
<rect x="1674" y="414" fill="#f43600"/>
<rect x="1680" y="414" fill="#f03200"/>
<rect x="1686" y="414" fill="#ec2e00"/>
<rect x="1692" y="414" fill="#e82b00"/>
<rect x="1434" y="420" fill="#00ff99"/>
<rect x="1440" y="420" fill="#00ff97"/>
<rect x="1446" y="420" fill="#08ff96"/>
<rect x="1452" y="420" fill="#16ff94"/>
<rect x="1458" y="420" fill="#25ff92"/>
<rect x="1464" y="420" fill="#34ff91"/>
<rect x="1470" y="420" fill="#44ff8f"/>
<rect x="1476" y="420" fill="#55ff8d"/>
<rect x="1482" y="420" fill="#66ff8b"/>
<rect x="1488" y="420" fill="#77ff8a"/>
<rect x="1494" y="420" fill="#89ff88"/>
<rect x="1500" y="420" fill="#9cff86"/>
<rect x="1506" y="420" fill="#afff84"/>
<rect x="1512" y="420" fill="#c3ff81"/>
<rect x="1518" y="420" fill="#d8ff7f"/>
<rect x="1524" y="420" fill="#eeff7d"/>
<rect x="1530" y="420" fill="#fffa78"/>
<rect x="1536" y="420" fill="#ffe66c"/>
<rect x="1542" y="420" fill="#ffd461"/>
<rect x="1548" y="420" fill="#ffc458"/>
<rect x="1554" y="420" fill="#ffb54f"/>
<rect x="1560" y="420" fill="#ffa948"/>
<rect x="1566" y="420" fill="#ff9d41"/>
<rect x="1572" y="420" fill="#ff933b"/>
<rect x="1578" y="420" fill="#ff8935"/>
<rect x="1584" y="420" fill="#ff8030"/>
<rect x="1590" y="420" fill="#ff782b"/>
<rect x="1596" y="420" fill="#ff7127"/>
<rect x="1602" y="420" fill="#ff6a23"/>
<rect x="1608" y="420" fill="#ff641f"/>
<rect x="1614" y="420" fill="#ff5e1c"/>
<rect x="1620" y="420" fill="#ff5818"/>
<rect x="1626" y="420" fill="#ff5315"/>
<rect x="1632" y="420" fill="#ff4e13"/>
<rect x="1638" y="420" fill="#ff4a10"/>
<rect x="1644" y="420" fill="#ff450d"/>
<rect x="1650" y="420" fill="#ff410b"/>
<rect x="1656" y="420" fill="#ff3e09"/>
<rect x="1662" y="420" fill="#fc3907"/>
<rect x="1668" y="420" fill="#f83505"/>
<rect x="1674" y="420" fill="#f43103"/>
<rect x="1680" y="420" fill="#f02e01"/>
<rect x="1686" y="420" fill="#ec2a00"/>
<rect x="1692" y="420" fill="#e82700"/>
<rect x="1698" y="420" fill="#e42400"/>
<rect x="1704" y="420" fill="#e02100"/>
<rect x="1434" y="426" fill="#00ffa4"/>
<rect x="1440" y="426" fill="#00ffa2"/>
<rect x="1446" y="426" fill="#0dffa1"/>
<rect x="1452" y="426" fill="#1cffa0"/>
<rect x="1458" y="426" fill="#2cff9e"/>
<rect x="1464" y="426" fill="#3cff9d"/>
<rect x="1470" y="426" fill="#4cff9b"/>
<rect x="1476" y="426" fill="#5dff99"/>
<rect x="1482" y="426" fill="#6fff98"/>
<rect x="1488" y="426" fill="#81ff96"/>
<rect x="1494" y="426" fill="#94ff94"/>
<rect x="1500" y="426" fill="#a8ff92"/>
<rect x="1506" y="426" fill="#bcff90"/>
<rect x="1512" y="426" fill="#d1ff8e"/>
<rect x="1518" y="426" fill="#e7ff8c"/>
<rect x="1524" y="426" fill="#feff8a"/>
<rect x="1530" y="426" fill="#ffea7c"/>
<rect x="1536" y="426" fill="#ffd770"/>
<rect x="1542" y="426" fill="#ffc666"/>
<rect x="1548" y="426" fill="#ffb75c"/>
<rect x="1554" y="426" fill="#ffaa54"/>
<rect x="1560" y="426" fill="#ff9e4c"/>
<rect x="1566" y="426" fill="#ff9345"/>
<rect x="1572" y="426" fill="#ff893f"/>
<rect x="1578" y="426" fill="#ff8039"/>
<rect x="1584" y="426" fill="#ff7834"/>
<rect x="1590" y="426" fill="#ff702f"/>
<rect x="1596" y="426" fill="#ff692b"/>
<rect x="1602" y="426" fill="#ff6326"/>
<rect x="1608" y="426" fill="#ff5d23"/>
<rect x="1614" y="426" fill="#ff571f"/>
<rect x="1620" y="426" fill="#ff521c"/>
<rect x="1626" y="426" fill="#ff4d19"/>
<rect x="1632" y="426" fill="#ff4916"/>
<rect x="1638" y="426" fill="#ff4413"/>
<rect x="1644" y="426" fill="#ff4010"/>
<rect x="1650" y="426" fill="#ff3c0e"/>
<rect x="1656" y="426" fill="#ff390c"/>
<rect x="1662" y="426" fill="#fc3509"/>
<rect x="1668" y="426" fill="#f83107"/>
<rect x="1674" y="426" fill="#f42d05"/>
<rect x="1680" y="426" fill="#f02a03"/>
<rect x="1686" y="426" fill="#ec2602"/>
<rect x="1692" y="426" fill="#e82300"/>
<rect x="1698" y="426" fill="#e42000"/>
<rect x="1704" y="426" fill="#e01e00"/>
<rect x="1710" y="426" fill="#da1b00"/>
<rect x="1428" y="432" fill="#00ffb1"/>
<rect x="1434" y="432" fill="#00ffb0"/>
<rect x="1440" y="432" fill="#03ffae"/>
<rect x="1446" y="432" fill="#13ffad"/>
<rect x="1452" y="432" fill="#22ffac"/>
<rect x="1458" y="432" fill="#33ffaa"/>
<rect x="1464" y="432" fill="#43ffa9"/>
<rect x="1470" y="432" fill="#55ffa8"/>
<rect x="1476" y="432" fill="#67ffa6"/>
<rect x="1482" y="432" fill="#79ffa5"/>
<rect x="1488" y="432" fill="#8cffa3"/>
<rect x="1494" y="432" fill="#a0ffa1"/>
<rect x="1500" y="432" fill="#b5ffa0"/>
<rect x="1506" y="432" fill="#cbff9e"/>
<rect x="1512" y="432" fill="#e1ff9c"/>
<rect x="1518" y="432" fill="#f8ff9a"/>
<rect x="1524" y="432" fill="#ffef8e"/>
<rect x="1530" y="432" fill="#ffdb81"/>
<rect x="1536" y="432" fill="#ffc974"/>
<rect x="1542" y="432" fill="#ffb96a"/>
<rect x="1548" y="432" fill="#ffab60"/>
<rect x="1554" y="432" fill="#ff9f58"/>
<rect x="1560" y="432" fill="#ff9450"/>
<rect x="1566" y="432" fill="#ff8949"/>
<rect x="1572" y="432" fill="#ff8043"/>
<rect x="1578" y="432" fill="#ff783d"/>
<rect x="1584" y="432" fill="#ff7037"/>
<rect x="1590" y="432" fill="#ff6933"/>
<rect x="1596" y="432" fill="#ff622e"/>
<rect x="1602" y="432" fill="#ff5c2a"/>
<rect x="1608" y="432" fill="#ff5626"/>
<rect x="1614" y="432" fill="#ff5122"/>
<rect x="1620" y="432" fill="#ff4c1f"/>
<rect x="1626" y="432" fill="#ff471c"/>
<rect x="1632" y="432" fill="#ff4319"/>
<rect x="1638" y="432" fill="#ff3f16"/>
<rect x="1644" y="432" fill="#ff3b13"/>
<rect x="1650" y="432" fill="#ff3711"/>
<rect x="1656" y="432" fill="#ff340e"/>
<rect x="1662" y="432" fill="#fc300c"/>
<rect x="1668" y="432" fill="#f82c0a"/>
<rect x="1674" y="432" fill="#f42908"/>
<rect x="1680" y="432" fill="#f02606"/>
<rect x="1686" y="432" fill="#ec2304"/>
<rect x="1692" y="432" fill="#e82002"/>
<rect x="1698" y="432" fill="#e41d01"/>
<rect x="1704" y="432" fill="#e01a00"/>
<rect x="1710" y="432" fill="#da1800"/>
<rect x="1716" y="432" fill="#d41500"/>
<rect x="1722" y="432" fill="#ce1300"/>
<rect x="1428" y="438" fill="#00ffbd"/>
<rect x="1434" y="438" fill="#00ffbc"/>
<rect x="1440" y="438" fill="#09ffbb"/>
<rect x="1446" y="438" fill="#19ffba"/>
<rect x="1452" y="438" fill="#29ffb9"/>
<rect x="1458" y="438" fill="#3affb8"/>
<rect x="1464" y="438" fill="#4cffb7"/>
<rect x="1470" y="438" fill="#5effb5"/>
<rect x="1476" y="438" fill="#71ffb4"/>
<rect x="1482" y="438" fill="#84ffb3"/>
<rect x="1488" y="438" fill="#98ffb1"/>
<rect x="1494" y="438" fill="#aeffb0"/>
<rect x="1500" y="438" fill="#c3ffae"/>
<rect x="1506" y="438" fill="#daffad"/>
<rect x="1512" y="438" fill="#f2ffab"/>
<rect x="1518" y="438" fill="#fff4a2"/>
<rect x="1524" y="438" fill="#ffdf92"/>
<rect x="1530" y="438" fill="#ffcc85"/>
<rect x="1536" y="438" fill="#ffbb78"/>
<rect x="1542" y="438" fill="#ffad6e"/>
<rect x="1548" y="438" fill="#ffa064"/>
<rect x="1554" y="438" fill="#ff945c"/>
<rect x="1560" y="438" fill="#ff8a54"/>
<rect x="1566" y="438" fill="#ff804d"/>
<rect x="1572" y="438" fill="#ff7746"/>
<rect x="1578" y="438" fill="#ff6f40"/>
<rect x="1584" y="438" fill="#ff683b"/>
<rect x="1590" y="438" fill="#ff6136"/>
<rect x="1596" y="438" fill="#ff5b31"/>
<rect x="1602" y="438" fill="#ff552d"/>
<rect x="1608" y="438" fill="#ff5029"/>
<rect x="1614" y="438" fill="#ff4b26"/>
<rect x="1620" y="438" fill="#ff4622"/>
<rect x="1626" y="438" fill="#ff421f"/>
<rect x="1632" y="438" fill="#ff3d1c"/>
<rect x="1638" y="438" fill="#ff3a19"/>
<rect x="1644" y="438" fill="#ff3616"/>
<rect x="1650" y="438" fill="#ff3214"/>
<rect x="1656" y="438" fill="#ff2f11"/>
<rect x="1662" y="438" fill="#fc2c0f"/>
<rect x="1668" y="438" fill="#f8280c"/>
<rect x="1674" y="438" fill="#f4250a"/>
<rect x="1680" y="438" fill="#f02208"/>
<rect x="1686" y="438" fill="#ec1f06"/>
<rect x="1692" y="438" fill="#e81c05"/>
<rect x="1698" y="438" fill="#e41a03"/>
<rect x="1704" y="438" fill="#e01702"/>
<rect x="1710" y="438" fill="#da1500"/>
<rect x="1716" y="438" fill="#d41300"/>
<rect x="1722" y="438" fill="#ce1000"/>
<rect x="1728" y="438" fill="#c80f00"/>
<rect x="1428" y="444" fill="#00ffcb"/>
<rect x="1434" y="444" fill="#00ffca"/>
<rect x="1440" y="444" fill="#0fffc9"/>
<rect x="1446" y="444" fill="#1fffc8"/>
<rect x="1452" y="444" fill="#30ffc7"/>
<rect x="1458" y="444" fill="#42ffc6"/>
<rect x="1464" y="444" fill="#55ffc5"/>
<rect x="1470" y="444" fill="#68ffc4"/>
<rect x="1476" y="444" fill="#7cffc3"/>
<rect x="1482" y="444" fill="#90ffc2"/>
<rect x="1488" y="444" fill="#a6ffc1"/>
<rect x="1494" y="444" fill="#bcffc0"/>
<rect x="1500" y="444" fill="#d3ffbe"/>
<rect x="1506" y="444" fill="#ebffbd"/>
<rect x="1512" y="444" fill="#fffab8"/>
<rect x="1518" y="444" fill="#ffe3a6"/>
<rect x="1524" y="444" fill="#ffcf96"/>
<rect x="1530" y="444" fill="#ffbe88"/>
<rect x="1536" y="444" fill="#ffae7c"/>
<rect x="1542" y="444" fill="#ffa172"/>
<rect x="1548" y="444" fill="#ff9568"/>
<rect x="1554" y="444" fill="#ff8a5f"/>
<rect x="1560" y="444" fill="#ff8057"/>
<rect x="1566" y="444" fill="#ff7750"/>
<rect x="1572" y="444" fill="#ff6f4a"/>
<rect x="1578" y="444" fill="#ff6744"/>
<rect x="1584" y="444" fill="#ff603e"/>
<rect x="1590" y="444" fill="#ff5a39"/>
<rect x="1596" y="444" fill="#ff5435"/>
<rect x="1602" y="444" fill="#ff4f30"/>
<rect x="1608" y="444" fill="#ff492c"/>
<rect x="1614" y="444" fill="#ff4529"/>
<rect x="1620" y="444" fill="#ff4025"/>
<rect x="1626" y="444" fill="#ff3c22"/>
<rect x="1632" y="444" fill="#ff381f"/>
<rect x="1638" y="444" fill="#ff341c"/>
<rect x="1644" y="444" fill="#ff3119"/>
<rect x="1650" y="444" fill="#ff2e16"/>
<rect x="1656" y="444" fill="#ff2b14"/>
<rect x="1662" y="444" fill="#fc2711"/>
<rect x="1668" y="444" fill="#f8240f"/>
<rect x="1674" y="444" fill="#f4210d"/>
<rect x="1680" y="444" fill="#f01e0b"/>
<rect x="1686" y="444" fill="#ec1b09"/>
<rect x="1692" y="444" fill="#e81907"/>
<rect x="1698" y="444" fill="#e41605"/>
<rect x="1704" y="444" fill="#e01404"/>
<rect x="1710" y="444" fill="#da1202"/>
<rect x="1716" y="444" fill="#d41001"/>
<rect x="1722" y="444" fill="#ce0e00"/>
<rect x="1728" y="444" fill="#c80c00"/>
<rect x="1734" y="444" fill="#c30a00"/>
<rect x="1740" y="444" fill="#bd0900"/>
<rect x="1422" y="450" fill="#00ffda"/>
<rect x="1428" y="450" fill="#00ffd9"/>
<rect x="1434" y="450" fill="#04ffd9"/>
<rect x="1440" y="450" fill="#15ffd8"/>
<rect x="1446" y="450" fill="#26ffd7"/>
<rect x="1452" y="450" fill="#38ffd7"/>
<rect x="1458" y="450" fill="#4bffd6"/>
<rect x="1464" y="450" fill="#5effd5"/>
<rect x="1470" y="450" fill="#73ffd4"/>
<rect x="1476" y="450" fill="#87ffd4"/>
<rect x="1482" y="450" fill="#9dffd3"/>
<rect x="1488" y="450" fill="#b4ffd2"/>
<rect x="1494" y="450" fill="#ccffd1"/>
<rect x="1500" y="450" fill="#e4ffd0"/>
<rect x="1506" y="450" fill="#feffcf"/>
<rect x="1512" y="450" fill="#ffe8bb"/>
<rect x="1518" y="450" fill="#ffd3a9"/>
<rect x="1524" y="450" fill="#ffc09a"/>
<rect x="1530" y="450" fill="#ffb08c"/>
<rect x="1536" y="450" fill="#ffa280"/>
<rect x="1542" y="450" fill="#ff9575"/>
<rect x="1548" y="450" fill="#ff8a6c"/>
<rect x="1554" y="450" fill="#ff8063"/>
<rect x="1560" y="450" fill="#ff775b"/>
<rect x="1566" y="450" fill="#ff6e54"/>
<rect x="1572" y="450" fill="#ff664d"/>
<rect x="1578" y="450" fill="#ff5f47"/>
<rect x="1584" y="450" fill="#ff5942"/>
<rect x="1590" y="450" fill="#ff533d"/>
<rect x="1596" y="450" fill="#ff4d38"/>
<rect x="1602" y="450" fill="#ff4834"/>
<rect x="1608" y="450" fill="#ff4330"/>
<rect x="1614" y="450" fill="#ff3f2c"/>
<rect x="1620" y="450" fill="#ff3b28"/>
<rect x="1626" y="450" fill="#ff3725"/>
<rect x="1632" y="450" fill="#ff3322"/>
<rect x="1638" y="450" fill="#ff2f1f"/>
<rect x="1644" y="450" fill="#ff2c1c"/>
<rect x="1650" y="450" fill="#ff2919"/>
<rect x="1656" y="450" fill="#ff2617"/>
<rect x="1662" y="450" fill="#fc2314"/>
<rect x="1668" y="450" fill="#f82012"/>
<rect x="1674" y="450" fill="#f41d0f"/>
<rect x="1680" y="450" fill="#f01a0d"/>
<rect x="1686" y="450" fill="#ec180b"/>
<rect x="1692" y="450" fill="#e81509"/>
<rect x="1698" y="450" fill="#e41307"/>
<rect x="1704" y="450" fill="#e01106"/>
<rect x="1710" y="450" fill="#da0f04"/>
<rect x="1716" y="450" fill="#d40d03"/>
<rect x="1722" y="450" fill="#ce0b02"/>
<rect x="1728" y="450" fill="#c80900"/>
<rect x="1734" y="450" fill="#c30800"/>
<rect x="1740" y="450" fill="#bd0700"/>
<rect x="1746" y="450" fill="#b70500"/>
<rect x="1752" y="450" fill="#b20400"/>
<rect x="1422" y="456" fill="#00ffe9"/>
<rect x="1428" y="456" fill="#00ffe9"/>
<rect x="1434" y="456" fill="#0affe9"/>
<rect x="1440" y="456" fill="#1cffe8"/>
<rect x="1446" y="456" fill="#2effe8"/>
<rect x="1452" y="456" fill="#41ffe7"/>
<rect x="1458" y="456" fill="#55ffe7"/>
<rect x="1464" y="456" fill="#69ffe7"/>
<rect x="1470" y="456" fill="#7effe6"/>
<rect x="1476" y="456" fill="#95ffe6"/>
<rect x="1482" y="456" fill="#acffe5"/>
<rect x="1488" y="456" fill="#c4ffe5"/>
<rect x="1494" y="456" fill="#ddffe4"/>
<rect x="1500" y="456" fill="#f7ffe4"/>
<rect x="1506" y="456" fill="#ffedd3"/>
<rect x="1512" y="456" fill="#ffd6be"/>
<rect x="1518" y="456" fill="#ffc3ad"/>
<rect x="1524" y="456" fill="#ffb29d"/>
<rect x="1530" y="456" fill="#ffa390"/>
<rect x="1536" y="456" fill="#ff9684"/>
<rect x="1542" y="456" fill="#ff8a79"/>
<rect x="1548" y="456" fill="#ff806f"/>
<rect x="1554" y="456" fill="#ff7666"/>
<rect x="1560" y="456" fill="#ff6d5f"/>
<rect x="1566" y="456" fill="#ff6657"/>
<rect x="1572" y="456" fill="#ff5e51"/>
<rect x="1578" y="456" fill="#ff584b"/>
<rect x="1584" y="456" fill="#ff5245"/>
<rect x="1590" y="456" fill="#ff4c40"/>
<rect x="1596" y="456" fill="#ff473b"/>
<rect x="1602" y="456" fill="#ff4237"/>
<rect x="1608" y="456" fill="#ff3d33"/>
<rect x="1614" y="456" fill="#ff392f"/>
<rect x="1620" y="456" fill="#ff352b"/>
<rect x="1626" y="456" fill="#ff3128"/>
<rect x="1632" y="456" fill="#ff2e24"/>
<rect x="1638" y="456" fill="#ff2a21"/>
<rect x="1644" y="456" fill="#ff271f"/>
<rect x="1650" y="456" fill="#ff241c"/>
<rect x="1656" y="456" fill="#ff2219"/>
<rect x="1662" y="456" fill="#fc1f17"/>
<rect x="1668" y="456" fill="#f81c14"/>
<rect x="1674" y="456" fill="#f41912"/>
<rect x="1680" y="456" fill="#f0160f"/>
<rect x="1686" y="456" fill="#ec140d"/>
<rect x="1692" y="456" fill="#e8120b"/>
<rect x="1698" y="456" fill="#e41009"/>
<rect x="1704" y="456" fill="#e00e08"/>
<rect x="1710" y="456" fill="#da0c06"/>
<rect x="1716" y="456" fill="#d40a05"/>
<rect x="1722" y="456" fill="#ce0803"/>
<rect x="1728" y="456" fill="#c80702"/>
<rect x="1734" y="456" fill="#c30601"/>
<rect x="1740" y="456" fill="#bd0400"/>
<rect x="1746" y="456" fill="#b70300"/>
<rect x="1752" y="456" fill="#b20200"/>
<rect x="1758" y="456" fill="#b00100"/>
<rect x="1416" y="462" fill="#00fffa"/>
<rect x="1422" y="462" fill="#00fffa"/>
<rect x="1428" y="462" fill="#00fffa"/>
<rect x="1434" y="462" fill="#11fffa"/>
<rect x="1440" y="462" fill="#23fffa"/>
<rect x="1446" y="462" fill="#36fffa"/>
<rect x="1452" y="462" fill="#4afffa"/>
<rect x="1458" y="462" fill="#5ffffa"/>
<rect x="1464" y="462" fill="#75fffa"/>
<rect x="1470" y="462" fill="#8bfff9"/>
<rect x="1476" y="462" fill="#a3fff9"/>
<rect x="1482" y="462" fill="#bbfff9"/>
<rect x="1488" y="462" fill="#d5fff9"/>
<rect x="1494" y="462" fill="#f0fff9"/>
<rect x="1500" y="462" fill="#fff3ed"/>
<rect x="1506" y="462" fill="#ffdbd5"/>
<rect x="1512" y="462" fill="#ffc6c1"/>
<rect x="1518" y="462" fill="#ffb4b0"/>
<rect x="1524" y="462" fill="#ffa5a0"/>
<rect x="1530" y="462" fill="#ff9793"/>
<rect x="1536" y="462" fill="#ff8b87"/>
<rect x="1542" y="462" fill="#ff807c"/>
<rect x="1548" y="462" fill="#ff7673"/>
<rect x="1554" y="462" fill="#ff6d6a"/>
<rect x="1560" y="462" fill="#ff6562"/>
<rect x="1566" y="462" fill="#ff5d5b"/>
<rect x="1572" y="462" fill="#ff5754"/>
<rect x="1578" y="462" fill="#ff504e"/>
<rect x="1584" y="462" fill="#ff4b48"/>
<rect x="1590" y="462" fill="#ff4543"/>
<rect x="1596" y="462" fill="#ff403e"/>
<rect x="1602" y="462" fill="#ff3c3a"/>
<rect x="1608" y="462" fill="#ff3736"/>
<rect x="1614" y="462" fill="#ff3332"/>
<rect x="1620" y="462" fill="#ff302e"/>
<rect x="1626" y="462" fill="#ff2c2a"/>
<rect x="1632" y="462" fill="#ff2927"/>
<rect x="1638" y="462" fill="#ff2624"/>
<rect x="1644" y="462" fill="#ff2321"/>
<rect x="1650" y="462" fill="#ff201e"/>
<rect x="1656" y="462" fill="#ff1d1c"/>
<rect x="1662" y="462" fill="#fc1a19"/>
<rect x="1668" y="462" fill="#f81816"/>
<rect x="1674" y="462" fill="#f41514"/>
<rect x="1680" y="462" fill="#f01312"/>
<rect x="1686" y="462" fill="#ec100f"/>
<rect x="1692" y="462" fill="#e80e0d"/>
<rect x="1698" y="462" fill="#e40c0c"/>
<rect x="1704" y="462" fill="#e00b0a"/>
<rect x="1710" y="462" fill="#da0908"/>
<rect x="1716" y="462" fill="#d40706"/>
<rect x="1722" y="462" fill="#ce0605"/>
<rect x="1728" y="462" fill="#c80404"/>
<rect x="1734" y="462" fill="#c30303"/>
<rect x="1740" y="462" fill="#bd0201"/>
<rect x="1746" y="462" fill="#b70100"/>
<rect x="1752" y="462" fill="#b20000"/>
<rect x="1758" y="462" fill="#b00000"/>
<rect x="1416" y="468" fill="#00f3ff"/>
<rect x="1422" y="468" fill="#00f3ff"/>
<rect x="1428" y="468" fill="#05f2ff"/>
<rect x="1434" y="468" fill="#17f2ff"/>
<rect x="1440" y="468" fill="#29f2ff"/>
<rect x="1446" y="468" fill="#3cf1ff"/>
<rect x="1452" y="468" fill="#50f1ff"/>
<rect x="1458" y="468" fill="#65f1ff"/>
<rect x="1464" y="468" fill="#7af1ff"/>
<rect x="1470" y="468" fill="#91f0ff"/>
<rect x="1476" y="468" fill="#a8f0ff"/>
<rect x="1482" y="468" fill="#c0efff"/>
<rect x="1488" y="468" fill="#daefff"/>
<rect x="1494" y="468" fill="#f4efff"/>
<rect x="1500" y="468" fill="#ffdfef"/>
<rect x="1506" y="468" fill="#ffc9d8"/>
<rect x="1512" y="468" fill="#ffb6c4"/>
<rect x="1518" y="468" fill="#ffa6b3"/>
<rect x="1524" y="468" fill="#ff98a4"/>
<rect x="1530" y="468" fill="#ff8b96"/>
<rect x="1536" y="468" fill="#ff7f8a"/>
<rect x="1542" y="468" fill="#ff7580"/>
<rect x="1548" y="468" fill="#ff6c76"/>
<rect x="1554" y="468" fill="#ff646d"/>
<rect x="1560" y="468" fill="#ff5c65"/>
<rect x="1566" y="468" fill="#ff555e"/>
<rect x="1572" y="468" fill="#ff4f57"/>
<rect x="1578" y="468" fill="#ff4951"/>
<rect x="1584" y="468" fill="#ff444b"/>
<rect x="1590" y="468" fill="#ff3f46"/>
<rect x="1596" y="468" fill="#ff3a41"/>
<rect x="1602" y="468" fill="#ff363d"/>
<rect x="1608" y="468" fill="#ff3238"/>
<rect x="1614" y="468" fill="#ff2e34"/>
<rect x="1620" y="468" fill="#ff2a31"/>
<rect x="1626" y="468" fill="#ff272d"/>
<rect x="1632" y="468" fill="#ff242a"/>
<rect x="1638" y="468" fill="#ff2127"/>
<rect x="1644" y="468" fill="#ff1e24"/>
<rect x="1650" y="468" fill="#ff1b21"/>
<rect x="1656" y="468" fill="#ff191e"/>
<rect x="1662" y="468" fill="#fc161c"/>
<rect x="1668" y="468" fill="#f81419"/>
<rect x="1674" y="468" fill="#f41116"/>
<rect x="1680" y="468" fill="#f00f14"/>
<rect x="1686" y="468" fill="#ec0d12"/>
<rect x="1692" y="468" fill="#e80b0f"/>
<rect x="1698" y="468" fill="#e4090e"/>
<rect x="1704" y="468" fill="#e0080c"/>
<rect x="1710" y="468" fill="#da060a"/>
<rect x="1716" y="468" fill="#d40508"/>
<rect x="1722" y="468" fill="#ce0307"/>
<rect x="1728" y="468" fill="#c80205"/>
<rect x="1734" y="468" fill="#c30104"/>
<rect x="1740" y="468" fill="#bd0003"/>
<rect x="1746" y="468" fill="#b70002"/>
<rect x="1752" y="468" fill="#b20001"/>
<rect x="1758" y="468" fill="#b00000"/>
<rect x="1416" y="474" fill="#00e3ff"/>
<rect x="1422" y="474" fill="#00e2ff"/>
<rect x="1428" y="474" fill="#0be1ff"/>
<rect x="1434" y="474" fill="#1ce1ff"/>
<rect x="1440" y="474" fill="#2ee0ff"/>
<rect x="1446" y="474" fill="#41e0ff"/>
<rect x="1452" y="474" fill="#54dfff"/>
<rect x="1458" y="474" fill="#68deff"/>
<rect x="1464" y="474" fill="#7ddeff"/>
<rect x="1470" y="474" fill="#93ddff"/>
<rect x="1476" y="474" fill="#a9dcff"/>
<rect x="1482" y="474" fill="#c1dbff"/>
<rect x="1488" y="474" fill="#d9dbff"/>
<rect x="1494" y="474" fill="#f3daff"/>
<rect x="1500" y="474" fill="#ffcdf1"/>
<rect x="1506" y="474" fill="#ffb9da"/>
<rect x="1512" y="474" fill="#ffa8c7"/>
<rect x="1518" y="474" fill="#ff98b6"/>
<rect x="1524" y="474" fill="#ff8ba7"/>
<rect x="1530" y="474" fill="#ff7f99"/>
<rect x="1536" y="474" fill="#ff758d"/>
<rect x="1542" y="474" fill="#ff6b83"/>
<rect x="1548" y="474" fill="#ff6379"/>
<rect x="1554" y="474" fill="#ff5b70"/>
<rect x="1560" y="474" fill="#ff5468"/>
<rect x="1566" y="474" fill="#ff4e61"/>
<rect x="1572" y="474" fill="#ff485a"/>
<rect x="1578" y="474" fill="#ff4254"/>
<rect x="1584" y="474" fill="#ff3d4e"/>
<rect x="1590" y="474" fill="#ff3849"/>
<rect x="1596" y="474" fill="#ff3444"/>
<rect x="1602" y="474" fill="#ff3040"/>
<rect x="1608" y="474" fill="#ff2c3b"/>
<rect x="1614" y="474" fill="#ff2837"/>
<rect x="1620" y="474" fill="#ff2533"/>
<rect x="1626" y="474" fill="#ff2230"/>
<rect x="1632" y="474" fill="#ff1f2d"/>
<rect x="1638" y="474" fill="#ff1c29"/>
<rect x="1644" y="474" fill="#ff1a26"/>
<rect x="1650" y="474" fill="#ff1724"/>
<rect x="1656" y="474" fill="#ff1521"/>
<rect x="1662" y="474" fill="#fc121e"/>
<rect x="1668" y="474" fill="#f8101b"/>
<rect x="1674" y="474" fill="#f40e18"/>
<rect x="1680" y="474" fill="#f00c16"/>
<rect x="1686" y="474" fill="#ec0a14"/>
<rect x="1692" y="474" fill="#e80812"/>
<rect x="1698" y="474" fill="#e40610"/>
<rect x="1704" y="474" fill="#e0050e"/>
<rect x="1710" y="474" fill="#da030c"/>
<rect x="1716" y="474" fill="#d4020a"/>
<rect x="1722" y="474" fill="#ce0108"/>
<rect x="1728" y="474" fill="#c80007"/>
<rect x="1734" y="474" fill="#c30006"/>
<rect x="1740" y="474" fill="#bd0004"/>
<rect x="1746" y="474" fill="#b70003"/>
<rect x="1752" y="474" fill="#b20002"/>
<rect x="1410" y="480" fill="#00d4ff"/>
<rect x="1416" y="480" fill="#00d3ff"/>
<rect x="1422" y="480" fill="#00d2ff"/>
<rect x="1428" y="480" fill="#10d1ff"/>
<rect x="1434" y="480" fill="#21d1ff"/>
<rect x="1440" y="480" fill="#33d0ff"/>
<rect x="1446" y="480" fill="#45cfff"/>
<rect x="1452" y="480" fill="#58ceff"/>
<rect x="1458" y="480" fill="#6bcdff"/>
<rect x="1464" y="480" fill="#7fccff"/>
<rect x="1470" y="480" fill="#95cbff"/>
<rect x="1476" y="480" fill="#abcaff"/>
<rect x="1482" y="480" fill="#c1c9ff"/>
<rect x="1488" y="480" fill="#d9c8ff"/>
<rect x="1494" y="480" fill="#f2c6ff"/>
<rect x="1500" y="480" fill="#ffbcf3"/>
<rect x="1506" y="480" fill="#ffa9dd"/>
<rect x="1512" y="480" fill="#ff99c9"/>
<rect x="1518" y="480" fill="#ff8bb8"/>
<rect x="1524" y="480" fill="#ff7faa"/>
<rect x="1530" y="480" fill="#ff749c"/>
<rect x="1536" y="480" fill="#ff6b90"/>
<rect x="1542" y="480" fill="#ff6286"/>
<rect x="1548" y="480" fill="#ff5a7c"/>
<rect x="1554" y="480" fill="#ff5373"/>
<rect x="1560" y="480" fill="#ff4c6b"/>
<rect x="1566" y="480" fill="#ff4664"/>
<rect x="1572" y="480" fill="#ff405d"/>
<rect x="1578" y="480" fill="#ff3b57"/>
<rect x="1584" y="480" fill="#ff3651"/>
<rect x="1590" y="480" fill="#ff324c"/>
<rect x="1596" y="480" fill="#ff2e47"/>
<rect x="1602" y="480" fill="#ff2a42"/>
<rect x="1608" y="480" fill="#ff273e"/>
<rect x="1614" y="480" fill="#ff233a"/>
<rect x="1620" y="480" fill="#ff2036"/>
<rect x="1626" y="480" fill="#ff1d33"/>
<rect x="1632" y="480" fill="#ff1a2f"/>
<rect x="1638" y="480" fill="#ff182c"/>
<rect x="1644" y="480" fill="#ff1529"/>
<rect x="1650" y="480" fill="#ff1326"/>
<rect x="1656" y="480" fill="#ff1123"/>
<rect x="1662" y="480" fill="#fc0e20"/>
<rect x="1668" y="480" fill="#f80c1d"/>
<rect x="1674" y="480" fill="#f40a1b"/>
<rect x="1680" y="480" fill="#f00818"/>
<rect x="1686" y="480" fill="#ec0616"/>
<rect x="1692" y="480" fill="#e80514"/>
<rect x="1698" y="480" fill="#e40311"/>
<rect x="1704" y="480" fill="#e00210"/>
<rect x="1710" y="480" fill="#da000e"/>
<rect x="1716" y="480" fill="#d4000c"/>
<rect x="1722" y="480" fill="#ce000a"/>
<rect x="1728" y="480" fill="#c80009"/>
<rect x="1734" y="480" fill="#c30007"/>
<rect x="1740" y="480" fill="#bd0006"/>
<rect x="1410" y="486" fill="#00c5ff"/>
<rect x="1416" y="486" fill="#00c4ff"/>
<rect x="1422" y="486" fill="#05c3ff"/>
<rect x="1428" y="486" fill="#15c2ff"/>
<rect x="1434" y="486" fill="#26c1ff"/>
<rect x="1440" y="486" fill="#37c0ff"/>
<rect x="1446" y="486" fill="#49bfff"/>
<rect x="1452" y="486" fill="#5bbeff"/>
<rect x="1458" y="486" fill="#6ebdff"/>
<rect x="1464" y="486" fill="#82bbff"/>
<rect x="1470" y="486" fill="#96baff"/>
<rect x="1476" y="486" fill="#acb9ff"/>
<rect x="1482" y="486" fill="#c2b7ff"/>
<rect x="1488" y="486" fill="#d9b6ff"/>
<rect x="1494" y="486" fill="#f1b4ff"/>
<rect x="1500" y="486" fill="#ffabf5"/>
<rect x="1506" y="486" fill="#ff9adf"/>
<rect x="1512" y="486" fill="#ff8ccc"/>
<rect x="1518" y="486" fill="#ff7fbb"/>
<rect x="1524" y="486" fill="#ff74ac"/>
<rect x="1530" y="486" fill="#ff6a9f"/>
<rect x="1536" y="486" fill="#ff6193"/>
<rect x="1542" y="486" fill="#ff5889"/>
<rect x="1548" y="486" fill="#ff517f"/>
<rect x="1554" y="486" fill="#ff4a76"/>
<rect x="1560" y="486" fill="#ff446e"/>
<rect x="1566" y="486" fill="#ff3f67"/>
<rect x="1572" y="486" fill="#ff3960"/>
<rect x="1578" y="486" fill="#ff355a"/>
<rect x="1584" y="486" fill="#ff3054"/>
<rect x="1590" y="486" fill="#ff2c4f"/>
<rect x="1596" y="486" fill="#ff284a"/>
<rect x="1602" y="486" fill="#ff2545"/>
<rect x="1608" y="486" fill="#ff2141"/>
<rect x="1614" y="486" fill="#ff1e3d"/>
<rect x="1620" y="486" fill="#ff1b39"/>
<rect x="1626" y="486" fill="#ff1835"/>
<rect x="1632" y="486" fill="#ff1632"/>
<rect x="1638" y="486" fill="#ff132e"/>
<rect x="1644" y="486" fill="#ff112b"/>
<rect x="1650" y="486" fill="#ff0f28"/>
<rect x="1656" y="486" fill="#ff0c26"/>
<rect x="1662" y="486" fill="#fc0a23"/>
<rect x="1668" y="486" fill="#f80820"/>
<rect x="1674" y="486" fill="#f4061d"/>
<rect x="1680" y="486" fill="#f0051a"/>
<rect x="1686" y="486" fill="#ec0318"/>
<rect x="1692" y="486" fill="#e80216"/>
<rect x="1698" y="486" fill="#e40013"/>
<rect x="1704" y="486" fill="#e00011"/>
<rect x="1710" y="486" fill="#da000f"/>
<rect x="1716" y="486" fill="#d4000d"/>
<rect x="1722" y="486" fill="#ce000c"/>
<rect x="1410" y="492" fill="#00b8ff"/>
<rect x="1416" y="492" fill="#00b6ff"/>
<rect x="1422" y="492" fill="#0ab5ff"/>
<rect x="1428" y="492" fill="#1ab4ff"/>
<rect x="1434" y="492" fill="#2ab3ff"/>
<rect x="1440" y="492" fill="#3bb1ff"/>
<rect x="1446" y="492" fill="#4cb0ff"/>
<rect x="1452" y="492" fill="#5eafff"/>
<rect x="1458" y="492" fill="#71adff"/>
<rect x="1464" y="492" fill="#84acff"/>
<rect x="1470" y="492" fill="#98aaff"/>
<rect x="1476" y="492" fill="#ada8ff"/>
<rect x="1482" y="492" fill="#c2a7ff"/>
<rect x="1488" y="492" fill="#d9a5ff"/>
<rect x="1494" y="492" fill="#f0a3ff"/>
<rect x="1500" y="492" fill="#ff9cf6"/>
<rect x="1506" y="492" fill="#ff8ce1"/>
<rect x="1512" y="492" fill="#ff7fce"/>
<rect x="1518" y="492" fill="#ff73be"/>
<rect x="1524" y="492" fill="#ff69af"/>
<rect x="1530" y="492" fill="#ff5fa2"/>
<rect x="1536" y="492" fill="#ff5796"/>
<rect x="1542" y="492" fill="#ff508c"/>
<rect x="1548" y="492" fill="#ff4982"/>
<rect x="1554" y="492" fill="#ff4279"/>
<rect x="1560" y="492" fill="#ff3d71"/>
<rect x="1566" y="492" fill="#ff376a"/>
<rect x="1572" y="492" fill="#ff3363"/>
<rect x="1578" y="492" fill="#ff2e5d"/>
<rect x="1584" y="492" fill="#ff2a57"/>
<rect x="1590" y="492" fill="#ff2652"/>
<rect x="1596" y="492" fill="#ff224d"/>
<rect x="1602" y="492" fill="#ff1f48"/>
<rect x="1608" y="492" fill="#ff1c43"/>
<rect x="1614" y="492" fill="#ff193f"/>
<rect x="1620" y="492" fill="#ff163b"/>
<rect x="1626" y="492" fill="#ff1438"/>
<rect x="1632" y="492" fill="#ff1134"/>
<rect x="1638" y="492" fill="#ff0f31"/>
<rect x="1644" y="492" fill="#ff0d2e"/>
<rect x="1650" y="492" fill="#ff0a2b"/>
<rect x="1656" y="492" fill="#ff0828"/>
<rect x="1662" y="492" fill="#fc0625"/>
<rect x="1668" y="492" fill="#f80522"/>
<rect x="1674" y="492" fill="#f4031f"/>
<rect x="1680" y="492" fill="#f0011c"/>
<rect x="1686" y="492" fill="#ec001a"/>
<rect x="1692" y="492" fill="#e80018"/>
<rect x="1698" y="492" fill="#e40015"/>
<rect x="1704" y="492" fill="#e00013"/>
<rect x="1710" y="492" fill="#da0011"/>
<rect x="1404" y="498" fill="#00acff"/>
<rect x="1410" y="498" fill="#00aaff"/>
<rect x="1416" y="498" fill="#00a9ff"/>
<rect x="1422" y="498" fill="#0fa8ff"/>
<rect x="1428" y="498" fill="#1ea6ff"/>
<rect x="1434" y="498" fill="#2ea5ff"/>
<rect x="1440" y="498" fill="#3fa3ff"/>
<rect x="1446" y="498" fill="#50a2ff"/>
<rect x="1452" y="498" fill="#61a0ff"/>
<rect x="1458" y="498" fill="#739eff"/>
<rect x="1464" y="498" fill="#869dff"/>
<rect x="1470" y="498" fill="#9a9bff"/>
<rect x="1476" y="498" fill="#ae99ff"/>
<rect x="1482" y="498" fill="#c397ff"/>
<rect x="1488" y="498" fill="#d995ff"/>
<rect x="1494" y="498" fill="#ef93ff"/>
<rect x="1500" y="498" fill="#ff8df8"/>
<rect x="1506" y="498" fill="#ff7fe3"/>
<rect x="1512" y="498" fill="#ff72d0"/>
<rect x="1518" y="498" fill="#ff68c0"/>
<rect x="1524" y="498" fill="#ff5eb2"/>
<rect x="1530" y="498" fill="#ff56a5"/>
<rect x="1536" y="498" fill="#ff4e99"/>
<rect x="1542" y="498" fill="#ff478e"/>
<rect x="1548" y="498" fill="#ff4085"/>
<rect x="1554" y="498" fill="#ff3b7c"/>
<rect x="1560" y="498" fill="#ff3574"/>
<rect x="1566" y="498" fill="#ff306d"/>
<rect x="1572" y="498" fill="#ff2c66"/>
<rect x="1578" y="498" fill="#ff2860"/>
<rect x="1584" y="498" fill="#ff245a"/>
<rect x="1590" y="498" fill="#ff2054"/>
<rect x="1596" y="498" fill="#ff1d4f"/>
<rect x="1602" y="498" fill="#ff1a4a"/>
<rect x="1608" y="498" fill="#ff1746"/>
<rect x="1614" y="498" fill="#ff1442"/>
<rect x="1620" y="498" fill="#ff113e"/>
<rect x="1626" y="498" fill="#ff0f3a"/>
<rect x="1632" y="498" fill="#ff0d37"/>
<rect x="1638" y="498" fill="#ff0a33"/>
<rect x="1644" y="498" fill="#ff0830"/>
<rect x="1650" y="498" fill="#ff062d"/>
<rect x="1656" y="498" fill="#ff042a"/>
<rect x="1662" y="498" fill="#fc0327"/>
<rect x="1668" y="498" fill="#f80124"/>
<rect x="1674" y="498" fill="#f40021"/>
<rect x="1680" y="498" fill="#f0001e"/>
<rect x="1686" y="498" fill="#ec001c"/>
<rect x="1692" y="498" fill="#e80019"/>
<rect x="1698" y="498" fill="#e40017"/>
<rect x="1404" y="504" fill="#009fff"/>
<rect x="1410" y="504" fill="#009eff"/>
<rect x="1416" y="504" fill="#059cff"/>
<rect x="1422" y="504" fill="#149bff"/>
<rect x="1428" y="504" fill="#2399ff"/>
<rect x="1434" y="504" fill="#3298ff"/>
<rect x="1440" y="504" fill="#4296ff"/>
<rect x="1446" y="504" fill="#5394ff"/>
<rect x="1452" y="504" fill="#6492ff"/>
<rect x="1458" y="504" fill="#7691ff"/>
<rect x="1464" y="504" fill="#888fff"/>
<rect x="1470" y="504" fill="#9b8dff"/>
<rect x="1476" y="504" fill="#af8bff"/>
<rect x="1482" y="504" fill="#c388ff"/>
<rect x="1488" y="504" fill="#d886ff"/>
<rect x="1494" y="504" fill="#ee84ff"/>
<rect x="1500" y="504" fill="#ff7ef9"/>
<rect x="1506" y="504" fill="#ff72e5"/>
<rect x="1512" y="504" fill="#ff67d2"/>
<rect x="1518" y="504" fill="#ff5dc2"/>
<rect x="1524" y="504" fill="#ff54b4"/>
<rect x="1530" y="504" fill="#ff4ca7"/>
<rect x="1536" y="504" fill="#ff459c"/>
<rect x="1542" y="504" fill="#ff3e91"/>
<rect x="1548" y="504" fill="#ff3988"/>
<rect x="1554" y="504" fill="#ff337f"/>
<rect x="1560" y="504" fill="#ff2e77"/>
<rect x="1566" y="504" fill="#ff2a6f"/>
<rect x="1572" y="504" fill="#ff2669"/>
<rect x="1578" y="504" fill="#ff2262"/>
<rect x="1584" y="504" fill="#ff1e5c"/>
<rect x="1590" y="504" fill="#ff1b57"/>
<rect x="1596" y="504" fill="#ff1752"/>
<rect x="1602" y="504" fill="#ff154d"/>
<rect x="1608" y="504" fill="#ff1249"/>
<rect x="1614" y="504" fill="#ff0f44"/>
<rect x="1620" y="504" fill="#ff0d40"/>
<rect x="1626" y="504" fill="#ff0a3d"/>
<rect x="1632" y="504" fill="#ff0839"/>
<rect x="1638" y="504" fill="#ff0636"/>
<rect x="1644" y="504" fill="#ff0433"/>
<rect x="1650" y="504" fill="#ff0230"/>
<rect x="1656" y="504" fill="#ff012d"/>
<rect x="1662" y="504" fill="#fc0029"/>
<rect x="1668" y="504" fill="#f80026"/>
<rect x="1674" y="504" fill="#f40023"/>
<rect x="1680" y="504" fill="#f00020"/>
<rect x="1686" y="504" fill="#ec001e"/>
<rect x="1404" y="510" fill="#0094ff"/>
<rect x="1410" y="510" fill="#0092ff"/>
<rect x="1416" y="510" fill="#0a90ff"/>
<rect x="1422" y="510" fill="#188fff"/>
<rect x="1428" y="510" fill="#278dff"/>
<rect x="1434" y="510" fill="#368bff"/>
<rect x="1440" y="510" fill="#4689ff"/>
<rect x="1446" y="510" fill="#5687ff"/>
<rect x="1452" y="510" fill="#6785ff"/>
<rect x="1458" y="510" fill="#7883ff"/>
<rect x="1464" y="510" fill="#8a81ff"/>
<rect x="1470" y="510" fill="#9d7fff"/>
<rect x="1476" y="510" fill="#b07dff"/>
<rect x="1482" y="510" fill="#c47aff"/>
<rect x="1488" y="510" fill="#d878ff"/>
<rect x="1494" y="510" fill="#ed76ff"/>
<rect x="1500" y="510" fill="#ff71fb"/>
<rect x="1506" y="510" fill="#ff65e6"/>
<rect x="1512" y="510" fill="#ff5bd4"/>
<rect x="1518" y="510" fill="#ff52c5"/>
<rect x="1524" y="510" fill="#ff4ab6"/>
<rect x="1530" y="510" fill="#ff43aa"/>
<rect x="1536" y="510" fill="#ff3c9e"/>
<rect x="1542" y="510" fill="#ff3694"/>
<rect x="1548" y="510" fill="#ff318a"/>
<rect x="1554" y="510" fill="#ff2c82"/>
<rect x="1560" y="510" fill="#ff2779"/>
<rect x="1566" y="510" fill="#ff2372"/>
<rect x="1572" y="510" fill="#ff1f6b"/>
<rect x="1578" y="510" fill="#ff1c65"/>
<rect x="1584" y="510" fill="#ff185f"/>
<rect x="1590" y="510" fill="#ff155a"/>
<rect x="1596" y="510" fill="#ff1254"/>
<rect x="1602" y="510" fill="#ff0f50"/>
<rect x="1608" y="510" fill="#ff0d4b"/>
<rect x="1614" y="510" fill="#ff0a47"/>
<rect x="1620" y="510" fill="#ff0843"/>
<rect x="1626" y="510" fill="#ff063f"/>
<rect x="1632" y="510" fill="#ff043b"/>
<rect x="1638" y="510" fill="#ff0238"/>
<rect x="1644" y="510" fill="#ff0035"/>
<rect x="1650" y="510" fill="#ff0032"/>
<rect x="1656" y="510" fill="#ff002f"/>
<rect x="1662" y="510" fill="#fc002c"/>
<rect x="1668" y="510" fill="#f80028"/>
<rect x="1398" y="516" fill="#008aff"/>
<rect x="1404" y="516" fill="#0088ff"/>
<rect x="1410" y="516" fill="#0187ff"/>
<rect x="1416" y="516" fill="#0e85ff"/>
<rect x="1422" y="516" fill="#1c83ff"/>
<rect x="1428" y="516" fill="#2b81ff"/>
<rect x="1434" y="516" fill="#3a7fff"/>
<rect x="1440" y="516" fill="#497dff"/>
<rect x="1446" y="516" fill="#597bff"/>
<rect x="1452" y="516" fill="#6a79ff"/>
<rect x="1458" y="516" fill="#7b77ff"/>
<rect x="1464" y="516" fill="#8c75ff"/>
<rect x="1470" y="516" fill="#9e72ff"/>
<rect x="1476" y="516" fill="#b170ff"/>
<rect x="1482" y="516" fill="#c46dff"/>
<rect x="1488" y="516" fill="#d86bff"/>
<rect x="1494" y="516" fill="#ed68ff"/>
<rect x="1500" y="516" fill="#ff64fc"/>
<rect x="1506" y="516" fill="#ff5ae8"/>
<rect x="1512" y="516" fill="#ff50d6"/>
<rect x="1518" y="516" fill="#ff48c7"/>
<rect x="1524" y="516" fill="#ff41b9"/>
<rect x="1530" y="516" fill="#ff3aac"/>
<rect x="1536" y="516" fill="#ff34a1"/>
<rect x="1542" y="516" fill="#ff2e96"/>
<rect x="1548" y="516" fill="#ff298d"/>
<rect x="1554" y="516" fill="#ff2584"/>
<rect x="1560" y="516" fill="#ff217c"/>
<rect x="1566" y="516" fill="#ff1d75"/>
<rect x="1572" y="516" fill="#ff196e"/>
<rect x="1578" y="516" fill="#ff1667"/>
<rect x="1584" y="516" fill="#ff1362"/>
<rect x="1590" y="516" fill="#ff105c"/>
<rect x="1596" y="516" fill="#ff0d57"/>
<rect x="1602" y="516" fill="#ff0a52"/>
<rect x="1608" y="516" fill="#ff084e"/>
<rect x="1614" y="516" fill="#ff0649"/>
<rect x="1620" y="516" fill="#ff0445"/>
<rect x="1626" y="516" fill="#ff0241"/>
<rect x="1632" y="516" fill="#ff003e"/>
<rect x="1638" y="516" fill="#ff003a"/>
<rect x="1644" y="516" fill="#ff0037"/>
<rect x="1650" y="516" fill="#ff0034"/>
<rect x="1656" y="516" fill="#ff0031"/>
<rect x="1398" y="522" fill="#007fff"/>
<rect x="1404" y="522" fill="#007dff"/>
<rect x="1410" y="522" fill="#057cff"/>
<rect x="1416" y="522" fill="#137aff"/>
<rect x="1422" y="522" fill="#2078ff"/>
<rect x="1428" y="522" fill="#2f76ff"/>
<rect x="1434" y="522" fill="#3d74ff"/>
<rect x="1440" y="522" fill="#4c72ff"/>
<rect x="1446" y="522" fill="#5c6fff"/>
<rect x="1452" y="522" fill="#6c6dff"/>
<rect x="1458" y="522" fill="#7d6bff"/>
<rect x="1464" y="522" fill="#8e69ff"/>
<rect x="1470" y="522" fill="#9f66ff"/>
<rect x="1476" y="522" fill="#b263ff"/>
<rect x="1482" y="522" fill="#c461ff"/>
<rect x="1488" y="522" fill="#d85eff"/>
<rect x="1494" y="522" fill="#ec5bff"/>
<rect x="1500" y="522" fill="#ff58fd"/>
<rect x="1506" y="522" fill="#ff4eea"/>
<rect x="1512" y="522" fill="#ff46d8"/>
<rect x="1518" y="522" fill="#ff3ec9"/>
<rect x="1524" y="522" fill="#ff37bb"/>
<rect x="1530" y="522" fill="#ff31ae"/>
<rect x="1536" y="522" fill="#ff2ca3"/>
<rect x="1542" y="522" fill="#ff2799"/>
<rect x="1548" y="522" fill="#ff228f"/>
<rect x="1554" y="522" fill="#ff1e87"/>
<rect x="1560" y="522" fill="#ff1a7f"/>
<rect x="1566" y="522" fill="#ff1677"/>
<rect x="1572" y="522" fill="#ff1370"/>
<rect x="1578" y="522" fill="#ff106a"/>
<rect x="1584" y="522" fill="#ff0d64"/>
<rect x="1590" y="522" fill="#ff0a5f"/>
<rect x="1596" y="522" fill="#ff0859"/>
<rect x="1602" y="522" fill="#ff0654"/>
<rect x="1608" y="522" fill="#ff0350"/>
<rect x="1614" y="522" fill="#ff014c"/>
<rect x="1620" y="522" fill="#ff0048"/>
<rect x="1626" y="522" fill="#ff0044"/>
<rect x="1632" y="522" fill="#ff0040"/>
<rect x="1638" y="522" fill="#ff003d"/>
<rect x="1644" y="522" fill="#ff0039"/>
<rect x="1398" y="528" fill="#0075ff"/>
<rect x="1404" y="528" fill="#0073ff"/>
<rect x="1410" y="528" fill="#0971ff"/>
<rect x="1416" y="528" fill="#176fff"/>
<rect x="1422" y="528" fill="#246dff"/>
<rect x="1428" y="528" fill="#326bff"/>
<rect x="1434" y="528" fill="#4169ff"/>
<rect x="1440" y="528" fill="#5067ff"/>
<rect x="1446" y="528" fill="#5f64ff"/>
<rect x="1452" y="528" fill="#6e62ff"/>
<rect x="1458" y="528" fill="#7f60ff"/>
<rect x="1464" y="528" fill="#8f5dff"/>
<rect x="1470" y="528" fill="#a15aff"/>
<rect x="1476" y="528" fill="#b258ff"/>
<rect x="1482" y="528" fill="#c555ff"/>
<rect x="1488" y="528" fill="#d852ff"/>
<rect x="1494" y="528" fill="#eb4fff"/>
<rect x="1500" y="528" fill="#ff4cfe"/>
<rect x="1506" y="528" fill="#ff43eb"/>
<rect x="1512" y="528" fill="#ff3cda"/>
<rect x="1518" y="528" fill="#ff35cb"/>
<rect x="1524" y="528" fill="#ff2fbd"/>
<rect x="1530" y="528" fill="#ff29b1"/>
<rect x="1536" y="528" fill="#ff24a5"/>
<rect x="1542" y="528" fill="#ff1f9b"/>
<rect x="1548" y="528" fill="#ff1b92"/>
<rect x="1554" y="528" fill="#ff1789"/>
<rect x="1560" y="528" fill="#ff1481"/>
<rect x="1566" y="528" fill="#ff107a"/>
<rect x="1572" y="528" fill="#ff0d73"/>
<rect x="1578" y="528" fill="#ff0a6c"/>
<rect x="1584" y="528" fill="#ff0866"/>
<rect x="1590" y="528" fill="#ff0561"/>
<rect x="1596" y="528" fill="#ff035c"/>
<rect x="1602" y="528" fill="#ff0157"/>
<rect x="1608" y="528" fill="#ff0052"/>
<rect x="1614" y="528" fill="#ff004e"/>
<rect x="1620" y="528" fill="#ff004a"/>
<rect x="1626" y="528" fill="#ff0046"/>
<rect x="1632" y="528" fill="#ff0042"/>
<rect x="1392" y="534" fill="#006dff"/>
<rect x="1398" y="534" fill="#006bff"/>
<rect x="1404" y="534" fill="#0169ff"/>
<rect x="1410" y="534" fill="#0e67ff"/>
<rect x="1416" y="534" fill="#1b65ff"/>
<rect x="1422" y="534" fill="#2863ff"/>
<rect x="1428" y="534" fill="#3661ff"/>
<rect x="1434" y="534" fill="#445eff"/>
<rect x="1440" y="534" fill="#525cff"/>
<rect x="1446" y="534" fill="#615aff"/>
<rect x="1452" y="534" fill="#7157ff"/>
<rect x="1458" y="534" fill="#8155ff"/>
<rect x="1464" y="534" fill="#9152ff"/>
<rect x="1470" y="534" fill="#a24fff"/>
<rect x="1476" y="534" fill="#b34dff"/>
<rect x="1482" y="534" fill="#c54aff"/>
<rect x="1488" y="534" fill="#d847ff"/>
<rect x="1494" y="534" fill="#eb44ff"/>
<rect x="1500" y="534" fill="#fe41ff"/>
<rect x="1506" y="534" fill="#ff39ed"/>
<rect x="1512" y="534" fill="#ff32dc"/>
<rect x="1518" y="534" fill="#ff2ccd"/>
<rect x="1524" y="534" fill="#ff26bf"/>
<rect x="1530" y="534" fill="#ff21b3"/>
<rect x="1536" y="534" fill="#ff1ca8"/>
<rect x="1542" y="534" fill="#ff189d"/>
<rect x="1548" y="534" fill="#ff1494"/>
<rect x="1554" y="534" fill="#ff118b"/>
<rect x="1560" y="534" fill="#ff0e83"/>
<rect x="1566" y="534" fill="#ff0a7c"/>
<rect x="1572" y="534" fill="#ff0875"/>
<rect x="1578" y="534" fill="#ff056f"/>
<rect x="1584" y="534" fill="#ff0369"/>
<rect x="1590" y="534" fill="#ff0063"/>
<rect x="1596" y="534" fill="#ff005e"/>
<rect x="1602" y="534" fill="#ff0059"/>
<rect x="1608" y="534" fill="#ff0055"/>
<rect x="1614" y="534" fill="#ff0050"/>
<rect x="1392" y="540" fill="#0064ff"/>
<rect x="1398" y="540" fill="#0062ff"/>
<rect x="1404" y="540" fill="#0560ff"/>
<rect x="1410" y="540" fill="#125dff"/>
<rect x="1416" y="540" fill="#1e5bff"/>
<rect x="1422" y="540" fill="#2c59ff"/>
<rect x="1428" y="540" fill="#3957ff"/>
<rect x="1434" y="540" fill="#4754ff"/>
<rect x="1440" y="540" fill="#5552ff"/>
<rect x="1446" y="540" fill="#6450ff"/>
<rect x="1452" y="540" fill="#734dff"/>
<rect x="1458" y="540" fill="#824aff"/>
<rect x="1464" y="540" fill="#9248ff"/>
<rect x="1470" y="540" fill="#a345ff"/>
<rect x="1476" y="540" fill="#b442ff"/>
<rect x="1482" y="540" fill="#c53fff"/>
<rect x="1488" y="540" fill="#d73cff"/>
<rect x="1494" y="540" fill="#ea39ff"/>
<rect x="1500" y="540" fill="#fd36ff"/>
<rect x="1506" y="540" fill="#ff2fee"/>
<rect x="1512" y="540" fill="#ff29dd"/>
<rect x="1518" y="540" fill="#ff23cf"/>
<rect x="1524" y="540" fill="#ff1ec1"/>
<rect x="1530" y="540" fill="#ff19b5"/>
<rect x="1536" y="540" fill="#ff15aa"/>
<rect x="1542" y="540" fill="#ff11a0"/>
<rect x="1548" y="540" fill="#ff0e96"/>
<rect x="1554" y="540" fill="#ff0a8e"/>
<rect x="1560" y="540" fill="#ff0786"/>
<rect x="1566" y="540" fill="#ff057e"/>
<rect x="1572" y="540" fill="#ff0278"/>
<rect x="1578" y="540" fill="#ff0071"/>
<rect x="1584" y="540" fill="#ff006b"/>
<rect x="1590" y="540" fill="#ff0066"/>
<rect x="1596" y="540" fill="#ff0060"/>
<rect x="1602" y="540" fill="#ff005b"/>
<rect x="1392" y="546" fill="#005bff"/>
<rect x="1398" y="546" fill="#0059ff"/>
<rect x="1404" y="546" fill="#0956ff"/>
<rect x="1410" y="546" fill="#1554ff"/>
<rect x="1416" y="546" fill="#2252ff"/>
<rect x="1422" y="546" fill="#2f50ff"/>
<rect x="1428" y="546" fill="#3c4dff"/>
<rect x="1434" y="546" fill="#4a4bff"/>
<rect x="1440" y="546" fill="#5848ff"/>
<rect x="1446" y="546" fill="#6646ff"/>
<rect x="1452" y="546" fill="#7543ff"/>
<rect x="1458" y="546" fill="#8441ff"/>
<rect x="1464" y="546" fill="#943eff"/>
<rect x="1470" y="546" fill="#a43bff"/>
<rect x="1476" y="546" fill="#b538ff"/>
<rect x="1482" y="546" fill="#c635ff"/>
<rect x="1488" y="546" fill="#d732ff"/>
<rect x="1494" y="546" fill="#e92fff"/>
<rect x="1500" y="546" fill="#fc2bff"/>
<rect x="1506" y="546" fill="#ff25f0"/>
<rect x="1512" y="546" fill="#ff20df"/>
<rect x="1518" y="546" fill="#ff1bd0"/>
<rect x="1524" y="546" fill="#ff16c3"/>
<rect x="1530" y="546" fill="#ff12b7"/>
<rect x="1536" y="546" fill="#ff0eac"/>
<rect x="1542" y="546" fill="#ff0ba2"/>
<rect x="1548" y="546" fill="#ff0798"/>
<rect x="1554" y="546" fill="#ff0490"/>
<rect x="1560" y="546" fill="#ff0288"/>
<rect x="1566" y="546" fill="#ff0081"/>
<rect x="1572" y="546" fill="#ff007a"/>
<rect x="1578" y="546" fill="#ff0073"/>
<rect x="1584" y="546" fill="#ff006d"/>
<rect x="1590" y="546" fill="#ff0068"/>
<rect x="1386" y="552" fill="#0054ff"/>
<rect x="1392" y="552" fill="#0052ff"/>
<rect x="1398" y="552" fill="#0150ff"/>
<rect x="1404" y="552" fill="#0d4eff"/>
<rect x="1410" y="552" fill="#194bff"/>
<rect x="1416" y="552" fill="#2549ff"/>
<rect x="1422" y="552" fill="#3247ff"/>
<rect x="1428" y="552" fill="#3f44ff"/>
<rect x="1434" y="552" fill="#4d42ff"/>
<rect x="1440" y="552" fill="#5a3fff"/>
<rect x="1446" y="552" fill="#693dff"/>
<rect x="1452" y="552" fill="#773aff"/>
<rect x="1458" y="552" fill="#8637ff"/>
<rect x="1464" y="552" fill="#9534ff"/>
<rect x="1470" y="552" fill="#a531ff"/>
<rect x="1476" y="552" fill="#b52eff"/>
<rect x="1482" y="552" fill="#c62bff"/>
<rect x="1488" y="552" fill="#d728ff"/>
<rect x="1494" y="552" fill="#e925ff"/>
<rect x="1500" y="552" fill="#fb21ff"/>
<rect x="1506" y="552" fill="#ff1cf1"/>
<rect x="1512" y="552" fill="#ff17e1"/>
<rect x="1518" y="552" fill="#ff12d2"/>
<rect x="1524" y="552" fill="#ff0ec5"/>
<rect x="1530" y="552" fill="#ff0bb9"/>
<rect x="1536" y="552" fill="#ff07ae"/>
<rect x="1542" y="552" fill="#ff04a4"/>
<rect x="1548" y="552" fill="#ff019b"/>
<rect x="1554" y="552" fill="#ff0092"/>
<rect x="1560" y="552" fill="#ff008a"/>
<rect x="1566" y="552" fill="#ff0083"/>
<rect x="1572" y="552" fill="#ff007c"/>
<rect x="1578" y="552" fill="#ff0076"/>
<rect x="1386" y="558" fill="#004cff"/>
<rect x="1392" y="558" fill="#004aff"/>
<rect x="1398" y="558" fill="#0547ff"/>
<rect x="1404" y="558" fill="#1145ff"/>
<rect x="1410" y="558" fill="#1d43ff"/>
<rect x="1416" y="558" fill="#2940ff"/>
<rect x="1422" y="558" fill="#353eff"/>
<rect x="1428" y="558" fill="#423bff"/>
<rect x="1434" y="558" fill="#4f39ff"/>
<rect x="1440" y="558" fill="#5d36ff"/>
<rect x="1446" y="558" fill="#6b34ff"/>
<rect x="1452" y="558" fill="#7931ff"/>
<rect x="1458" y="558" fill="#882eff"/>
<rect x="1464" y="558" fill="#972bff"/>
<rect x="1470" y="558" fill="#a628ff"/>
<rect x="1476" y="558" fill="#b625ff"/>
<rect x="1482" y="558" fill="#c622ff"/>
<rect x="1488" y="558" fill="#d71fff"/>
<rect x="1494" y="558" fill="#e81bff"/>
<rect x="1500" y="558" fill="#fa18ff"/>
<rect x="1506" y="558" fill="#ff13f2"/>
<rect x="1512" y="558" fill="#ff0fe2"/>
<rect x="1518" y="558" fill="#ff0bd4"/>
<rect x="1524" y="558" fill="#ff07c7"/>
<rect x="1530" y="558" fill="#ff03bb"/>
<rect x="1536" y="558" fill="#ff00b0"/>
<rect x="1542" y="558" fill="#ff00a6"/>
<rect x="1548" y="558" fill="#ff009d"/>
<rect x="1554" y="558" fill="#ff0094"/>
<rect x="1560" y="558" fill="#ff008c"/>
<rect x="1566" y="558" fill="#ff0085"/>
<rect x="1386" y="564" fill="#0044ff"/>
<rect x="1392" y="564" fill="#0041ff"/>
<rect x="1398" y="564" fill="#093fff"/>
<rect x="1404" y="564" fill="#143dff"/>
<rect x="1410" y="564" fill="#203bff"/>
<rect x="1416" y="564" fill="#2c38ff"/>
<rect x="1422" y="564" fill="#3836ff"/>
<rect x="1428" y="564" fill="#4533ff"/>
<rect x="1434" y="564" fill="#5230ff"/>
<rect x="1440" y="564" fill="#5f2eff"/>
<rect x="1446" y="564" fill="#6d2bff"/>
<rect x="1452" y="564" fill="#7b28ff"/>
<rect x="1458" y="564" fill="#8925ff"/>
<rect x="1464" y="564" fill="#9822ff"/>
<rect x="1470" y="564" fill="#a71fff"/>
<rect x="1476" y="564" fill="#b61cff"/>
<rect x="1482" y="564" fill="#c619ff"/>
<rect x="1488" y="564" fill="#d716ff"/>
<rect x="1494" y="564" fill="#e812ff"/>
<rect x="1500" y="564" fill="#f90fff"/>
<rect x="1506" y="564" fill="#ff0bf3"/>
<rect x="1512" y="564" fill="#ff07e4"/>
<rect x="1518" y="564" fill="#ff03d5"/>
<rect x="1524" y="564" fill="#ff00c8"/>
<rect x="1530" y="564" fill="#ff00bd"/>
<rect x="1536" y="564" fill="#ff00b2"/>
<rect x="1542" y="564" fill="#ff00a8"/>
<rect x="1548" y="564" fill="#ff009f"/>
<rect x="1380" y="570" fill="#003eff"/>
<rect x="1386" y="570" fill="#003cff"/>
<rect x="1392" y="570" fill="#013aff"/>
<rect x="1398" y="570" fill="#0d37ff"/>
<rect x="1404" y="570" fill="#1835ff"/>
<rect x="1410" y="570" fill="#2333ff"/>
<rect x="1416" y="570" fill="#2f30ff"/>
<rect x="1422" y="570" fill="#3b2eff"/>
<rect x="1428" y="570" fill="#482bff"/>
<rect x="1434" y="570" fill="#5428ff"/>
<rect x="1440" y="570" fill="#6126ff"/>
<rect x="1446" y="570" fill="#6f23ff"/>
<rect x="1452" y="570" fill="#7c20ff"/>
<rect x="1458" y="570" fill="#8b1dff"/>
<rect x="1464" y="570" fill="#991aff"/>
<rect x="1470" y="570" fill="#a817ff"/>
<rect x="1476" y="570" fill="#b714ff"/>
<rect x="1482" y="570" fill="#c710ff"/>
<rect x="1488" y="570" fill="#d70dff"/>
<rect x="1494" y="570" fill="#e70aff"/>
<rect x="1500" y="570" fill="#f806ff"/>
<rect x="1506" y="570" fill="#ff02f5"/>
<rect x="1512" y="570" fill="#ff00e5"/>
<rect x="1518" y="570" fill="#ff00d7"/>
<rect x="1524" y="570" fill="#ff00ca"/>
<rect x="1530" y="570" fill="#ff00be"/>
<rect x="1536" y="570" fill="#ff00b4"/>
<rect x="1380" y="576" fill="#0037ff"/>
<rect x="1386" y="576" fill="#0035ff"/>
<rect x="1392" y="576" fill="#0532ff"/>
<rect x="1398" y="576" fill="#1030ff"/>
<rect x="1404" y="576" fill="#1b2dff"/>
<rect x="1410" y="576" fill="#262bff"/>
<rect x="1416" y="576" fill="#3228ff"/>
<rect x="1422" y="576" fill="#3e26ff"/>
<rect x="1428" y="576" fill="#4a23ff"/>
<rect x="1434" y="576" fill="#5721ff"/>
<rect x="1440" y="576" fill="#641eff"/>
<rect x="1446" y="576" fill="#711bff"/>
<rect x="1452" y="576" fill="#7e18ff"/>
<rect x="1458" y="576" fill="#8c15ff"/>
<rect x="1464" y="576" fill="#9a12ff"/>
<rect x="1470" y="576" fill="#a90fff"/>
<rect x="1476" y="576" fill="#b80cff"/>
<rect x="1482" y="576" fill="#c708ff"/>
<rect x="1488" y="576" fill="#d705ff"/>
<rect x="1494" y="576" fill="#e701ff"/>
<rect x="1500" y="576" fill="#f800ff"/>
<rect x="1506" y="576" fill="#ff00f6"/>
<rect x="1512" y="576" fill="#ff00e6"/>
<rect x="1518" y="576" fill="#ff00d8"/>
<rect x="1524" y="576" fill="#ff00cc"/>
<rect x="1380" y="582" fill="#0030ff"/>
<rect x="1386" y="582" fill="#002dff"/>
<rect x="1392" y="582" fill="#092bff"/>
<rect x="1398" y="582" fill="#1329ff"/>
<rect x="1404" y="582" fill="#1e26ff"/>
<rect x="1410" y="582" fill="#2a24ff"/>
<rect x="1416" y="582" fill="#3521ff"/>
<rect x="1422" y="582" fill="#411eff"/>
<rect x="1428" y="582" fill="#4d1cff"/>
<rect x="1434" y="582" fill="#5919ff"/>
<rect x="1440" y="582" fill="#6616ff"/>
<rect x="1446" y="582" fill="#7313ff"/>
<rect x="1452" y="582" fill="#8010ff"/>
<rect x="1458" y="582" fill="#8d0dff"/>
<rect x="1464" y="582" fill="#9b0aff"/>
<rect x="1470" y="582" fill="#aa07ff"/>
<rect x="1476" y="582" fill="#b804ff"/>
<rect x="1482" y="582" fill="#c700ff"/>
<rect x="1488" y="582" fill="#d700ff"/>
<rect x="1494" y="582" fill="#e600ff"/>
<rect x="1500" y="582" fill="#f700ff"/>
<rect x="1506" y="582" fill="#ff00f7"/>
<rect x="1512" y="582" fill="#ff00e8"/>
<rect x="1374" y="588" fill="#002bff"/>
<rect x="1380" y="588" fill="#0029ff"/>
<rect x="1386" y="588" fill="#0226ff"/>
<rect x="1392" y="588" fill="#0c24ff"/>
<rect x="1398" y="588" fill="#1722ff"/>
<rect x="1404" y="588" fill="#211fff"/>
<rect x="1410" y="588" fill="#2c1dff"/>
<rect x="1416" y="588" fill="#381aff"/>
<rect x="1422" y="588" fill="#4317ff"/>
<rect x="1428" y="588" fill="#4f15ff"/>
<rect x="1434" y="588" fill="#5b12ff"/>
<rect x="1440" y="588" fill="#680fff"/>
<rect x="1446" y="588" fill="#740cff"/>
<rect x="1452" y="588" fill="#8109ff"/>
<rect x="1458" y="588" fill="#8f06ff"/>
<rect x="1464" y="588" fill="#9c03ff"/>
<rect x="1470" y="588" fill="#aa00ff"/>
<rect x="1476" y="588" fill="#b900ff"/>
<rect x="1482" y="588" fill="#c700ff"/>
<rect x="1488" y="588" fill="#d700ff"/>
<rect x="1494" y="588" fill="#e600ff"/>
<rect x="1374" y="594" fill="#0024ff"/>
<rect x="1380" y="594" fill="#0022ff"/>
<rect x="1386" y="594" fill="#0520ff"/>
<rect x="1392" y="594" fill="#0f1dff"/>
<rect x="1398" y="594" fill="#1a1bff"/>
<rect x="1404" y="594" fill="#2418ff"/>
<rect x="1410" y="594" fill="#2f16ff"/>
<rect x="1416" y="594" fill="#3a13ff"/>
<rect x="1422" y="594" fill="#4610ff"/>
<rect x="1428" y="594" fill="#520eff"/>
<rect x="1434" y="594" fill="#5d0bff"/>
<rect x="1440" y="594" fill="#6a08ff"/>
<rect x="1446" y="594" fill="#7605ff"/>
<rect x="1452" y="594" fill="#8302ff"/>
<rect x="1458" y="594" fill="#9000ff"/>
<rect x="1464" y="594" fill="#9d00ff"/>
<rect x="1470" y="594" fill="#ab00ff"/>
<rect x="1476" y="594" fill="#b900ff"/>
<rect x="1482" y="594" fill="#c800ff"/>
<rect x="1374" y="600" fill="#001eff"/>
<rect x="1380" y="600" fill="#001cff"/>
<rect x="1386" y="600" fill="#0819ff"/>
<rect x="1392" y="600" fill="#1317ff"/>
<rect x="1398" y="600" fill="#1d14ff"/>
<rect x="1404" y="600" fill="#2712ff"/>
<rect x="1410" y="600" fill="#320fff"/>
<rect x="1416" y="600" fill="#3d0cff"/>
<rect x="1422" y="600" fill="#480aff"/>
<rect x="1428" y="600" fill="#5407ff"/>
<rect x="1434" y="600" fill="#5f04ff"/>
<rect x="1440" y="600" fill="#6b01ff"/>
<rect x="1446" y="600" fill="#7800ff"/>
<rect x="1452" y="600" fill="#8400ff"/>
<rect x="1458" y="600" fill="#9100ff"/>
<rect x="1464" y="600" fill="#9e00ff"/>
<rect x="1470" y="600" fill="#ac00ff"/>
<rect x="1368" y="606" fill="#001aff"/>
<rect x="1374" y="606" fill="#0018ff"/>
<rect x="1380" y="606" fill="#0215ff"/>
<rect x="1386" y="606" fill="#0c13ff"/>
<rect x="1392" y="606" fill="#1610ff"/>
<rect x="1398" y="606" fill="#200eff"/>
<rect x="1404" y="606" fill="#2a0bff"/>
<rect x="1410" y="606" fill="#3509ff"/>
<rect x="1416" y="606" fill="#4006ff"/>
<rect x="1422" y="606" fill="#4b03ff"/>
<rect x="1428" y="606" fill="#5600ff"/>
<rect x="1434" y="606" fill="#6100ff"/>
<rect x="1440" y="606" fill="#6d00ff"/>
<rect x="1446" y="606" fill="#7900ff"/>
<rect x="1452" y="606" fill="#8600ff"/>
<rect x="1458" y="606" fill="#9200ff"/>
<rect x="1368" y="612" fill="#0014ff"/>
<rect x="1374" y="612" fill="#0012ff"/>
<rect x="1380" y="612" fill="#050fff"/>
<rect x="1386" y="612" fill="#0f0dff"/>
<rect x="1392" y="612" fill="#190aff"/>
<rect x="1398" y="612" fill="#2308ff"/>
<rect x="1404" y="612" fill="#2d05ff"/>
<rect x="1410" y="612" fill="#3702ff"/>
<rect x="1416" y="612" fill="#4200ff"/>
<rect x="1422" y="612" fill="#4d00ff"/>
<rect x="1428" y="612" fill="#5800ff"/>
<rect x="1434" y="612" fill="#6300ff"/>
<rect x="1440" y="612" fill="#6f00ff"/>
<rect x="1368" y="618" fill="#000eff"/>
<rect x="1374" y="618" fill="#000cff"/>
<rect x="1380" y="618" fill="#0809ff"/>
<rect x="1386" y="618" fill="#1207ff"/>
<rect x="1392" y="618" fill="#1b04ff"/>
<rect x="1398" y="618" fill="#2502ff"/>
<rect x="1404" y="618" fill="#2f00ff"/>
<rect x="1410" y="618" fill="#3a00ff"/>
<rect x="1416" y="618" fill="#4400ff"/>
<rect x="1422" y="618" fill="#4f00ff"/>
<rect x="1428" y="618" fill="#5a00ff"/>
<rect x="1362" y="624" fill="#000bff"/>
<rect x="1368" y="624" fill="#0008ff"/>
<rect x="1374" y="624" fill="#0206ff"/>
<rect x="1380" y="624" fill="#0b04ff"/>
<rect x="1386" y="624" fill="#1501ff"/>
<rect x="1392" y="624" fill="#1e00ff"/>
<rect x="1398" y="624" fill="#2800ff"/>
<rect x="1404" y="624" fill="#3200ff"/>
<rect x="1410" y="624" fill="#3c00ff"/>
<rect x="1416" y="624" fill="#4700ff"/>
<rect x="1362" y="630" fill="#0005ff"/>
<rect x="1368" y="630" fill="#0003ff"/>
<rect x="1374" y="630" fill="#0500ff"/>
<rect x="1380" y="630" fill="#0e00ff"/>
<rect x="1386" y="630" fill="#1800ff"/>
<rect x="1392" y="630" fill="#2100ff"/>
<rect x="1398" y="630" fill="#2b00ff"/>
<rect x="1404" y="630" fill="#3400ff"/>
<rect x="1362" y="636" fill="#0000ff"/>
<rect x="1368" y="636" fill="#0000ff"/>
<rect x="1374" y="636" fill="#0800ff"/>
<rect x="1380" y="636" fill="#1100ff"/>
<rect x="1386" y="636" fill="#1a00ff"/>
<rect x="1374" y="642" fill="#0b00ff"/>
</g></g>
<line x1="1256.25" y1="673" x2="1256.25" y2="679" stroke="#ccc" stroke-width="1.3" />
<line x1="1250" y1="673" x2="1256" y2="673" stroke="#ccc" stroke-width="1.3" />
<text x="1256.25" y="697" font-size="15.5" fill="#e8e8e8" text-anchor="middle">0</text>
<text x="1249.5" y="678.5" font-size="15.5" fill="#e8e8e8" text-anchor="end">0</text>
<line x1="1333.91" y1="673" x2="1333.91" y2="679" stroke="#ccc" stroke-width="1.3" />
<line x1="1250" y1="610.25" x2="1256" y2="610.25" stroke="#ccc" stroke-width="1.3" />
<text x="1333.91" y="697" font-size="15.5" fill="#e8e8e8" text-anchor="middle">0,1</text>
<text x="1249.5" y="615.75" font-size="15.5" fill="#e8e8e8" text-anchor="end">0,1</text>
<line x1="1411.57" y1="673" x2="1411.57" y2="679" stroke="#ccc" stroke-width="1.3" />
<line x1="1250" y1="547.5" x2="1256" y2="547.5" stroke="#ccc" stroke-width="1.3" />
<text x="1411.57" y="697" font-size="15.5" fill="#e8e8e8" text-anchor="middle">0,2</text>
<text x="1249.5" y="553" font-size="15.5" fill="#e8e8e8" text-anchor="end">0,2</text>
<line x1="1489.23" y1="673" x2="1489.23" y2="679" stroke="#ccc" stroke-width="1.3" />
<line x1="1250" y1="484.75" x2="1256" y2="484.75" stroke="#ccc" stroke-width="1.3" />
<text x="1489.23" y="697" font-size="15.5" fill="#e8e8e8" text-anchor="middle">0,3</text>
<text x="1249.5" y="490.25" font-size="15.5" fill="#e8e8e8" text-anchor="end">0,3</text>
<line x1="1566.89" y1="673" x2="1566.89" y2="679" stroke="#ccc" stroke-width="1.3" />
<line x1="1250" y1="422" x2="1256" y2="422" stroke="#ccc" stroke-width="1.3" />
<text x="1566.89" y="697" font-size="15.5" fill="#e8e8e8" text-anchor="middle">0,4</text>
<text x="1249.5" y="427.5" font-size="15.5" fill="#e8e8e8" text-anchor="end">0,4</text>
<line x1="1644.55" y1="673" x2="1644.55" y2="679" stroke="#ccc" stroke-width="1.3" />
<line x1="1250" y1="359.25" x2="1256" y2="359.25" stroke="#ccc" stroke-width="1.3" />
<text x="1644.55" y="697" font-size="15.5" fill="#e8e8e8" text-anchor="middle">0,5</text>
<text x="1249.5" y="364.75" font-size="15.5" fill="#e8e8e8" text-anchor="end">0,5</text>
<line x1="1722.21" y1="673" x2="1722.21" y2="679" stroke="#ccc" stroke-width="1.3" />
<line x1="1250" y1="296.5" x2="1256" y2="296.5" stroke="#ccc" stroke-width="1.3" />
<text x="1722.21" y="697" font-size="15.5" fill="#e8e8e8" text-anchor="middle">0,6</text>
<text x="1249.5" y="302" font-size="15.5" fill="#e8e8e8" text-anchor="end">0,6</text>
<line x1="1799.87" y1="673" x2="1799.87" y2="679" stroke="#ccc" stroke-width="1.3" />
<line x1="1250" y1="233.75" x2="1256" y2="233.75" stroke="#ccc" stroke-width="1.3" />
<text x="1799.87" y="697" font-size="15.5" fill="#e8e8e8" text-anchor="middle">0,7</text>
<text x="1249.5" y="239.25" font-size="15.5" fill="#e8e8e8" text-anchor="end">0,7</text>
<line x1="1877.53" y1="673" x2="1877.53" y2="679" stroke="#ccc" stroke-width="1.3" />
<line x1="1250" y1="171" x2="1256" y2="171" stroke="#ccc" stroke-width="1.3" />
<text x="1877.53" y="697" font-size="15.5" fill="#e8e8e8" text-anchor="middle">0,8</text>
<text x="1249.5" y="176.5" font-size="15.5" fill="#e8e8e8" text-anchor="end">0,8</text>
<rect x="1485" y="356.7" width="15" height="15" fill="none" stroke="#fff" stroke-width="1.5"/>
<rect x="1540" y="354.2" width="15" height="15" fill="none" stroke="#fff" stroke-width="1.5"/>
<rect x="1595.8" y="367.5" width="15" height="15" fill="none" stroke="#fff" stroke-width="1.5"/>
<rect x="1616.7" y="388" width="15" height="15" fill="none" stroke="#fff" stroke-width="1.5"/>
<rect x="1646.7" y="408.7" width="15" height="15" fill="none" stroke="#fff" stroke-width="1.5"/>
<rect x="1511.7" y="395.3" width="15" height="15" fill="none" stroke="#fff" stroke-width="1.5"/>
<rect x="1452.5" y="436.7" width="15" height="15" fill="none" stroke="#fff" stroke-width="1.5"/>
<rect x="1542.5" y="440.3" width="15" height="15" fill="none" stroke="#fff" stroke-width="1.5"/>
<rect x="1559.2" y="435.3" width="15" height="15" fill="none" stroke="#fff" stroke-width="1.5"/>
<rect x="1607" y="468.3" width="15" height="15" fill="none" stroke="#fff" stroke-width="1.5"/>
<rect x="1665.8" y="465.3" width="15" height="15" fill="none" stroke="#fff" stroke-width="1.5"/>
<rect x="1409.2" y="494.7" width="15" height="15" fill="none" stroke="#fff" stroke-width="1.5"/>
<rect x="1441.3" y="497.8" width="15" height="15" fill="none" stroke="#fff" stroke-width="1.5"/>
<rect x="1457" y="505.3" width="15" height="15" fill="none" stroke="#fff" stroke-width="1.5"/>
<rect x="1474.2" y="526.3" width="15" height="15" fill="none" stroke="#fff" stroke-width="1.5"/>
<rect x="1538.3" y="509.5" width="15" height="15" fill="none" stroke="#fff" stroke-width="1.5"/>
<rect x="1416.5" y="543.8" width="15" height="15" fill="none" stroke="#fff" stroke-width="1.5"/>
<rect x="1397.8" y="576.3" width="15" height="15" fill="none" stroke="#fff" stroke-width="1.5"/>
<rect x="1490.5" y="457.5" width="15" height="15" fill="none" stroke="#000" stroke-width="2"/>
<circle cx="1497" cy="465" r="5" fill="#ddd" stroke="#000" stroke-width="1.2"/>
<circle cx="1499.2" cy="465.3" r="5" fill="#a0a0a0" stroke="#000" stroke-width="1.2"/>
<circle cx="1499.3" cy="353.8" r="5.2" fill="#4a9a4a" stroke="#111" stroke-width="1.2"/>
<circle cx="1557" cy="351.2" r="5.2" fill="#a0b848" stroke="#111" stroke-width="1.2"/>
<circle cx="1610.3" cy="360" r="5.2" fill="#ecc828" stroke="#111" stroke-width="1.2"/>
<circle cx="1630" cy="382.2" r="5.2" fill="#e8a030" stroke="#111" stroke-width="1.2"/>
<circle cx="1659.3" cy="404.5" r="5.2" fill="#d88030" stroke="#111" stroke-width="1.2"/>
<circle cx="1524.7" cy="397.2" r="5.2" fill="#586840" stroke="#111" stroke-width="1.2"/>
<circle cx="1463" cy="445.8" r="5.2" fill="#68b8a8" stroke="#111" stroke-width="1.2"/>
<circle cx="1548.3" cy="445.8" r="5.2" fill="#c09080" stroke="#111" stroke-width="1.2"/>
<circle cx="1568" cy="438.5" r="5.2" fill="#705040" stroke="#111" stroke-width="1.2"/>
<circle cx="1610.3" cy="472.5" r="5.2" fill="#c05060" stroke="#111" stroke-width="1.2"/>
<circle cx="1676" cy="468.2" r="5.2" fill="#b83040" stroke="#111" stroke-width="1.2"/>
<circle cx="1422.2" cy="505.3" r="5.2" fill="#0085a3" stroke="#111" stroke-width="1.2"/>
<circle cx="1450.5" cy="506.7" r="5.2" fill="#6080a8" stroke="#111" stroke-width="1.2"/>
<circle cx="1464.5" cy="513.8" r="5.2" fill="#8880b8" stroke="#111" stroke-width="1.2"/>
<circle cx="1475.7" cy="538" r="5.2" fill="#604070" stroke="#111" stroke-width="1.2"/>
<circle cx="1538.5" cy="518.5" r="5.2" fill="#c05898" stroke="#111" stroke-width="1.2"/>
<circle cx="1425.3" cy="553.8" r="5.2" fill="#5060b0" stroke="#111" stroke-width="1.2"/>
<circle cx="1404" cy="586.7" r="5.2" fill="#383898" stroke="#111" stroke-width="1.2"/>
<circle cx="1473.8" cy="495" r="5.4" fill="#000"/>
<rect x="1709" y="147.5" width="197" height="163.5" fill="#303030"/>
<rect x="1713" y="151.8" width="189.5" height="155.8" fill="url(#gin1)"/>
<path d="M1833 151.8 H1902.5 V307.6 H1781.7 Z" fill="url(#gin2)"/>
<path d="M1833 151.8 H1902.5 V307.6 H1781.7 Z" fill="url(#gin3)"/>
<rect x="1713" y="151.8" width="189.5" height="155.8" fill="none" stroke="#9a9a9a" stroke-width="2"/>
<rect x="1800.5" y="222.5" width="15" height="15" fill="none" stroke="#fff" stroke-width="1.5"/>
<circle cx="1828.5" cy="241.7" r="5.2" fill="#008098" stroke="#111" stroke-width="1.2"/>
<rect x="1626" y="630" width="280" height="30" fill="#333"/>
<text x="1657" y="653" font-size="21.5" fill="#f0f0f0" textLength="217" lengthAdjust="spacingAndGlyphs">RGB Triplet: 0, 133, 163</text>
<text x="216.6" y="776" font-size="33.5" fill="#f2f2f2" textLength="225" lengthAdjust="spacingAndGlyphs">Current Reading</text>
<text x="216.6" y="823" font-size="28.5" fill="#f2f2f2" textLength="105.2" lengthAdjust="spacingAndGlyphs">x: 0,2138</text>
<text x="216.6" y="866.9" font-size="28.5" fill="#f2f2f2" textLength="105.2" lengthAdjust="spacingAndGlyphs">y: 0,2657</text>
<text x="216.6" y="911.7" font-size="28.5" fill="#f2f2f2" textLength="114.2" lengthAdjust="spacingAndGlyphs">fL: 21,556</text>
<text x="216.6" y="956" font-size="28.5" fill="#f2f2f2" textLength="163.4" lengthAdjust="spacingAndGlyphs">cd/m²: 73,857</text>
<rect x="533.5" y="728.5" width="1386.5" height="30.3" fill="url(#ghdr)"/>
<rect x="550.5" y="758.8" width="1369.5" height="28.1" fill="#444"/>
<rect x="550.5" y="786.9" width="1369.5" height="28.1" fill="#808080"/>
<rect x="550.5" y="815" width="1369.5" height="28.1" fill="#444"/>
<rect x="550.5" y="843.1" width="1369.5" height="28.1" fill="#808080"/>
<rect x="550.5" y="871.2" width="1369.5" height="28.1" fill="#444"/>
<rect x="550.5" y="899.3" width="1369.5" height="28.1" fill="#808080"/>
<rect x="550.5" y="927.4" width="1369.5" height="28.1" fill="#444"/>
<rect x="533.5" y="758.8" width="17" height="196.7" fill="url(#grh)"/>
<rect x="533.5" y="728.5" width="17" height="30.3" fill="url(#grh0)"/>
<line x1="533.5" y1="786.9" x2="550.5" y2="786.9" stroke="#2a2a2a" stroke-width="1" />
<line x1="533.5" y1="815" x2="550.5" y2="815" stroke="#2a2a2a" stroke-width="1" />
<line x1="533.5" y1="843.1" x2="550.5" y2="843.1" stroke="#2a2a2a" stroke-width="1" />
<line x1="533.5" y1="871.2" x2="550.5" y2="871.2" stroke="#2a2a2a" stroke-width="1" />
<line x1="533.5" y1="899.3" x2="550.5" y2="899.3" stroke="#2a2a2a" stroke-width="1" />
<line x1="533.5" y1="927.4" x2="550.5" y2="927.4" stroke="#2a2a2a" stroke-width="1" />
<g clip-path="url(#ctab)" fill="#eee">
<text x="691.7" y="749.7" font-size="16.2" fill="#fafafa" textLength="45.1355" lengthAdjust="spacingAndGlyphs">White</text>
<text x="762.3" y="749.7" font-size="16.2" fill="#fafafa" textLength="62.8073" lengthAdjust="spacingAndGlyphs">Gray 80</text>
<text x="835" y="749.7" font-size="16.2" fill="#fafafa" textLength="62.8073" lengthAdjust="spacingAndGlyphs">Gray 65</text>
<text x="907.8" y="749.7" font-size="16.2" fill="#fafafa" textLength="62.8073" lengthAdjust="spacingAndGlyphs">Gray 50</text>
<text x="980.8" y="749.7" font-size="16.2" fill="#fafafa" textLength="62.8073" lengthAdjust="spacingAndGlyphs">Gray 35</text>
<text x="1054.4" y="749.7" font-size="16.2" fill="#fafafa" textLength="43.1793" lengthAdjust="spacingAndGlyphs">Black</text>
<text x="1107" y="749.7" font-size="16.2" fill="#fafafa" textLength="76.5364" lengthAdjust="spacingAndGlyphs">Dark Skin</text>
<text x="1193.6" y="749.7" font-size="16.2" fill="#fafafa" textLength="77.5435" lengthAdjust="spacingAndGlyphs">Light Skin</text>
<text x="1281.8" y="749.7" font-size="16.2" fill="#fafafa" textLength="69.6829" lengthAdjust="spacingAndGlyphs">Blue Sky</text>
<text x="1360" y="749.7" font-size="16.2" fill="#fafafa" textLength="57.91" lengthAdjust="spacingAndGlyphs">Foliage</text>
<text x="1428.4" y="749.7" font-size="16.2" fill="#fafafa" textLength="93.226" lengthAdjust="spacingAndGlyphs">Blue Flower</text>
<text x="1535.6" y="749.7" font-size="16.2" fill="#fafafa" textLength="102.072" lengthAdjust="spacingAndGlyphs">Bluish Green</text>
<text x="1649" y="749.7" font-size="16.2" fill="#fafafa" textLength="58.8922" lengthAdjust="spacingAndGlyphs">Orange</text>
<text x="1719.8" y="749.7" font-size="16.2" fill="#fafafa" textLength="104.039" lengthAdjust="spacingAndGlyphs">Purplish Blue</text>
<text x="1838" y="749.7" font-size="16.2" fill="#fafafa" textLength="74.5913" lengthAdjust="spacingAndGlyphs">Moderate</text>
<text x="555.5" y="779.4" font-size="16.2" fill="#e4e4e4" textLength="71.4431" lengthAdjust="spacingAndGlyphs">x: CIE31</text>
<text x="691.7" y="779.4" font-size="16.2" fill="#e4e4e4" textLength="36.2557" lengthAdjust="spacingAndGlyphs">0,31</text>
<text x="762.3" y="779.4" font-size="16.2" fill="#e4e4e4" textLength="36.2557" lengthAdjust="spacingAndGlyphs">0,31</text>
<text x="835" y="779.4" font-size="16.2" fill="#e4e4e4" textLength="36.2557" lengthAdjust="spacingAndGlyphs">0,31</text>
<text x="907.8" y="779.4" font-size="16.2" fill="#e4e4e4" textLength="36.2557" lengthAdjust="spacingAndGlyphs">0,31</text>
<text x="980.8" y="779.4" font-size="16.2" fill="#e4e4e4" textLength="36.2557" lengthAdjust="spacingAndGlyphs">0,31</text>
<text x="1054.4" y="779.4" font-size="16.2" fill="#e4e4e4" textLength="36.2557" lengthAdjust="spacingAndGlyphs">0,28</text>
<text x="1107" y="779.4" font-size="16.2" fill="#e4e4e4" textLength="36.2557" lengthAdjust="spacingAndGlyphs">0,40</text>
<text x="1193.6" y="779.4" font-size="16.2" fill="#e4e4e4" textLength="36.2557" lengthAdjust="spacingAndGlyphs">0,38</text>
<text x="1281.8" y="779.4" font-size="16.2" fill="#e4e4e4" textLength="36.2557" lengthAdjust="spacingAndGlyphs">0,25</text>
<text x="1360" y="779.4" font-size="16.2" fill="#e4e4e4" textLength="36.2557" lengthAdjust="spacingAndGlyphs">0,35</text>
<text x="1428.4" y="779.4" font-size="16.2" fill="#e4e4e4" textLength="36.2557" lengthAdjust="spacingAndGlyphs">0,27</text>
<text x="1535.6" y="779.4" font-size="16.2" fill="#e4e4e4" textLength="36.2557" lengthAdjust="spacingAndGlyphs">0,27</text>
<text x="1649" y="779.4" font-size="16.2" fill="#e4e4e4" textLength="36.2557" lengthAdjust="spacingAndGlyphs">0,52</text>
<text x="1719.8" y="779.4" font-size="16.2" fill="#e4e4e4" textLength="36.2557" lengthAdjust="spacingAndGlyphs">0,22</text>
<text x="1838" y="779.4" font-size="16.2" fill="#e4e4e4" textLength="36.2557" lengthAdjust="spacingAndGlyphs">0,46</text>
<text x="555.5" y="807.5" font-size="16.2" fill="#f0f0f0" textLength="71.4431" lengthAdjust="spacingAndGlyphs">y: CIE31</text>
<text x="691.7" y="807.5" font-size="16.2" fill="#f0f0f0" textLength="36.2557" lengthAdjust="spacingAndGlyphs">0,33</text>
<text x="762.3" y="807.5" font-size="16.2" fill="#f0f0f0" textLength="36.2557" lengthAdjust="spacingAndGlyphs">0,33</text>
<text x="835" y="807.5" font-size="16.2" fill="#f0f0f0" textLength="36.2557" lengthAdjust="spacingAndGlyphs">0,33</text>
<text x="907.8" y="807.5" font-size="16.2" fill="#f0f0f0" textLength="36.2557" lengthAdjust="spacingAndGlyphs">0,33</text>
<text x="980.8" y="807.5" font-size="16.2" fill="#f0f0f0" textLength="36.2557" lengthAdjust="spacingAndGlyphs">0,33</text>
<text x="1054.4" y="807.5" font-size="16.2" fill="#f0f0f0" textLength="36.2557" lengthAdjust="spacingAndGlyphs">0,28</text>
<text x="1107" y="807.5" font-size="16.2" fill="#f0f0f0" textLength="36.2557" lengthAdjust="spacingAndGlyphs">0,37</text>
<text x="1193.6" y="807.5" font-size="16.2" fill="#f0f0f0" textLength="36.2557" lengthAdjust="spacingAndGlyphs">0,36</text>
<text x="1281.8" y="807.5" font-size="16.2" fill="#f0f0f0" textLength="36.2557" lengthAdjust="spacingAndGlyphs">0,26</text>
<text x="1360" y="807.5" font-size="16.2" fill="#f0f0f0" textLength="36.2557" lengthAdjust="spacingAndGlyphs">0,44</text>
<text x="1428.4" y="807.5" font-size="16.2" fill="#f0f0f0" textLength="36.2557" lengthAdjust="spacingAndGlyphs">0,25</text>
<text x="1535.6" y="807.5" font-size="16.2" fill="#f0f0f0" textLength="36.2557" lengthAdjust="spacingAndGlyphs">0,36</text>
<text x="1649" y="807.5" font-size="16.2" fill="#f0f0f0" textLength="36.2557" lengthAdjust="spacingAndGlyphs">0,43</text>
<text x="1719.8" y="807.5" font-size="16.2" fill="#f0f0f0" textLength="36.2557" lengthAdjust="spacingAndGlyphs">0,19</text>
<text x="1838" y="807.5" font-size="16.2" fill="#f0f0f0" textLength="36.2557" lengthAdjust="spacingAndGlyphs">0,32</text>
<text x="555.5" y="835.6" font-size="16.2" fill="#e4e4e4" textLength="12.4268" lengthAdjust="spacingAndGlyphs">Y</text>
<text x="691.7" y="835.6" font-size="16.2" fill="#e4e4e4" textLength="56.9758" lengthAdjust="spacingAndGlyphs">367,07</text>
<text x="762.3" y="835.6" font-size="16.2" fill="#e4e4e4" textLength="56.9758" lengthAdjust="spacingAndGlyphs">290,90</text>
<text x="835" y="835.6" font-size="16.2" fill="#e4e4e4" textLength="56.9758" lengthAdjust="spacingAndGlyphs">236,94</text>
<text x="907.8" y="835.6" font-size="16.2" fill="#e4e4e4" textLength="56.9758" lengthAdjust="spacingAndGlyphs">183,38</text>
<text x="980.8" y="835.6" font-size="16.2" fill="#e4e4e4" textLength="56.9758" lengthAdjust="spacingAndGlyphs">128,97</text>
<text x="1054.4" y="835.6" font-size="16.2" fill="#e4e4e4" textLength="36.2557" lengthAdjust="spacingAndGlyphs">0,37</text>
<text x="1107" y="835.6" font-size="16.2" fill="#e4e4e4" textLength="46.6158" lengthAdjust="spacingAndGlyphs">37,03</text>
<text x="1193.6" y="835.6" font-size="16.2" fill="#e4e4e4" textLength="56.9758" lengthAdjust="spacingAndGlyphs">130,29</text>
<text x="1281.8" y="835.6" font-size="16.2" fill="#e4e4e4" textLength="46.6158" lengthAdjust="spacingAndGlyphs">71,55</text>
<text x="1360" y="835.6" font-size="16.2" fill="#e4e4e4" textLength="46.6158" lengthAdjust="spacingAndGlyphs">48,16</text>
<text x="1428.4" y="835.6" font-size="16.2" fill="#e4e4e4" textLength="46.6158" lengthAdjust="spacingAndGlyphs">88,87</text>
<text x="1535.6" y="835.6" font-size="16.2" fill="#e4e4e4" textLength="56.9758" lengthAdjust="spacingAndGlyphs">156,02</text>
<text x="1649" y="835.6" font-size="16.2" fill="#e4e4e4" textLength="56.9758" lengthAdjust="spacingAndGlyphs">103,88</text>
<text x="1719.8" y="835.6" font-size="16.2" fill="#e4e4e4" textLength="46.6158" lengthAdjust="spacingAndGlyphs">45,17</text>
<text x="1838" y="835.6" font-size="16.2" fill="#e4e4e4" textLength="46.6158" lengthAdjust="spacingAndGlyphs">68,56</text>
<text x="555.5" y="863.7" font-size="16.2" fill="#f0f0f0" textLength="123.217" lengthAdjust="spacingAndGlyphs">Target x:CIE31</text>
<text x="691.7" y="863.7" font-size="16.2" fill="#f0f0f0" textLength="36.2557" lengthAdjust="spacingAndGlyphs">0,31</text>
<text x="762.3" y="863.7" font-size="16.2" fill="#f0f0f0" textLength="36.2557" lengthAdjust="spacingAndGlyphs">0,31</text>
<text x="835" y="863.7" font-size="16.2" fill="#f0f0f0" textLength="36.2557" lengthAdjust="spacingAndGlyphs">0,31</text>
<text x="907.8" y="863.7" font-size="16.2" fill="#f0f0f0" textLength="36.2557" lengthAdjust="spacingAndGlyphs">0,31</text>
<text x="980.8" y="863.7" font-size="16.2" fill="#f0f0f0" textLength="36.2557" lengthAdjust="spacingAndGlyphs">0,31</text>
<text x="1054.4" y="863.7" font-size="16.2" fill="#f0f0f0" textLength="36.2557" lengthAdjust="spacingAndGlyphs">0,31</text>
<text x="1107" y="863.7" font-size="16.2" fill="#f0f0f0" textLength="36.2557" lengthAdjust="spacingAndGlyphs">0,40</text>
<text x="1193.6" y="863.7" font-size="16.2" fill="#f0f0f0" textLength="36.2557" lengthAdjust="spacingAndGlyphs">0,38</text>
<text x="1281.8" y="863.7" font-size="16.2" fill="#f0f0f0" textLength="36.2557" lengthAdjust="spacingAndGlyphs">0,25</text>
<text x="1360" y="863.7" font-size="16.2" fill="#f0f0f0" textLength="36.2557" lengthAdjust="spacingAndGlyphs">0,34</text>
<text x="1428.4" y="863.7" font-size="16.2" fill="#f0f0f0" textLength="36.2557" lengthAdjust="spacingAndGlyphs">0,27</text>
<text x="1535.6" y="863.7" font-size="16.2" fill="#f0f0f0" textLength="36.2557" lengthAdjust="spacingAndGlyphs">0,26</text>
<text x="1649" y="863.7" font-size="16.2" fill="#f0f0f0" textLength="36.2557" lengthAdjust="spacingAndGlyphs">0,51</text>
<text x="1719.8" y="863.7" font-size="16.2" fill="#f0f0f0" textLength="36.2557" lengthAdjust="spacingAndGlyphs">0,22</text>
<text x="1838" y="863.7" font-size="16.2" fill="#f0f0f0" textLength="36.2557" lengthAdjust="spacingAndGlyphs">0,46</text>
<text x="555.5" y="891.8" font-size="16.2" fill="#e4e4e4" textLength="123.217" lengthAdjust="spacingAndGlyphs">Target y:CIE31</text>
<text x="691.7" y="891.8" font-size="16.2" fill="#e4e4e4" textLength="36.2557" lengthAdjust="spacingAndGlyphs">0,33</text>
<text x="762.3" y="891.8" font-size="16.2" fill="#e4e4e4" textLength="36.2557" lengthAdjust="spacingAndGlyphs">0,33</text>
<text x="835" y="891.8" font-size="16.2" fill="#e4e4e4" textLength="36.2557" lengthAdjust="spacingAndGlyphs">0,33</text>
<text x="907.8" y="891.8" font-size="16.2" fill="#e4e4e4" textLength="36.2557" lengthAdjust="spacingAndGlyphs">0,33</text>
<text x="980.8" y="891.8" font-size="16.2" fill="#e4e4e4" textLength="36.2557" lengthAdjust="spacingAndGlyphs">0,33</text>
<text x="1054.4" y="891.8" font-size="16.2" fill="#e4e4e4" textLength="36.2557" lengthAdjust="spacingAndGlyphs">0,33</text>
<text x="1107" y="891.8" font-size="16.2" fill="#e4e4e4" textLength="36.2557" lengthAdjust="spacingAndGlyphs">0,36</text>
<text x="1193.6" y="891.8" font-size="16.2" fill="#e4e4e4" textLength="36.2557" lengthAdjust="spacingAndGlyphs">0,36</text>
<text x="1281.8" y="891.8" font-size="16.2" fill="#e4e4e4" textLength="36.2557" lengthAdjust="spacingAndGlyphs">0,27</text>
<text x="1360" y="891.8" font-size="16.2" fill="#e4e4e4" textLength="36.2557" lengthAdjust="spacingAndGlyphs">0,43</text>
<text x="1428.4" y="891.8" font-size="16.2" fill="#e4e4e4" textLength="36.2557" lengthAdjust="spacingAndGlyphs">0,25</text>
<text x="1535.6" y="891.8" font-size="16.2" fill="#e4e4e4" textLength="36.2557" lengthAdjust="spacingAndGlyphs">0,36</text>
<text x="1649" y="891.8" font-size="16.2" fill="#e4e4e4" textLength="36.2557" lengthAdjust="spacingAndGlyphs">0,41</text>
<text x="1719.8" y="891.8" font-size="16.2" fill="#e4e4e4" textLength="36.2557" lengthAdjust="spacingAndGlyphs">0,19</text>
<text x="1838" y="891.8" font-size="16.2" fill="#e4e4e4" textLength="36.2557" lengthAdjust="spacingAndGlyphs">0,31</text>
<text x="555.5" y="919.9" font-size="16.2" fill="#f0f0f0" textLength="69.0387" lengthAdjust="spacingAndGlyphs">Target Y</text>
<text x="691.7" y="919.9" font-size="16.2" fill="#f0f0f0" textLength="56.9758" lengthAdjust="spacingAndGlyphs">367,07</text>
<text x="762.3" y="919.9" font-size="16.2" fill="#f0f0f0" textLength="56.9758" lengthAdjust="spacingAndGlyphs">290,46</text>
<text x="835" y="919.9" font-size="16.2" fill="#f0f0f0" textLength="56.9758" lengthAdjust="spacingAndGlyphs">234,04</text>
<text x="907.8" y="919.9" font-size="16.2" fill="#f0f0f0" textLength="56.9758" lengthAdjust="spacingAndGlyphs">180,24</text>
<text x="980.8" y="919.9" font-size="16.2" fill="#f0f0f0" textLength="56.9758" lengthAdjust="spacingAndGlyphs">125,51</text>
<text x="1054.4" y="919.9" font-size="16.2" fill="#f0f0f0" textLength="36.2557" lengthAdjust="spacingAndGlyphs">0,00</text>
<text x="1107" y="919.9" font-size="16.2" fill="#f0f0f0" textLength="46.6158" lengthAdjust="spacingAndGlyphs">36,98</text>
<text x="1193.6" y="919.9" font-size="16.2" fill="#f0f0f0" textLength="56.9758" lengthAdjust="spacingAndGlyphs">128,09</text>
<text x="1281.8" y="919.9" font-size="16.2" fill="#f0f0f0" textLength="46.6158" lengthAdjust="spacingAndGlyphs">68,64</text>
<text x="1360" y="919.9" font-size="16.2" fill="#f0f0f0" textLength="46.6158" lengthAdjust="spacingAndGlyphs">47,84</text>
<text x="1428.4" y="919.9" font-size="16.2" fill="#f0f0f0" textLength="46.6158" lengthAdjust="spacingAndGlyphs">85,59</text>
<text x="1535.6" y="919.9" font-size="16.2" fill="#f0f0f0" textLength="56.9758" lengthAdjust="spacingAndGlyphs">153,70</text>
<text x="1649" y="919.9" font-size="16.2" fill="#f0f0f0" textLength="56.9758" lengthAdjust="spacingAndGlyphs">104,06</text>
<text x="1719.8" y="919.9" font-size="16.2" fill="#f0f0f0" textLength="46.6158" lengthAdjust="spacingAndGlyphs">43,14</text>
<text x="1838" y="919.9" font-size="16.2" fill="#f0f0f0" textLength="46.6158" lengthAdjust="spacingAndGlyphs">68,55</text>
<text x="555.5" y="948" font-size="16.2" fill="#e4e4e4" textLength="71.4868" lengthAdjust="spacingAndGlyphs">ΔE 2000</text>
<text x="691.7" y="948" font-size="16.2" fill="#e4e4e4" textLength="36.2557" lengthAdjust="spacingAndGlyphs">0,90</text>
<text x="762.3" y="948" font-size="16.2" fill="#e4e4e4" textLength="36.2557" lengthAdjust="spacingAndGlyphs">0,45</text>
<text x="835" y="948" font-size="16.2" fill="#e4e4e4" textLength="36.2557" lengthAdjust="spacingAndGlyphs">0,30</text>
<text x="907.8" y="948" font-size="16.2" fill="#e4e4e4" textLength="36.2557" lengthAdjust="spacingAndGlyphs">0,47</text>
<text x="980.8" y="948" font-size="16.2" fill="#e4e4e4" textLength="36.2557" lengthAdjust="spacingAndGlyphs">0,61</text>
<text x="1054.4" y="948" font-size="16.2" fill="#e4e4e4" textLength="36.2557" lengthAdjust="spacingAndGlyphs">0,87</text>
<text x="1107" y="948" font-size="16.2" fill="#e4e4e4" textLength="36.2557" lengthAdjust="spacingAndGlyphs">1,85</text>
<text x="1193.6" y="948" font-size="16.2" fill="#e4e4e4" textLength="36.2557" lengthAdjust="spacingAndGlyphs">1,95</text>
<text x="1281.8" y="948" font-size="16.2" fill="#e4e4e4" textLength="36.2557" lengthAdjust="spacingAndGlyphs">1,65</text>
<text x="1360" y="948" font-size="16.2" fill="#e4e4e4" textLength="36.2557" lengthAdjust="spacingAndGlyphs">1,37</text>
<text x="1428.4" y="948" font-size="16.2" fill="#e4e4e4" textLength="36.2557" lengthAdjust="spacingAndGlyphs">1,07</text>
<text x="1535.6" y="948" font-size="16.2" fill="#e4e4e4" textLength="34.873" lengthAdjust="spacingAndGlyphs">1,11</text>
<text x="1649" y="948" font-size="16.2" fill="#e4e4e4" textLength="36.2557" lengthAdjust="spacingAndGlyphs">5,09</text>
<text x="1719.8" y="948" font-size="16.2" fill="#e4e4e4" textLength="36.2557" lengthAdjust="spacingAndGlyphs">1,53</text>
<text x="1838" y="948" font-size="16.2" fill="#e4e4e4" textLength="36.2557" lengthAdjust="spacingAndGlyphs">0,93</text>
</g>
<rect x="550.8" y="956.8" width="1367.5" height="16" fill="#585858" rx="3"/>
<rect x="551" y="957" width="17.3" height="15.6" fill="#9c9c9c" rx="3"/>
<path d="M555 964.8 l7.5 -6 v12 z" fill="#555"/>
<rect x="1898.5" y="957" width="19.5" height="15.6" fill="#9c9c9c" rx="3"/>
<path d="M1913 964.8 l-7.5 -6 v12 z" fill="#555"/>
<rect x="572" y="958" width="861" height="14" fill="#474747" rx="7"/>
<rect x="201" y="976.5" width="1719" height="64" fill="#2c2c2c"/>
<path d="M202 1039.5 V983 a4 4 0 0 1 4 -4 H254 a4 4 0 0 1 4 4 V1039.5 Z" fill="url(#gbt)" stroke="#b4b4b4" stroke-width="1" stroke-opacity="0.6"/>
<rect x="207.3" y="984.3" width="46" height="24" fill="#ffffff" rx="3.5" stroke="#ffffff" stroke-width="0.8" stroke-opacity="0.35"/>
<rect x="207.3" y="984.3" width="46" height="24" fill="url(#gsws)" rx="3.5"/>
<text x="230" y="1023.4" font-size="10.8" fill="#2c2c2c" font-weight="bold" text-anchor="middle" textLength="27.3354" lengthAdjust="spacingAndGlyphs">White</text>
<path d="M260.14 1039.5 V983 a4 4 0 0 1 4 -4 H312.14 a4 4 0 0 1 4 4 V1039.5 Z" fill="url(#gbt)" stroke="#b4b4b4" stroke-width="1" stroke-opacity="0.6"/>
<rect x="265.44" y="984.3" width="46" height="24" fill="#e6e6e6" rx="3.5" stroke="#ffffff" stroke-width="0.8" stroke-opacity="0.35"/>
<rect x="265.44" y="984.3" width="46" height="24" fill="url(#gsws)" rx="3.5"/>
<text x="288.14" y="1023.4" font-size="10.8" fill="#2c2c2c" font-weight="bold" text-anchor="middle" textLength="36.8536" lengthAdjust="spacingAndGlyphs">Gray 80</text>
<path d="M318.28 1039.5 V983 a4 4 0 0 1 4 -4 H370.28 a4 4 0 0 1 4 4 V1039.5 Z" fill="url(#gbt)" stroke="#b4b4b4" stroke-width="1" stroke-opacity="0.6"/>
<rect x="323.58" y="984.3" width="46" height="24" fill="#d0d0d0" rx="3.5" stroke="#ffffff" stroke-width="0.8" stroke-opacity="0.35"/>
<rect x="323.58" y="984.3" width="46" height="24" fill="url(#gsws)" rx="3.5"/>
<text x="346.28" y="1023.4" font-size="10.8" fill="#2c2c2c" font-weight="bold" text-anchor="middle" textLength="36.8536" lengthAdjust="spacingAndGlyphs">Gray 65</text>
<path d="M376.42 1039.5 V983 a4 4 0 0 1 4 -4 H428.42 a4 4 0 0 1 4 4 V1039.5 Z" fill="url(#gbt)" stroke="#b4b4b4" stroke-width="1" stroke-opacity="0.6"/>
<rect x="381.72" y="984.3" width="46" height="24" fill="#b9b9b9" rx="3.5" stroke="#ffffff" stroke-width="0.8" stroke-opacity="0.35"/>
<rect x="381.72" y="984.3" width="46" height="24" fill="url(#gsws)" rx="3.5"/>
<text x="404.42" y="1023.4" font-size="10.8" fill="#2c2c2c" font-weight="bold" text-anchor="middle" textLength="36.8536" lengthAdjust="spacingAndGlyphs">Gray 50</text>
<path d="M434.56 1039.5 V983 a4 4 0 0 1 4 -4 H486.56 a4 4 0 0 1 4 4 V1039.5 Z" fill="url(#gbt)" stroke="#b4b4b4" stroke-width="1" stroke-opacity="0.6"/>
<rect x="439.86" y="984.3" width="46" height="24" fill="#9e9e9e" rx="3.5" stroke="#ffffff" stroke-width="0.8" stroke-opacity="0.35"/>
<rect x="439.86" y="984.3" width="46" height="24" fill="url(#gsws)" rx="3.5"/>
<text x="462.56" y="1023.4" font-size="10.8" fill="#2c2c2c" font-weight="bold" text-anchor="middle" textLength="36.8536" lengthAdjust="spacingAndGlyphs">Gray 35</text>
<path d="M492.7 1039.5 V983 a4 4 0 0 1 4 -4 H544.7 a4 4 0 0 1 4 4 V1039.5 Z" fill="url(#gbt)" stroke="#b4b4b4" stroke-width="1" stroke-opacity="0.6"/>
<rect x="498" y="984.3" width="46" height="24" fill="#000000" rx="3.5" stroke="#ffffff" stroke-width="0.8" stroke-opacity="0.35"/>
<rect x="498" y="984.3" width="46" height="24" fill="url(#gsws)" rx="3.5"/>
<text x="520.7" y="1023.4" font-size="10.8" fill="#2c2c2c" font-weight="bold" text-anchor="middle" textLength="26.8002" lengthAdjust="spacingAndGlyphs">Black</text>
<path d="M550.84 1039.5 V983 a4 4 0 0 1 4 -4 H602.84 a4 4 0 0 1 4 4 V1039.5 Z" fill="url(#gbt)" stroke="#b4b4b4" stroke-width="1" stroke-opacity="0.6"/>
<rect x="556.14" y="984.3" width="46" height="24" fill="#735042" rx="3.5" stroke="#ffffff" stroke-width="0.8" stroke-opacity="0.35"/>
<rect x="556.14" y="984.3" width="46" height="24" fill="url(#gsws)" rx="3.5"/>
<text x="578.84" y="1023.4" font-size="10.8" fill="#2c2c2c" font-weight="bold" text-anchor="middle" textLength="46.3342" lengthAdjust="spacingAndGlyphs">Dark Skin</text>
<path d="M608.98 1039.5 V983 a4 4 0 0 1 4 -4 H660.98 a4 4 0 0 1 4 4 V1039.5 Z" fill="url(#gbt)" stroke="#b4b4b4" stroke-width="1" stroke-opacity="0.6"/>
<rect x="614.28" y="984.3" width="46" height="24" fill="#c4967f" rx="3.5" stroke="#ffffff" stroke-width="0.8" stroke-opacity="0.35"/>
<rect x="614.28" y="984.3" width="46" height="24" fill="url(#gsws)" rx="3.5"/>
<text x="636.98" y="1023.4" font-size="10.8" fill="#2c2c2c" font-weight="bold" text-anchor="middle" textLength="48.5392" lengthAdjust="spacingAndGlyphs">Light Skin</text>
<path d="M667.12 1039.5 V983 a4 4 0 0 1 4 -4 H719.12 a4 4 0 0 1 4 4 V1039.5 Z" fill="url(#gbt)" stroke="#b4b4b4" stroke-width="1" stroke-opacity="0.6"/>
<rect x="672.42" y="984.3" width="46" height="24" fill="#5c7ba4" rx="3.5" stroke="#ffffff" stroke-width="0.8" stroke-opacity="0.35"/>
<rect x="672.42" y="984.3" width="46" height="24" fill="url(#gsws)" rx="3.5"/>
<text x="695.12" y="1023.4" font-size="10.8" fill="#2c2c2c" font-weight="bold" text-anchor="middle" textLength="42.4249" lengthAdjust="spacingAndGlyphs">Blue Sky</text>
<path d="M725.26 1039.5 V983 a4 4 0 0 1 4 -4 H777.26 a4 4 0 0 1 4 4 V1039.5 Z" fill="url(#gbt)" stroke="#b4b4b4" stroke-width="1" stroke-opacity="0.6"/>
<rect x="730.56" y="984.3" width="46" height="24" fill="#586c3e" rx="3.5" stroke="#ffffff" stroke-width="0.8" stroke-opacity="0.35"/>
<rect x="730.56" y="984.3" width="46" height="24" fill="url(#gsws)" rx="3.5"/>
<text x="753.26" y="1023.4" font-size="10.8" fill="#2c2c2c" font-weight="bold" text-anchor="middle" textLength="35.1556" lengthAdjust="spacingAndGlyphs">Foliage</text>
<path d="M783.4 1039.5 V983 a4 4 0 0 1 4 -4 H835.4 a4 4 0 0 1 4 4 V1039.5 Z" fill="url(#gbt)" stroke="#b4b4b4" stroke-width="1" stroke-opacity="0.6"/>
<rect x="788.7" y="984.3" width="46" height="24" fill="#8480b8" rx="3.5" stroke="#ffffff" stroke-width="0.8" stroke-opacity="0.35"/>
<rect x="788.7" y="984.3" width="46" height="24" fill="url(#gsws)" rx="3.5"/>
<text x="795.217" y="1023.4" font-size="10.8" fill="#2c2c2c" font-weight="bold" textLength="21.7641" lengthAdjust="spacingAndGlyphs">Blue</text>
<text x="795.217" y="1035" font-size="10.8" fill="#2c2c2c" font-weight="bold" textLength="32.3668" lengthAdjust="spacingAndGlyphs">Flower</text>
<path d="M841.54 1039.5 V983 a4 4 0 0 1 4 -4 H893.54 a4 4 0 0 1 4 4 V1039.5 Z" fill="url(#gbt)" stroke="#b4b4b4" stroke-width="1" stroke-opacity="0.6"/>
<rect x="846.84" y="984.3" width="46" height="24" fill="#62c0a8" rx="3.5" stroke="#ffffff" stroke-width="0.8" stroke-opacity="0.35"/>
<rect x="846.84" y="984.3" width="46" height="24" fill="url(#gsws)" rx="3.5"/>
<text x="854.195" y="1023.4" font-size="10.8" fill="#2c2c2c" font-weight="bold" textLength="30.6891" lengthAdjust="spacingAndGlyphs">Bluish</text>
<text x="854.195" y="1035" font-size="10.8" fill="#2c2c2c" font-weight="bold" textLength="29.0272" lengthAdjust="spacingAndGlyphs">Green</text>
<path d="M899.68 1039.5 V983 a4 4 0 0 1 4 -4 H951.68 a4 4 0 0 1 4 4 V1039.5 Z" fill="url(#gbt)" stroke="#b4b4b4" stroke-width="1" stroke-opacity="0.6"/>
<rect x="904.98" y="984.3" width="46" height="24" fill="#e07a28" rx="3.5" stroke="#ffffff" stroke-width="0.8" stroke-opacity="0.35"/>
<rect x="904.98" y="984.3" width="46" height="24" fill="url(#gsws)" rx="3.5"/>
<text x="927.68" y="1023.4" font-size="10.8" fill="#2c2c2c" font-weight="bold" text-anchor="middle" textLength="35.1618" lengthAdjust="spacingAndGlyphs">Orange</text>
<path d="M957.82 1039.5 V983 a4 4 0 0 1 4 -4 H1009.82 a4 4 0 0 1 4 4 V1039.5 Z" fill="url(#gbt)" stroke="#b4b4b4" stroke-width="1" stroke-opacity="0.6"/>
<rect x="963.12" y="984.3" width="46" height="24" fill="#4858a8" rx="3.5" stroke="#ffffff" stroke-width="0.8" stroke-opacity="0.35"/>
<rect x="963.12" y="984.3" width="46" height="24" fill="url(#gsws)" rx="3.5"/>
<text x="965.73" y="1023.4" font-size="10.8" fill="#2c2c2c" font-weight="bold" textLength="40.1791" lengthAdjust="spacingAndGlyphs">Purplish</text>
<text x="965.73" y="1035" font-size="10.8" fill="#2c2c2c" font-weight="bold" textLength="21.7641" lengthAdjust="spacingAndGlyphs">Blue</text>
<path d="M1015.96 1039.5 V983 a4 4 0 0 1 4 -4 H1067.96 a4 4 0 0 1 4 4 V1039.5 Z" fill="url(#gbt)" stroke="#b4b4b4" stroke-width="1" stroke-opacity="0.6"/>
<rect x="1021.26" y="984.3" width="46" height="24" fill="#c8505c" rx="3.5" stroke="#ffffff" stroke-width="0.8" stroke-opacity="0.35"/>
<rect x="1021.26" y="984.3" width="46" height="24" fill="url(#gsws)" rx="3.5"/>
<text x="1021.64" y="1023.4" font-size="10.8" fill="#2c2c2c" font-weight="bold" textLength="44.6456" lengthAdjust="spacingAndGlyphs">Moderate</text>
<text x="1021.64" y="1035" font-size="10.8" fill="#2c2c2c" font-weight="bold" textLength="18.9737" lengthAdjust="spacingAndGlyphs">Red</text>
<path d="M1074.1 1039.5 V983 a4 4 0 0 1 4 -4 H1126.1 a4 4 0 0 1 4 4 V1039.5 Z" fill="url(#gbt)" stroke="#b4b4b4" stroke-width="1" stroke-opacity="0.6"/>
<rect x="1079.4" y="984.3" width="46" height="24" fill="#5e3c70" rx="3.5" stroke="#ffffff" stroke-width="0.8" stroke-opacity="0.35"/>
<rect x="1079.4" y="984.3" width="46" height="24" fill="url(#gsws)" rx="3.5"/>
<text x="1102.1" y="1023.4" font-size="10.8" fill="#2c2c2c" font-weight="bold" text-anchor="middle" textLength="31.2541" lengthAdjust="spacingAndGlyphs">Purple</text>
<path d="M1132.24 1039.5 V983 a4 4 0 0 1 4 -4 H1184.24 a4 4 0 0 1 4 4 V1039.5 Z" fill="url(#gbt)" stroke="#b4b4b4" stroke-width="1" stroke-opacity="0.6"/>
<rect x="1137.54" y="984.3" width="46" height="24" fill="#a4c048" rx="3.5" stroke="#ffffff" stroke-width="0.8" stroke-opacity="0.35"/>
<rect x="1137.54" y="984.3" width="46" height="24" fill="url(#gsws)" rx="3.5"/>
<text x="1144.61" y="1023.4" font-size="10.8" fill="#2c2c2c" font-weight="bold" textLength="31.2588" lengthAdjust="spacingAndGlyphs">Yellow</text>
<text x="1144.61" y="1035" font-size="10.8" fill="#2c2c2c" font-weight="bold" textLength="29.0272" lengthAdjust="spacingAndGlyphs">Green</text>
<path d="M1190.38 1039.5 V983 a4 4 0 0 1 4 -4 H1242.38 a4 4 0 0 1 4 4 V1039.5 Z" fill="url(#gbt)" stroke="#b4b4b4" stroke-width="1" stroke-opacity="0.6"/>
<rect x="1195.68" y="984.3" width="46" height="24" fill="#e8a030" rx="3.5" stroke="#ffffff" stroke-width="0.8" stroke-opacity="0.35"/>
<rect x="1195.68" y="984.3" width="46" height="24" fill="url(#gsws)" rx="3.5"/>
<text x="1200.8" y="1023.4" font-size="10.8" fill="#2c2c2c" font-weight="bold" textLength="35.1618" lengthAdjust="spacingAndGlyphs">Orange</text>
<text x="1200.8" y="1035" font-size="10.8" fill="#2c2c2c" font-weight="bold" textLength="31.2588" lengthAdjust="spacingAndGlyphs">Yellow</text>
<path d="M1248.52 1039.5 V983 a4 4 0 0 1 4 -4 H1300.52 a4 4 0 0 1 4 4 V1039.5 Z" fill="url(#gbt)" stroke="#b4b4b4" stroke-width="1" stroke-opacity="0.6"/>
<rect x="1253.82" y="984.3" width="46" height="24" fill="#343c9c" rx="3.5" stroke="#ffffff" stroke-width="0.8" stroke-opacity="0.35"/>
<rect x="1253.82" y="984.3" width="46" height="24" fill="url(#gsws)" rx="3.5"/>
<text x="1276.52" y="1023.4" font-size="10.8" fill="#2c2c2c" font-weight="bold" text-anchor="middle" textLength="21.7641" lengthAdjust="spacingAndGlyphs">Blue</text>
<path d="M1306.66 1039.5 V983 a4 4 0 0 1 4 -4 H1358.66 a4 4 0 0 1 4 4 V1039.5 Z" fill="url(#gbt)" stroke="#b4b4b4" stroke-width="1" stroke-opacity="0.6"/>
<rect x="1311.96" y="984.3" width="46" height="24" fill="#469846" rx="3.5" stroke="#ffffff" stroke-width="0.8" stroke-opacity="0.35"/>
<rect x="1311.96" y="984.3" width="46" height="24" fill="url(#gsws)" rx="3.5"/>
<text x="1334.66" y="1023.4" font-size="10.8" fill="#2c2c2c" font-weight="bold" text-anchor="middle" textLength="29.0272" lengthAdjust="spacingAndGlyphs">Green</text>
<path d="M1364.8 1039.5 V983 a4 4 0 0 1 4 -4 H1416.8 a4 4 0 0 1 4 4 V1039.5 Z" fill="url(#gbt)" stroke="#b4b4b4" stroke-width="1" stroke-opacity="0.6"/>
<rect x="1370.1" y="984.3" width="46" height="24" fill="#b4303a" rx="3.5" stroke="#ffffff" stroke-width="0.8" stroke-opacity="0.35"/>
<rect x="1370.1" y="984.3" width="46" height="24" fill="url(#gsws)" rx="3.5"/>
<text x="1392.8" y="1023.4" font-size="10.8" fill="#2c2c2c" font-weight="bold" text-anchor="middle" textLength="18.9737" lengthAdjust="spacingAndGlyphs">Red</text>
<path d="M1422.94 1039.5 V983 a4 4 0 0 1 4 -4 H1474.94 a4 4 0 0 1 4 4 V1039.5 Z" fill="url(#gbt)" stroke="#b4b4b4" stroke-width="1" stroke-opacity="0.6"/>
<rect x="1428.24" y="984.3" width="46" height="24" fill="#eecc24" rx="3.5" stroke="#ffffff" stroke-width="0.8" stroke-opacity="0.35"/>
<rect x="1428.24" y="984.3" width="46" height="24" fill="url(#gsws)" rx="3.5"/>
<text x="1450.94" y="1023.4" font-size="10.8" fill="#2c2c2c" font-weight="bold" text-anchor="middle" textLength="31.2588" lengthAdjust="spacingAndGlyphs">Yellow</text>
<path d="M1481.08 1039.5 V983 a4 4 0 0 1 4 -4 H1533.08 a4 4 0 0 1 4 4 V1039.5 Z" fill="url(#gbt)" stroke="#b4b4b4" stroke-width="1" stroke-opacity="0.6"/>
<rect x="1486.38" y="984.3" width="46" height="24" fill="#c0589a" rx="3.5" stroke="#ffffff" stroke-width="0.8" stroke-opacity="0.35"/>
<rect x="1486.38" y="984.3" width="46" height="24" fill="url(#gsws)" rx="3.5"/>
<text x="1509.08" y="1023.4" font-size="10.8" fill="#2c2c2c" font-weight="bold" text-anchor="middle" textLength="40.7363" lengthAdjust="spacingAndGlyphs">Magenta</text>
<path d="M1539.22 1039.5 V983 a4 4 0 0 1 4 -4 H1591.22 a4 4 0 0 1 4 4 V1039.5 Z" fill="url(#gbtsel)" stroke="#1a1a1a" stroke-width="1" stroke-opacity="1"/>
<rect x="1544.52" y="984.3" width="46" height="24" fill="#0088a8" rx="3.5" stroke="#055" stroke-width="0.8" stroke-opacity="0.35"/>
<rect x="1544.52" y="984.3" width="46" height="24" fill="url(#gsws)" rx="3.5"/>
<text x="1567.22" y="1023.4" font-size="10.8" fill="#fff" font-weight="bold" text-anchor="middle" textLength="24.5591" lengthAdjust="spacingAndGlyphs">Cyan</text>
<path d="M1598 997 V983 a4 4 0 0 1 4 -4 H1642 a4 4 0 0 1 4 4 V997 Z" fill="url(#gct)"/>
<rect x="1598" y="998" width="48" height="41.5" fill="url(#gct2)"/>
<circle cx="1622" cy="988" r="6.5" fill="url(#gcbl)"/>
<path d="M1618 990.5 l4 -4.5 l4 4.5 z" fill="#333"/>
<rect x="1607.5" y="1004" width="28.5" height="29" fill="#a8a8a8" rx="4" stroke="#2a2a2a" stroke-width="2.4"/>
<rect x="1609" y="1005.5" width="25.5" height="26" fill="url(#gstp)" rx="3"/>
<rect x="1615.3" y="1012.3" width="13.7" height="13" fill="#000"/>
<rect x="1647.5" y="979" width="45.5" height="29.7" fill="url(#gct)"/>
<circle cx="1670.25" cy="993.5" r="9.5" fill="url(#gcbl)"/>
<rect x="1693" y="979" width="45.6" height="29.7" fill="url(#gct)"/>
<line x1="1693" y1="979" x2="1693" y2="1008.7" stroke="#5c5c5c" stroke-width="1" />
<circle cx="1715.8" cy="993.5" r="9.5" fill="url(#gcbl)"/>
<rect x="1738.6" y="979" width="44.9" height="29.7" fill="url(#gct)"/>
<line x1="1738.6" y1="979" x2="1738.6" y2="1008.7" stroke="#5c5c5c" stroke-width="1" />
<circle cx="1761.05" cy="993.5" r="9.5" fill="url(#gcbl)"/>
<rect x="1783.5" y="979" width="44.8" height="29.7" fill="url(#gct)"/>
<line x1="1783.5" y1="979" x2="1783.5" y2="1008.7" stroke="#5c5c5c" stroke-width="1" />
<circle cx="1805.9" cy="993.5" r="9.5" fill="url(#gcbl)"/>
<rect x="1828.3" y="979" width="45" height="29.7" fill="url(#gdis)"/>
<line x1="1828.3" y1="979" x2="1828.3" y2="1008.7" stroke="#2a2a2a" stroke-width="1" />
<circle cx="1850.8" cy="993.5" r="9.5" fill="#333"/>
<rect x="1873.3" y="979" width="46.7" height="29.7" fill="url(#gdis)"/>
<line x1="1873.3" y1="979" x2="1873.3" y2="1008.7" stroke="#2a2a2a" stroke-width="1" />
<circle cx="1896.65" cy="993.5" r="9.5" fill="#333"/>
<rect x="1666.65" y="989.9" width="7.2" height="7.2" fill="#2c2c2c"/>
<path d="M1712.8 989.3 l7.6 4.3 l-7.6 4.3 z" fill="#2c2c2c"/>
<text x="1761.05" y="997" font-size="9.5" fill="#2c2c2c" font-weight="bold" text-anchor="middle" textLength="14" lengthAdjust="spacingAndGlyphs">[↔]</text>
<text x="1805.9" y="998" font-size="14.5" fill="#2c2c2c" font-weight="bold" text-anchor="middle" textLength="15" lengthAdjust="spacingAndGlyphs">∞</text>
<path d="M1846.8 991 a4.6 4.6 0 0 1 8 -1 M1854.8 996 a4.6 4.6 0 0 1 -8 1" fill="none" stroke="#1c1c1c" stroke-width="2"/>
<path d="M1855.4 987 v3.6 h-3.6 z M1846.2 1000 v-3.6 h3.6 z" fill="#1c1c1c"/>
<path d="M1647.5 1039.6 V1014 a4 4 0 0 1 4 -4 H1783.5 V1039.6 Z" fill="url(#gct)"/>
<path d="M1783.5 1039.6 V1010 H1914 a4 4 0 0 1 4 4 V1039.6 Z" fill="url(#gct)"/>
<line x1="1783.5" y1="1010" x2="1783.5" y2="1039.6" stroke="#5c5c5c" stroke-width="1" />
<circle cx="1677.7" cy="1024.8" r="9.8" fill="url(#gcbl)"/>
<circle cx="1891.2" cy="1024.8" r="9.8" fill="url(#gcbl)"/>
<text x="1677.7" y="1030.2" font-size="18" fill="#3a3a3a" font-weight="bold" text-anchor="middle" textLength="9.5" lengthAdjust="spacingAndGlyphs">«</text>
<text x="1891.2" y="1030.2" font-size="18" fill="#3a3a3a" font-weight="bold" text-anchor="middle" textLength="9.5" lengthAdjust="spacingAndGlyphs">»</text>
<text x="1704.7" y="1032" font-size="20.5" fill="#303030" font-weight="bold" textLength="50.3" lengthAdjust="spacingAndGlyphs">Back</text>
<text x="1811.3" y="1032" font-size="20.5" fill="#303030" font-weight="bold" textLength="51.8" lengthAdjust="spacingAndGlyphs">Next</text>
<rect x="0" y="1040.5" width="1920" height="39.5" fill="#0b0d10"/>
<rect x="48" y="1040.5" width="344" height="39.5" fill="#3b3b3b"/>
<path d="M15.8 1054.2 l6.8 -0.95 v6.35 h-6.8 z M23.5 1053.1 l9 -1.3 v7.8 h-9 z M15.8 1060.5 h6.8 v6.35 l-6.8 -0.95 z M23.5 1060.5 h9 v7.8 l-9 -1.3 z" fill="#fff"/>
<text x="60.2" y="1065.5" font-size="15" fill="#c4c4c4" textLength="146.5" lengthAdjust="spacingAndGlyphs">Windows durchsuchen</text>
<path d="M410.5 1053.5 h11 v13.5 h-11 z" fill="none" stroke="#fff" stroke-width="1.2"/>
<path d="M408.3 1055.5 h-2 v9.5 h2 M423.7 1055.5 h2 v9.5 h-2" fill="none" stroke="#fff" stroke-width="1.2"/>
<path d="M461.5 1061.6 H474.3 A7.9 7.9 0 1 0 472.6 1067.2" fill="none" stroke="#1979d6" stroke-width="4.6"/>
<path d="M456.3 1060.5 C456.6 1054 460.5 1050.3 466 1050.2 C461.5 1052 459.8 1055.5 459.5 1060 Z" fill="#1979d6"/>
<path d="M504 1069.7 V1052 h8 l2 2 h12.3 v15.7 z" fill="#f7c640"/>
<path d="M505 1052.8 h6 v1.4 h-6 z" fill="#fdf3c2"/>
<rect x="504" y="1056.3" width="22.3" height="13.4" fill="#ffe083"/>
<path d="M508.5 1069.7 v-7 h13.3 v7 h-3.5 v-3.6 h-6.3 v3.6 z" fill="#2aa4ea"/>
<rect x="495" y="1077.8" width="40" height="2.2" fill="#76b9ed"/>
<path d="M553 1055 l17 -2.4 l4.7 1.2 v16.4 l-17 2.2 l-4.7 -1.6 z" fill="#fff"/>
<path d="M559 1054 c0 -7 9 -8 9.5 -1.2" fill="none" stroke="#fff" stroke-width="1.4"/>
<path d="M557.5 1060.5 l5 -0.7 v4.6 l-5 0.5 z M563.6 1059.6 l5.6 -0.8 v5 l-5.6 0.5 z M557.5 1066 l5 -0.5 v4.5 l-5 0.6 z M563.6 1065.4 l5.6 -0.5 v4.9 l-5.6 0.7 z" fill="#0b0d10"/>
<rect x="602" y="1052.3" width="22" height="15.5" fill="#3a9ee6" stroke="#1b6fb4" stroke-width="0.8"/>
<rect x="603.5" y="1053.8" width="19" height="12.5" fill="#8fd0f8"/>
<circle cx="609.2" cy="1058.6" r="3.2" fill="#fafafa"/>
<path d="M609.2 1058.6 v-3.2 a3.2 3.2 0 0 1 3.2 3.2 z" fill="#f09030"/>
<rect x="614.5" y="1055.2" width="6.8" height="1.6" fill="#fff"/>
<rect x="614.5" y="1058" width="6.8" height="1.6" fill="#fff"/>
<rect x="614.5" y="1060.8" width="6.8" height="1.6" fill="#fff"/>
<rect x="605" y="1063.6" width="8" height="1.4" fill="#f09030"/>
<rect x="613" y="1063.6" width="8.4" height="1.4" fill="#2a80c8"/>
<rect x="593" y="1077.8" width="39.8" height="2.2" fill="#76b9ed"/>
<rect x="638" y="1040.5" width="48.3" height="39.5" fill="#383c41"/>
<path d="M654.5 1048.2 L672.4 1063.6 L656.8 1071.6 Q654.6 1071.8 654 1069.5 L651.6 1051.5 Q652 1048 654.5 1048.2 Z" fill="url(#gico2)"/>
<text x="657.4" y="1064.4" font-size="9.5" fill="#2cf62c" font-weight="bold" stroke="#000" stroke-width="0.5">5</text>
<rect x="638" y="1077.8" width="48.3" height="2.2" fill="#76b9ed"/>
<path d="M700 1063 c-1.5 -7 6 -11.5 13 -10.5 c7 1 9.5 6 8 10.5 c-1.2 3.5 -4.5 2 -6 4 c-1.3 1.8 0.5 4.2 -3 4.6 c-6 0.6 -11 -3.6 -12 -8.600000000000001 z" fill="#e4eef6" stroke="#8aa0b4" stroke-width="0.8"/>
<circle cx="705" cy="1061" r="1.7" fill="#e04030"/>
<circle cx="708.5" cy="1056.6" r="1.7" fill="#f0b020"/>
<circle cx="714" cy="1055.5" r="1.7" fill="#40a840"/>
<circle cx="718" cy="1059" r="1.6" fill="#3070d0"/>
<circle cx="706" cy="1066" r="1.6" fill="#9a50c0"/>
<path d="M724.8 1048.5 l-9.6 19.5 l-1.6 3.2 l2.8 -2.4 z" fill="#e8963c" stroke="#a05a18" stroke-width="0.6"/>
<path d="M724.8 1048.5 l-2.2 1 l-1 3.6 l2.6 -1 z" fill="#d8b070"/>
<rect x="691.3" y="1077.8" width="39.6" height="2.2" fill="#76b9ed"/>
<path d="M1726.5 1062.5 l5.7 -5.7 l5.7 5.7" fill="none" stroke="#fff" stroke-width="1.3"/>
<path d="M1749 1055.5 h14.5 v8.8 h-14.5 z" fill="#fff"/>
<rect x="1763.5" y="1057.8" width="1.3" height="4" fill="#fff"/>
<path d="M1749.5 1054.2 h4 v1.5 h-4 z" fill="#fff"/>
<circle cx="1751.2" cy="1058.3" r="1.3" fill="#0b0d10"/>
<path d="M1779 1063 a9 9 0 0 1 7.5 -7.5 M1781.5 1064.5 a6 6 0 0 1 5 -5 M1784 1065 a3 3 0 0 1 2.6 -2.6" fill="none" stroke="#8c8c8c" stroke-width="1.1"/>
<rect x="1785.3" y="1064.3" width="1.8" height="1.8" fill="#8c8c8c"/>
<circle cx="1776.3" cy="1063.8" r="4.6" fill="#e81123"/>
<path d="M1774.3 1061.8 l4 4 M1778.3 1061.8 l-4 4" fill="none" stroke="#fff" stroke-width="1"/>
<path d="M1797.3 1057.5 h2.6 l3.4 -3.4 v13.8 l-3.4 -3.4 h-2.6 z" fill="none" stroke="#fff" stroke-width="1"/>
<path d="M1805.6 1058.6 a3.4 3.4 0 0 1 0 4.8 M1807.9 1056.4 a6.5 6.5 0 0 1 0 9.2" fill="none" stroke="#ccc" stroke-width="1"/>
<path d="M1820 1052.3 h16.2 v12.5 h-6.3 l-1.9 2.3 l-1.9 -2.3 h-6.1 z" fill="#fff"/>
<line x1="1823" y1="1056" x2="1833.3" y2="1056" stroke="#0b0d10" stroke-width="1" />
<line x1="1823" y1="1058.6" x2="1833.3" y2="1058.6" stroke="#0b0d10" stroke-width="1" />
<line x1="1823" y1="1061.2" x2="1830" y2="1061.2" stroke="#0b0d10" stroke-width="1" />
<text x="1877.4" y="1054.4" font-size="11.6" fill="#fff" text-anchor="middle" textLength="27.3" lengthAdjust="spacingAndGlyphs">06:58</text>
<text x="1877.4" y="1071.5" font-size="11.6" fill="#fff" text-anchor="middle" textLength="52.8" lengthAdjust="spacingAndGlyphs">13.05.2016</text>
<line x1="1915.6" y1="1040.5" x2="1915.6" y2="1080" stroke="#5a5a5a" stroke-width="1" />
<g clip-path="url(#cwm)" opacity="0.36">
<text x="1373.8" y="925.2" font-size="27" fill="#fff" textLength="256.5" lengthAdjust="spacingAndGlyphs">Windows aktivieren</text>
<text x="1373.8" y="956.4" font-size="20" fill="#fff" textLength="467" lengthAdjust="spacingAndGlyphs">Wechseln Sie zu den Einstellungen, um Windows</text>
<text x="1373.8" y="986.7" font-size="20" fill="#fff" textLength="125.7" lengthAdjust="spacingAndGlyphs">zu aktivieren.</text>
</g>
</svg>
</body></html>
